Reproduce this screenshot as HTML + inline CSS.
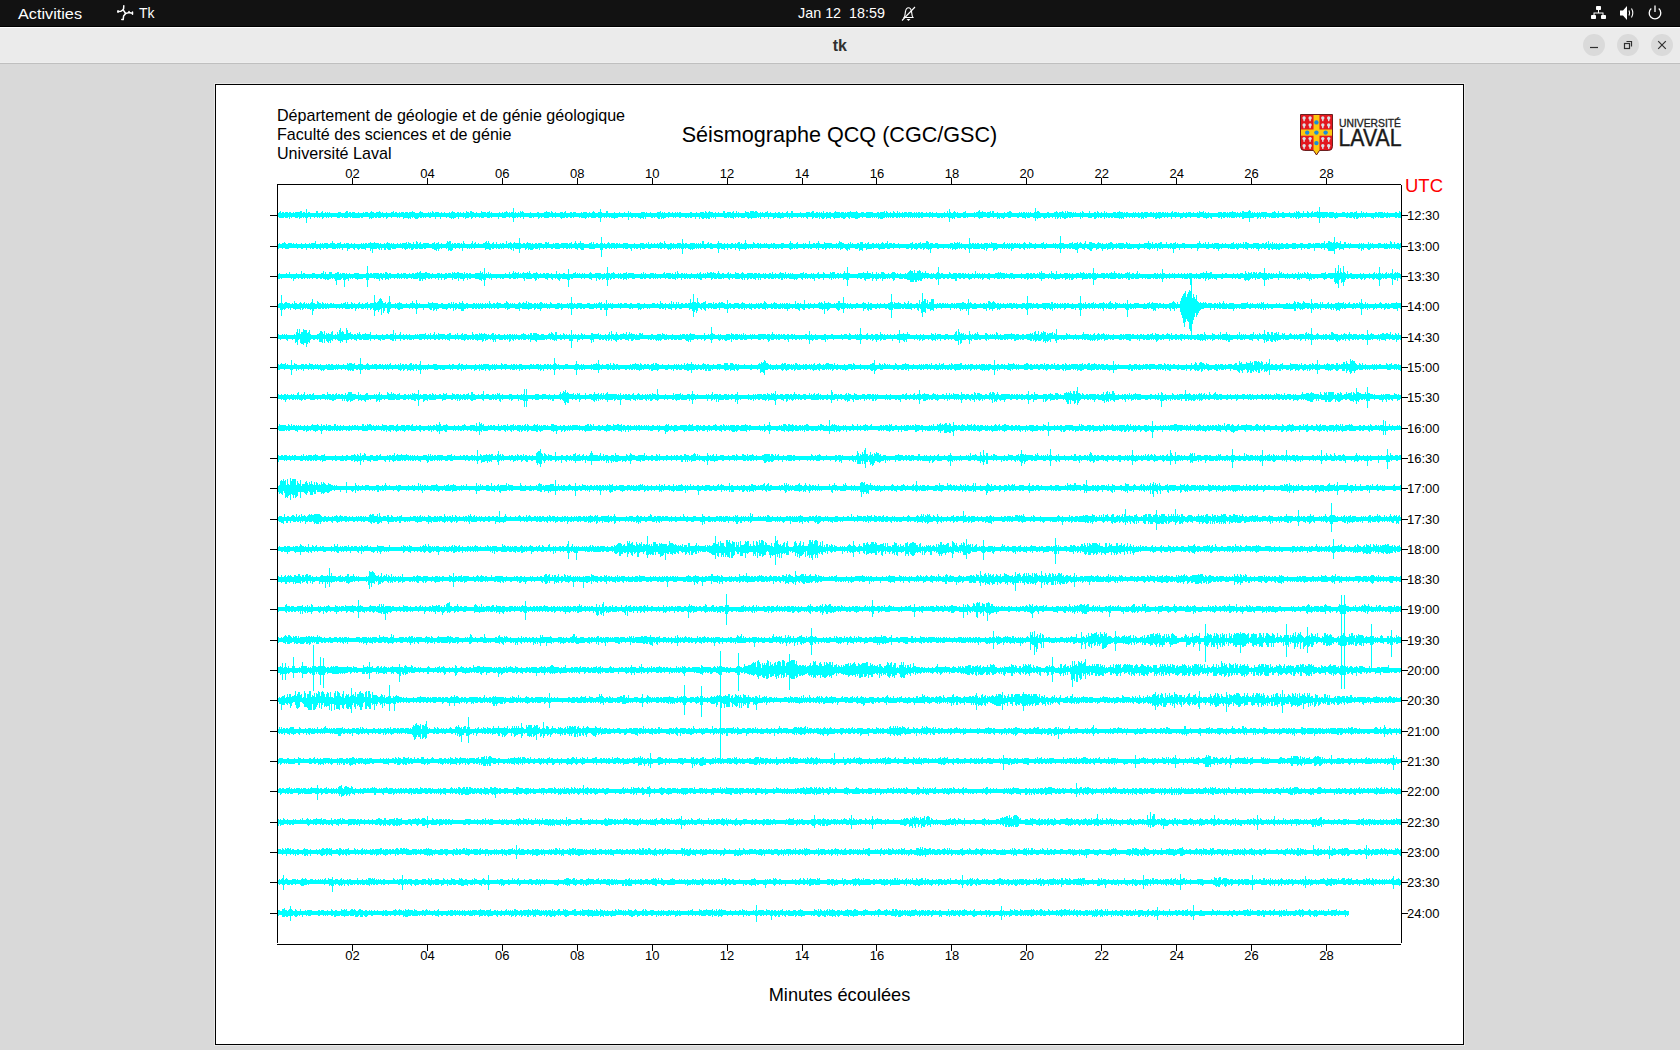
<!DOCTYPE html>
<html><head><meta charset="utf-8">
<style>
html,body{margin:0;padding:0;}
body{width:1680px;height:1050px;overflow:hidden;background:#d9d9d9;position:relative;font-family:"Liberation Sans",sans-serif;}
.abs{position:absolute;}
#top{left:0;top:0;width:1680px;height:26px;background:#121212;}
#topline{left:0;top:26px;width:1680px;height:1px;background:#000;}
#title{left:0;top:27px;width:1680px;height:37px;background:#ebebeb;}
#tl1{left:0;top:27px;width:1680px;height:1px;background:#fff;}
#tl2{left:0;top:62px;width:1680px;height:1px;background:#eeeeee;}
#tl3{left:0;top:63px;width:1680px;height:1px;background:#bfbfbf;}
#canvas{left:214px;top:83px;width:1249px;height:961px;background:#fff;border:1px solid #000;box-shadow:0 0 0 1px #e8e8e8;}
svg{position:absolute;left:0;top:0;}
.tb{color:#fff;font-size:14px;}
</style></head><body>
<div id="top" class="abs"></div>
<div id="topline" class="abs"></div>
<div id="title" class="abs"></div>
<div id="tl1" class="abs"></div>
<div id="tl2" class="abs"></div>
<div id="tl3" class="abs"></div>
<div id="canvas" class="abs" style="left:215px;top:84px;width:1247px;height:959px;"></div>
<svg width="1680" height="1050" viewBox="0 0 1680 1050" font-family="Liberation Sans, sans-serif">
<!-- top bar -->
<text x="18" y="18.5" fill="#fff" font-size="14.5" textLength="64" lengthAdjust="spacingAndGlyphs">Activities</text>
<g fill="none" stroke="#fff" stroke-width="1.5" stroke-linecap="round" stroke-linejoin="round">
<path d="M123.8 5.8L123.6 8.5L123.2 9.8L121 11.2L118 11.6"/>
<path d="M123.2 9.8L125.6 13.5L128.8 12.6L132.3 13.2"/>
<path d="M125.6 13.5L123.6 16L123.2 19.6L121.8 19.6"/>
<path d="M118 10.8V12.2M132.5 12V14.2M129 11.5V12.5"/>
</g>
<text x="139" y="18" fill="#fff" font-size="14.5" textLength="15.5" lengthAdjust="spacingAndGlyphs">Tk</text>
<text x="798" y="18" fill="#fff" font-size="14.5" textLength="87" lengthAdjust="spacingAndGlyphs" xml:space="preserve">Jan 12  18:59</text>
<g fill="none" stroke="#fff" stroke-width="1.1">
<path d="M904 17.5C905.5 15.5 905 13 905.5 11.5C906 9 907.5 7.8 908.5 7.8C909.5 7.8 911 9 911.5 11.5C912 13 911.5 15.5 913 17.5Z"/>
<path d="M902 20.5L915 7"/>
</g>
<path d="M906.5 19H910.5L908.5 21Z" fill="#fff"/>
<!-- network -->
<g fill="#fff">
<rect x="1596" y="6" width="5" height="4" rx="0.8"/>
<rect x="1591" y="15" width="5" height="4" rx="0.8"/>
<rect x="1601" y="15" width="5" height="4" rx="0.8"/>
<path d="M1598 10h1v2.5h4.5v2.5h-1v-1.5h-8v1.5h-1v-2.5h4.5z"/>
</g>
<!-- volume -->
<path d="M1620 10.5h3l4-4.5v14l-4-4.5h-3z" fill="#fff"/>
<g fill="none" stroke="#fff" stroke-width="1.1">
<path d="M1629 10.5q1.3 2.5 0 5"/>
<path d="M1631.5 8.5q2.6 4.5 0 9"/>
</g>
<!-- power -->
<g fill="none" stroke="#fff" stroke-width="1.3">
<path d="M1651.3 8.6A5.8 5.8 0 1 0 1658.7 8.6"/>
<path d="M1655 5.5v6.5"/>
</g>
<!-- title -->
<text x="839.8" y="51" fill="#303030" font-size="16" font-weight="bold" text-anchor="middle">tk</text>
<!-- window buttons -->
<circle cx="1594" cy="45" r="11" fill="#dadada"/>
<circle cx="1628" cy="45" r="11" fill="#dadada"/>
<circle cx="1662" cy="45" r="11" fill="#dadada"/>
<g stroke="#303030" stroke-width="1.2" fill="none">
<path d="M1590 47.5H1598"/>
<path d="M1658.2 41.2L1665.8 48.8M1665.8 41.2L1658.2 48.8"/>
<rect x="1624.5" y="43.5" width="5" height="5"/>
<path d="M1626.5 41.5H1631.5V46.5"/>
</g>
<!-- header -->
<g fill="#000" font-size="16.1">
<text x="277" y="121">Département de géologie et de génie géologique</text>
<text x="277" y="140">Faculté des sciences et de génie</text>
<text x="277" y="159">Université Laval</text>
</g>
<text x="839.5" y="142" font-size="21.6" text-anchor="middle" fill="#000">Séismographe QCQ (CGC/GSC)</text>
<!-- logo -->
<g>
<path d="M1300.5 114.5H1332.5V146.5Q1332.5 150.5 1328.5 150.5H1319.5L1316.5 155L1313.5 150.5H1304.5Q1300.5 150.5 1300.5 146.5Z" fill="#e3171e"/>
<path d="M1313.5 115H1319.5V150.8L1316.5 154.6L1313.5 150.8Z" fill="#fdc80f"/>
<rect x="1301" y="129.5" width="31" height="6.2" fill="#fdc80f"/>
<path d="M1300.5 114.5H1332.5V146.5Q1332.5 150.5 1328.5 150.5H1319.5L1316.5 155L1313.5 150.5H1304.5Q1300.5 150.5 1300.5 146.5Z" fill="none" stroke="#5c1414" stroke-width="0.9"/>
<g fill="#1c8bd6">
<circle cx="1316.4" cy="122.4" r="2.2"/><circle cx="1307.2" cy="132.6" r="2.2"/><circle cx="1316.4" cy="132.6" r="2.2"/><circle cx="1325.6" cy="132.6" r="2.2"/><circle cx="1316.4" cy="143.1" r="2.2"/>
</g>
<g fill="#dde2e6">
<circle cx="1304.1" cy="118.0" r="1.7"/><rect x="1303.4" y="119.0" width="1.4" height="2.2"/>
<circle cx="1304.1" cy="125.0" r="1.7"/><rect x="1303.4" y="126.0" width="1.4" height="2.2"/>
<circle cx="1304.1" cy="138.6" r="1.7"/><rect x="1303.4" y="139.6" width="1.4" height="2.2"/>
<circle cx="1304.1" cy="145.7" r="1.7"/><rect x="1303.4" y="146.7" width="1.4" height="2.2"/>
<circle cx="1310.1" cy="118.0" r="1.7"/><rect x="1309.4" y="119.0" width="1.4" height="2.2"/>
<circle cx="1310.1" cy="125.0" r="1.7"/><rect x="1309.4" y="126.0" width="1.4" height="2.2"/>
<circle cx="1310.1" cy="138.6" r="1.7"/><rect x="1309.4" y="139.6" width="1.4" height="2.2"/>
<circle cx="1310.1" cy="145.7" r="1.7"/><rect x="1309.4" y="146.7" width="1.4" height="2.2"/>
<circle cx="1322.8" cy="118.0" r="1.7"/><rect x="1322.1" y="119.0" width="1.4" height="2.2"/>
<circle cx="1322.8" cy="125.0" r="1.7"/><rect x="1322.1" y="126.0" width="1.4" height="2.2"/>
<circle cx="1322.8" cy="138.6" r="1.7"/><rect x="1322.1" y="139.6" width="1.4" height="2.2"/>
<circle cx="1322.8" cy="145.7" r="1.7"/><rect x="1322.1" y="146.7" width="1.4" height="2.2"/>
<circle cx="1328.7" cy="118.0" r="1.7"/><rect x="1328.0" y="119.0" width="1.4" height="2.2"/>
<circle cx="1328.7" cy="125.0" r="1.7"/><rect x="1328.0" y="126.0" width="1.4" height="2.2"/>
<circle cx="1328.7" cy="138.6" r="1.7"/><rect x="1328.0" y="139.6" width="1.4" height="2.2"/>
<circle cx="1328.7" cy="145.7" r="1.7"/><rect x="1328.0" y="146.7" width="1.4" height="2.2"/>
</g>
<text x="1339" y="127.3" font-size="11.6" fill="#222" stroke="#222" stroke-width="0.35" textLength="62" lengthAdjust="spacingAndGlyphs">UNIVERSITÉ</text>
<text x="1338.5" y="146" font-size="23" fill="#1a1a1a" stroke="#1a1a1a" stroke-width="0.4" textLength="63" lengthAdjust="spacingAndGlyphs">LAVAL</text>
</g>
<text x="1405" y="192" font-size="18.5" fill="#ff0000">UTC</text>
<text x="839.5" y="1001" font-size="18.2" text-anchor="middle" fill="#000">Minutes écoulées</text>
<g fill="#00ffff" shape-rendering="crispEdges">
<path d="M278 213h1v-1h1v-1h1v2h1v-1h2v1h1v-1h3v1h1v-1h2v1h2v-1h1v1h1v-1h5v-1h2v2h1v-1h2v1h1v-4h1v4h1v-1h2v1h6v-2h2v2h3v-1h1v-1h1v2h2v-1h1v1h1v-1h1v1h1v-1h1v1h8v-1h3v1h4v-1h1v-1h2v2h1v-1h2v1h1v-1h3v1h3v-1h1v1h4v-1h1v1h1v-1h3v1h2v-1h1v-1h1v1h2v1h2v-1h3v-1h1v1h1v1h1v-1h1v1h3v-1h1v1h4v-1h2v-1h1v2h1v-1h2v1h2v-1h1v1h1v-1h3v1h1v-1h3v1h1v-1h3v-1h1v1h2v1h4v-1h1v-1h1v1h2v1h5v-1h1v1h1v-1h1v1h1v-2h1v1h1v1h1v-1h4v1h2v-1h1v1h2v-1h1v1h4v-1h1v1h1v-1h1v-1h1v1h2v1h2v-1h2v1h1v-1h1v1h2v-1h1v1h2v-2h1v1h2v1h1v-2h2v1h2v1h2v-1h1v1h4v-2h1v1h4v1h1v-1h2v-1h1v2h1v-1h1v1h7v-1h1v1h2v-1h1v1h1v-1h2v-1h1v1h1v1h1v-1h1v1h1v-1h2v-4h1v5h1v-1h1v1h2v-1h1v1h1v-2h1v1h1v-1h1v1h1v1h6v-1h1v1h6v-1h2v1h5v-1h2v-1h1v1h3v1h1v-2h1v1h1v1h2v-1h1v1h4v-1h3v1h1v-1h1v-1h1v2h4v-1h2v1h1v-1h3v1h5v-1h1v1h1v-1h4v1h2v-1h1v1h2v-1h1v-1h1v1h1v1h3v-1h2v-3h1v3h1v1h4v-2h2v2h6v-1h1v1h4v-1h1v1h4v-1h1v1h3v-2h1v2h1v-1h1v1h10v-1h4v1h1v-1h1v1h3v-1h1v1h6v-1h3v-1h1v2h1v-1h1v1h1v-1h1v1h3v-1h2v1h2v-1h1v1h2v-1h1v1h1v-1h1v1h1v-1h2v1h9v-1h2v1h4v-1h1v1h3v-1h4v1h1v-2h1v1h1v1h1v-1h1v-1h1v1h3v1h2v-1h1v1h2v-1h1v1h4v-2h2v2h2v-1h4v1h1v-1h1v-1h1v2h2v-2h1v2h1v-1h1v1h6v-2h1v1h3v1h1v-2h4v1h1v-1h2v1h1v1h2v-1h1v1h1v-1h1v1h2v-1h2v-1h1v2h2v-1h1v1h4v-1h1v1h2v-1h2v1h2v-1h1v1h3v-1h1v-1h1v2h3v-2h2v2h7v-1h1v1h5v-1h4v1h1v-1h1v-1h2v2h2v-1h2v1h1v-1h1v1h1v-1h1v1h1v-2h1v2h2v-1h2v1h1v-1h2v1h3v-1h1v-1h1v1h4v1h1v-1h3v1h1v-1h1v1h1v-1h3v-1h1v1h5v-1h1v1h1v1h3v-1h3v1h2v-1h7v1h4v-1h2v1h1v-1h4v-1h1v2h1v-2h1v1h1v1h2v-1h1v1h2v-2h1v1h1v1h2v-2h1v2h1v-1h1v1h2v-1h1v1h1v-1h3v1h1v-1h4v1h2v-1h1v1h1v-1h1v1h1v-1h2v1h1v-1h2v1h3v-1h1v1h2v-1h2v1h1v-1h1v1h3v-1h1v1h7v-1h1v1h2v-2h1v2h1v-4h1v3h1v1h2v-1h1v-1h1v1h1v1h1v-1h1v1h5v-1h2v-1h1v2h8v-1h1v1h1v-1h2v-1h1v-1h1v2h2v-1h1v1h3v1h1v-1h3v-1h1v2h1v-2h2v2h3v-1h1v1h6v-1h1v1h2v-1h2v-1h2v1h1v1h7v-1h1v1h1v-1h1v1h1v-1h2v1h1v-1h1v1h1v-1h1v1h1v-1h1v1h3v-1h1v-4h1v4h1v-1h2v1h1v1h7v-1h2v1h5v-1h2v-1h1v1h1v1h1v-1h3v-1h1v1h1v1h1v-2h1v2h1v-2h1v1h4v1h1v-1h1v1h1v-1h1v1h4v-1h1v1h1v-2h1v1h1v1h5v-2h1v2h4v-1h2v1h1v-2h1v1h1v1h2v-1h1v1h2v-2h1v2h1v-1h1v1h6v-1h3v1h1v-1h2v-1h1v1h3v1h1v-1h1v1h1v-1h2v1h5v-1h1v1h1v-1h1v1h2v-1h1v1h2v-1h2v1h1v-1h4v1h2v-1h2v1h1v-1h1v1h2v-1h1v1h1v-1h3v1h1v-1h2v1h1v-1h1v1h1v-1h1v1h3v-1h1v-1h1v2h1v-1h3v1h1v-1h1v1h4v-1h1v1h2v-1h1v1h1v-1h3v1h2v-1h1v1h3v-1h1v1h1v-2h1v1h3v-1h1v2h1v-1h1v1h2v-1h1v1h9v-1h4v1h1v-1h3v1h1v-1h1v1h1v-1h3v-1h1v1h3v1h1v-1h1v1h2v-1h1v1h1v-2h2v1h4v-1h1v-1h1v1h1v2h1v-1h1v1h1v-1h1v1h2v-1h1v1h1v-1h1v1h1v-1h6v1h5v-1h2v-1h1v1h1v1h2v-2h1v2h3v-1h2v1h5v-1h1v1h4v-1h1v1h1v-2h1v1h1v-1h1v1h1v1h3v-2h1v2h3v-2h1v1h1v1h2v-1h1v-1h1v2h1v-1h3v-1h1v1h1v-5h1v5h8v1h1v-1h5v1h2v-1h1v1h5v-1h3v1h2v-1h1v1h2v-1h3v1h1v-1h2v-1h1v2h4v-2h1v2h1v-1h1v1h2v-1h1v1h8v-1h2v1h1v-1h5v1h1v-1h1v1h2v-1h1v1h7v-1h2v1h2v-2h1v1h1v6h-3v-1h-1v1h-2v-1h-5v1h-1v-1h-1v1h-2v-1h-2v1h-4v-1h-1v1h-1v-1h-2v1h-1v-1h-1v2h-1v-1h-2v-1h-5v1h-1v-1h-2v1h-1v-1h-1v1h-1v-1h-1v1h-1v1h-2v-2h-1v2h-1v-1h-1v-1h-1v1h-3v-1h-1v1h-2v-1h-8v1h-2v1h-1v-1h-1v-1h-1v1h-4v-1h-2v1h-1v-1h-1v1h-3v-1h-1v1h-1v5h-1v-5h-2v-1h-5v1h-1v-1h-2v1h-2v-1h-4v1h-1v-1h-1v1h-2v1h-1v-2h-1v2h-1v-1h-1v-1h-1v1h-1v-1h-1v1h-2v-1h-5v1h-3v-1h-3v1h-2v-1h-1v1h-5v-1h-1v1h-1v-1h-3v2h-1v-2h-1v1h-1v-1h-2v2h-1v-2h-1v1h-1v1h-1v-2h-3v1h-4v4h-1v-4h-5v1h-2v-2h-2v1h-1v-1h-2v1h-1v-1h-1v1h-4v-1h-1v1h-1v-1h-1v1h-1v-1h-2v1h-2v-1h-1v2h-1v-2h-1v1h-2v-1h-6v2h-1v-1h-1v-1h-1v1h-2v1h-1v-1h-3v-1h-3v1h-3v-1h-6v1h-1v-1h-3v1h-2v-1h-2v1h-2v1h-1v-2h-4v1h-1v-1h-3v2h-1v-2h-3v1h-1v-1h-2v1h-1v-1h-2v1h-2v1h-1v-1h-2v1h-2v-2h-1v1h-1v-1h-6v1h-2v-1h-1v2h-1v-1h-1v1h-1v-2h-1v1h-2v-1h-3v1h-1v-1h-1v1h-1v-1h-2v1h-1v-1h-2v1h-1v-1h-2v2h-1v-1h-1v1h-1v-1h-1v1h-1v-1h-5v-1h-1v1h-2v-1h-1v1h-2v-1h-1v1h-1v-1h-1v2h-1v-2h-2v1h-2v-1h-1v1h-1v-1h-1v1h-1v1h-2v-2h-2v1h-4v-1h-5v1h-1v-1h-1v2h-1v-2h-7v1h-1v-1h-1v1h-2v-1h-1v1h-2v1h-2v-1h-2v-1h-1v2h-1v-2h-1v1h-1v1h-1v-2h-1v2h-1v-2h-2v1h-1v-1h-2v1h-2v-1h-1v1h-2v1h-1v-1h-1v-1h-2v1h-3v1h-1v-1h-1v3h-1v-3h-2v-1h-3v1h-3v-1h-1v2h-1v-1h-3v-1h-3v1h-2v-1h-6v1h-3v-1h-3v1h-1v1h-1v-1h-2v-1h-1v2h-1v-1h-1v1h-1v-2h-3v1h-1v-1h-3v1h-3v-1h-4v1h-3v1h-1v-1h-1v-1h-3v1h-1v-1h-6v1h-1v-1h-1v1h-3v-1h-2v1h-4v-1h-2v2h-1v-1h-1v1h-1v-1h-2v4h-1v-4h-1v-1h-3v1h-1v-1h-1v1h-2v-1h-1v1h-3v-1h-4v1h-1v-1h-2v1h-1v-1h-6v1h-2v-1h-1v1h-2v-1h-1v1h-1v-1h-1v1h-1v-1h-1v1h-1v-1h-1v1h-1v-1h-1v1h-1v-1h-3v1h-1v-1h-1v1h-1v-1h-2v1h-1v-1h-1v1h-2v-1h-2v1h-2v-1h-1v1h-1v-1h-1v1h-1v-1h-1v1h-1v-1h-1v1h-2v1h-3v-1h-1v1h-1v-2h-1v1h-1v-1h-1v1h-1v-1h-1v1h-1v-1h-1v1h-5v-1h-3v1h-1v-1h-2v1h-2v1h-3v-1h-4v-1h-1v2h-1v-1h-1v-1h-2v1h-1v1h-2v-1h-2v-1h-1v1h-5v1h-1v-1h-1v-1h-2v2h-1v-1h-3v1h-1v-2h-1v1h-1v1h-2v-1h-1v-1h-1v2h-1v-2h-1v1h-3v-1h-1v1h-1v1h-1v-2h-4v2h-1v-1h-1v-1h-2v1h-1v-1h-1v1h-1v-1h-3v1h-1v-1h-4v1h-2v-1h-1v2h-1v-2h-1v1h-1v-1h-3v1h-3v1h-1v-1h-3v-1h-1v1h-2v1h-1v-2h-4v2h-1v-2h-3v1h-1v-1h-3v2h-1v-2h-1v1h-1v-1h-1v1h-5v1h-1v-1h-2v1h-1v-1h-1v-1h-2v1h-4v-1h-2v1h-1v-1h-2v1h-1v-1h-1v2h-1v-1h-3v-1h-1v1h-1v-1h-1v1h-3v-1h-8v2h-1v-2h-1v1h-1v-1h-1v1h-1v-1h-1v2h-2v-1h-1v1h-1v-1h-2v1h-2v-1h-1v-1h-1v2h-1v-2h-3v2h-1v-2h-3v1h-2v-1h-1v1h-1v-1h-1v1h-2v-1h-4v1h-2v-1h-3v1h-1v-1h-1v1h-1v-1h-4v1h-1v-1h-2v1h-2v1h-1v-1h-1v1h-1v-2h-1v2h-2v-1h-1v-1h-2v1h-1v-1h-1v1h-2v-1h-5v2h-1v-2h-1v2h-1v-1h-2v1h-1v-1h-2v-1h-2v1h-1v-1h-2v1h-2v-1h-2v3h-1v-3h-5v1h-1v-1h-4v1h-3v1h-1v-1h-3v-1h-1v1h-1v-1h-2v1h-1v-1h-1v1h-1v-1h-2v1h-1v4h-1v-4h-2v-1h-2v1h-5v-1h-2v1h-1v-1h-1v1h-1v1h-1v-1h-4v-1h-1v1h-1v-1h-5v1h-1v-1h-1v1h-2v-1h-2v1h-2v-1h-1v1h-3v1h-1v-1h-1v-1h-4v1h-1v-1h-2v1h-1v-1h-3v1h-5v-1h-2v1h-1v-1h-1v1h-1v1h-1v-2h-4v1h-1v-1h-1v1h-3v-1h-5v2h-1v-2h-2v1h-1v-1h-2v1h-1v-1h-1v1h-2v4h-1v-4h-1v-1h-2v1h-1v-1h-3v1h-4v-1h-3v2h-1v-2h-6v1h-1v-1h-1v1h-3v-1h-3v1h-3v-1h-1v1h-1v-1h-3v1h-1v-1h-2v1h-1v1h-1v-2h-2v1h-3v1h-1v-2h-1v1h-1v-1h-4v2h-1v-2h-2v1h-2v1h-1v-1h-1v1h-1v-1h-2v-1h-2v1h-1v-1h-5v2h-1v-2h-4v2h-1v-2h-4v1h-2v-1h-3v1h-1v-1h-1v1h-1v-1h-1v1h-2v-1h-1v1h-1v1h-3v-1h-1v-1h-1v1h-1v-1h-1v2h-1v-1h-1v1h-1v-1h-4v1h-1v-2h-3v1h-1v-1h-1v1h-1v-1h-5v1h-1v-1h-3v1h-1v1h-1v-2h-2v1h-1v-1h-2v1h-3v-1h-1v1h-2v-1h-1v1h-2v1h-1v-1h-1v1h-1v-2h-6v1h-2v-1h-1v1h-8v-1h-1v1h-1v-1h-2v1h-4v-1h-1v1h-1v-1h-2v1h-3v-1h-5v1h-1v-1h-2v1h-1v-1h-1v1h-1v-1h-2v1h-1v1h-1v-2h-2v1h-1v-1h-1v1h-1v-1h-2v1h-1v-1h-3v2h-1v-2h-2v1h-1v5h-1v-5h-1v-1h-1v1h-1v-1h-1v1h-2v1h-1v-2h-1v1h-3v-1h-3v1h-1v-1h-1v2h-1v-2h-1v1h-3v-1h-1v1h-5v-1h-1z"/>
<path d="M278 244h1v-1h1v1h2v-1h2v-1h1v1h1v1h2v-1h4v1h1v-1h1v1h2v-1h1v1h4v-1h1v1h3v-1h1v1h3v-1h1v1h1v-1h4v-2h1v3h4v-1h1v1h1v-1h1v1h1v-1h4v1h2v-1h2v-2h1v2h2v1h2v-1h3v-1h1v2h3v-1h1v1h1v-1h3v1h2v-1h1v1h2v-1h1v1h6v-1h1v1h1v-1h1v1h1v-1h2v1h1v-1h2v-1h1v1h3v-1h1v1h4v1h1v-1h1v1h3v-1h1v1h1v-1h1v-1h1v1h2v1h1v-1h1v1h1v-1h1v1h3v-1h1v1h2v-1h1v1h1v-1h4v-1h1v2h1v-2h1v1h2v1h2v-2h1v2h2v-3h1v1h1v2h1v-1h1v-1h1v2h2v-1h6v1h3v-1h2v-1h1v2h1v-1h2v-1h1v2h2v-1h1v1h4v-1h1v-2h1v1h1v-1h2v3h1v-1h1v1h1v-1h2v1h1v-1h3v1h1v-1h1v1h1v-3h1v2h1v1h6v-1h1v-2h1v3h1v-1h1v-1h1v2h2v-1h1v1h4v-1h2v-1h1v-1h1v2h1v-2h1v2h1v1h2v-1h1v-1h1v2h2v-2h1v2h3v-1h1v1h1v-1h2v1h2v-3h1v3h1v-1h2v-1h1v1h1v1h1v-1h1v-1h1v1h4v-5h1v5h1v1h2v-1h2v1h1v-1h1v-1h1v1h3v1h1v-1h1v1h2v-1h2v1h1v-1h4v1h3v-2h2v1h1v-1h1v2h4v-1h1v1h1v-1h4v1h2v-1h7v1h1v-1h2v-1h1v2h2v-1h1v-2h1v2h1v1h1v-1h2v-2h1v2h3v1h5v-1h2v-1h1v2h1v-2h1v2h2v-1h2v1h2v-1h1v-6h1v6h1v1h1v-1h1v1h2v-1h1v-1h1v1h1v1h1v-1h4v1h1v-1h2v1h1v-1h1v1h3v-1h5v1h6v-1h1v1h5v-1h4v1h2v-1h1v1h1v-2h1v2h2v-1h1v1h2v-1h1v1h2v-1h1v1h1v-1h1v-1h1v1h2v1h1v-3h1v2h1v1h4v-1h2v1h1v-1h1v1h3v-1h4v1h1v-5h1v4h1v1h1v-1h2v1h3v-1h5v1h1v-1h1v1h1v-1h1v1h1v-1h1v1h1v-3h2v3h3v-1h1v-1h1v2h1v-1h2v1h5v-1h1v-2h1v2h3v1h2v-1h1v1h2v-1h1v1h3v-1h2v1h2v-1h1v1h1v-1h1v-1h2v2h1v-1h1v1h2v-1h1v-3h1v3h1v1h6v-2h1v1h1v1h2v-1h2v1h1v-1h1v1h3v-1h1v1h1v-1h1v1h4v-1h1v1h1v-1h2v1h6v-1h3v1h5v-1h1v-2h1v2h2v1h3v-1h1v-1h1v2h5v-1h1v1h1v-1h1v1h3v-3h1v3h3v-1h2v1h1v-1h2v-2h1v2h1v1h4v-2h1v1h7v1h4v-1h1v1h1v-1h1v-2h1v1h2v1h2v1h4v-1h1v1h1v-2h1v2h1v-1h1v1h4v-1h2v1h1v-2h3v2h2v-1h1v1h1v-1h1v-1h1v2h3v-1h2v1h2v-1h1v1h1v-1h1v1h2v-1h1v-1h1v1h1v1h1v-1h2v-2h1v3h1v-1h3v1h1v-1h2v1h3v-1h1v1h11v-1h2v-1h1v2h2v-1h2v1h1v-1h2v-1h1v2h1v-1h4v-2h2v1h1v2h1v-1h3v1h2v-1h3v1h12v-1h3v1h1v-2h1v1h2v-1h1v1h1v-1h1v2h1v-1h1v1h7v-6h1v5h1v1h1v-1h2v1h1v-1h1v1h1v-1h2v1h2v-1h1v1h2v-1h4v1h1v-1h1v1h1v-2h1v1h5v1h6v-1h1v-1h1v2h2v-1h1v1h1v-1h1v1h1v-1h2v1h1v-1h2v1h1v-1h1v1h1v-1h1v1h3v-1h1v-1h1v1h1v1h3v-2h1v1h2v1h3v-1h1v1h5v-1h2v-1h1v2h2v-1h1v1h6v-1h1v1h1v-1h1v1h3v-1h1v-7h1v7h3v1h5v-1h3v-1h1v2h1v-1h3v-1h1v2h1v-1h1v-1h1v1h1v1h2v-1h1v-2h1v3h3v-2h3v1h3v1h2v-1h1v-1h1v1h2v1h1v-1h1v1h3v-1h1v1h1v-1h2v-1h2v1h1v1h3v-1h1v1h1v-1h6v1h2v-2h1v1h1v1h1v-1h1v1h9v-1h1v1h4v-1h4v-2h1v2h2v1h1v-2h1v2h2v-1h2v1h1v-1h2v-1h2v2h4v-2h1v2h3v-1h2v1h1v-1h2v-1h1v2h1v-1h1v1h4v-1h3v1h12v-1h2v-2h1v2h1v1h2v-1h1v1h1v-2h1v2h2v-2h1v2h3v-1h1v1h1v-1h5v1h3v-1h1v1h2v-1h1v1h5v-1h2v-1h1v2h2v-1h1v1h1v-1h1v1h1v-1h1v1h2v-2h1v2h1v-2h2v1h2v1h4v-1h6v1h3v-1h2v1h1v-1h1v-1h1v2h1v-3h1v3h1v-1h1v1h1v-2h1v2h1v-1h1v1h1v-1h1v1h2v-1h1v1h1v-1h2v1h3v-1h2v1h4v-1h4v1h4v-1h3v1h5v-1h3v1h2v-1h1v1h1v-1h5v1h1v-1h3v-2h1v3h1v-1h2v-2h2v1h2v1h1v-1h1v-5h1v6h1v-1h2v1h2v-2h1v3h3v-2h2v2h2v-1h1v1h1v-1h1v1h8v-1h1v1h1v-1h1v1h1v-1h1v1h4v-2h1v2h1v-1h1v1h1v-1h1v1h5v-1h3v1h3v-1h1v1h1v-1h1v1h3v-3h1v1h1v2h2v-2h1v2h2v-1h2v1h1v-1h1v5h-1v2h-1v-1h-3v-1h-1v1h-1v-1h-2v1h-1v-1h-1v1h-1v-1h-1v1h-4v-1h-5v1h-1v-1h-4v1h-1v-1h-2v1h-1v1h-2v-1h-1v-1h-3v2h-1v-1h-1v2h-1v-3h-1v1h-2v-1h-8v1h-1v-1h-5v2h-1v-1h-3v1h-1v-2h-2v1h-2v5h-1v-3h-6v-2h-1v-1h-2v2h-1v-2h-2v1h-1v-1h-6v3h-1v-3h-4v1h-3v-1h-2v1h-1v-1h-2v2h-1v-2h-3v1h-1v-1h-1v1h-4v-1h-3v1h-4v-1h-1v1h-4v1h-2v-1h-1v1h-1v-1h-3v1h-1v-1h-1v-1h-1v2h-2v-2h-2v1h-2v-1h-2v1h-1v-1h-1v1h-1v2h-1v-2h-2v-1h-2v1h-1v-1h-1v1h-1v-1h-3v2h-1v-1h-2v-1h-1v1h-1v-1h-4v1h-1v1h-1v-1h-1v-1h-1v1h-5v-1h-1v1h-1v-1h-6v1h-1v-1h-1v1h-1v2h-1v-2h-2v-1h-1v1h-2v-1h-4v1h-3v-1h-7v1h-1v2h-1v-3h-5v1h-1v-1h-6v1h-1v-1h-4v2h-1v-2h-3v1h-2v4h-1v-4h-1v-1h-1v1h-1v-1h-1v1h-1v-1h-5v1h-1v-1h-1v1h-2v-1h-1v3h-1v-3h-2v1h-1v-1h-1v1h-1v-1h-1v1h-1v1h-1v-1h-2v-1h-2v1h-1v-1h-4v1h-1v1h-1v-1h-1v-1h-3v1h-1v-1h-1v1h-5v-1h-2v1h-1v-1h-1v1h-4v-1h-2v1h-1v-1h-2v1h-1v1h-1v-2h-1v1h-3v1h-1v-2h-1v1h-3v2h-1v-2h-1v-1h-2v1h-2v1h-1v-2h-3v1h-1v2h-2v-1h-1v-1h-2v-1h-2v2h-1v-1h-2v-1h-3v1h-1v4h-1v-3h-2v-1h-3v-1h-1v1h-2v-1h-1v1h-1v-1h-2v1h-2v-1h-1v1h-1v4h-1v-4h-1v-1h-1v1h-1v-1h-1v1h-1v-1h-9v1h-2v-1h-1v1h-1v-1h-6v1h-2v-1h-4v1h-1v-1h-1v1h-1v-1h-2v2h-1v-1h-1v-1h-2v1h-2v-1h-5v1h-2v2h-1v-3h-1v1h-2v-1h-1v1h-1v-1h-1v1h-1v-1h-1v1h-1v-1h-4v1h-1v1h-1v-1h-1v1h-1v1h-1v-3h-5v1h-1v2h-1v-3h-1v2h-1v-1h-3v-1h-1v1h-7v-1h-1v1h-2v4h-1v-4h-1v-1h-2v2h-1v-1h-1v-1h-2v1h-1v-1h-1v1h-1v-1h-1v1h-2v1h-1v-1h-2v1h-1v-2h-1v1h-1v-1h-1v1h-1v-1h-4v1h-1v-1h-4v1h-2v-1h-5v1h-1v4h-1v-4h-1v1h-1v-1h-2v-1h-1v1h-1v1h-1v-2h-1v1h-2v-1h-2v1h-1v1h-1v-1h-2v-1h-1v1h-1v1h-1v-2h-2v1h-3v-1h-6v1h-1v-1h-5v1h-1v-1h-3v1h-3v-1h-2v1h-5v1h-1v-1h-1v-1h-4v1h-1v-1h-1v1h-5v1h-1v-2h-3v3h-1v-1h-2v1h-1v-3h-1v1h-3v-1h-5v2h-1v-1h-1v2h-1v-1h-1v-1h-1v-1h-2v1h-2v1h-1v-2h-1v1h-1v-1h-1v1h-1v-1h-3v1h-1v-1h-2v1h-1v-1h-2v1h-1v1h-1v-2h-1v1h-2v-1h-3v2h-1v-2h-1v1h-1v-1h-4v1h-2v-1h-1v1h-1v-1h-3v1h-2v-1h-5v1h-2v-1h-1v1h-1v-1h-1v1h-2v1h-1v-1h-1v-1h-6v1h-2v-1h-2v1h-1v-1h-1v1h-2v-1h-1v1h-1v-1h-3v1h-2v-1h-7v1h-1v-1h-1v1h-1v-1h-5v1h-1v-1h-1v1h-1v-1h-1v1h-1v-1h-1v1h-1v1h-1v-1h-5v2h-1v-2h-1v-1h-2v2h-1v-2h-3v1h-2v-1h-2v2h-1v-2h-2v2h-1v-1h-3v-1h-1v1h-1v4h-1v-4h-1v-1h-4v1h-3v-1h-4v1h-2v-1h-3v1h-1v-1h-1v1h-1v-1h-1v1h-1v-1h-1v1h-2v1h-1v-1h-1v1h-1v-1h-2v-1h-2v1h-1v-1h-1v1h-1v5h-1v-5h-1v-1h-1v1h-1v-1h-1v1h-1v-1h-1v1h-1v-1h-1v1h-1v-1h-1v1h-1v1h-1v-1h-1v1h-1v-1h-1v-1h-2v1h-1v-1h-2v1h-2v-1h-1v1h-1v-1h-7v1h-3v-1h-3v1h-3v-1h-1v2h-1v-2h-2v1h-2v-1h-1v1h-1v-1h-2v3h-1v-2h-1v-1h-2v1h-3v-1h-1v1h-1v-1h-6v1h-1v-1h-1v1h-1v-1h-2v1h-1v-1h-1v1h-1v-1h-2v1h-2v-1h-2v2h-1v7h-1v-7h-1v-2h-5v1h-6v-1h-5v2h-3v-1h-1v-1h-2v2h-1v-1h-2v-1h-3v1h-1v-1h-1v1h-1v-1h-1v1h-2v-1h-2v1h-1v-1h-3v1h-5v-1h-2v1h-2v-1h-4v1h-1v-1h-2v1h-1v-1h-3v2h-1v-2h-1v1h-3v-1h-1v1h-1v1h-3v-1h-1v1h-1v-2h-1v1h-1v1h-1v-2h-4v1h-1v4h-1v-4h-4v-1h-1v3h-1v-3h-1v2h-1v-1h-1v-1h-1v1h-1v-1h-4v1h-1v-1h-1v1h-1v-1h-1v1h-2v-1h-1v1h-1v-1h-2v1h-2v-1h-1v2h-2v-1h-3v1h-1v-2h-10v1h-1v-1h-2v1h-1v-1h-1v1h-1v-1h-1v1h-1v-1h-4v3h-1v-3h-2v1h-1v-1h-3v1h-1v-1h-2v2h-1v1h-2v-1h-1v1h-1v-3h-1v1h-1v-1h-4v1h-1v-1h-1v1h-1v2h-1v-2h-1v2h-1v-1h-2v-1h-2v-1h-6v1h-2v-1h-1v1h-4v-1h-1v1h-3v-1h-1v1h-1v1h-2v-2h-1v1h-1v-1h-1v1h-2v1h-1v-1h-1v-1h-1v1h-1v-1h-6v1h-4v-1h-1v2h-3v-1h-1v-1h-1v2h-2v-2h-2v2h-1v-2h-1v2h-1v-1h-1v-1h-1v1h-4v4h-1v-4h-1v2h-1v-3h-4v2h-1v-1h-4v-1h-1v1h-1v1h-1v-1h-1v-1h-2v2h-1v-1h-1v-1h-3v1h-2v2h-1v-3h-4v2h-1v-2h-2v1h-1v-1h-1v1h-1v-1h-1v1h-4v-1h-4v1h-2v-1h-2v1h-1v-1h-2v2h-1v-1h-1v-1h-1v1h-2v-1h-2v1h-2v-1h-1v1h-1v-1h-3v2h-1v-2h-3v1h-2v-1h-3v1h-1v-1h-8v1h-4v-1h-2v1h-1v-1h-3v1h-1z"/>
<path d="M278 274h1v-1h1v1h6v-1h1v1h2v-2h1v2h6v-1h1v1h4v-3h1v3h1v-1h2v1h7v-1h3v1h6v-1h2v-2h1v3h1v-2h1v2h3v-2h3v2h3v-1h2v-1h2v2h1v-1h1v1h1v-1h3v1h1v-1h1v1h2v-1h1v1h4v-1h5v1h7v-1h1v-7h1v7h1v1h1v-1h2v1h1v-1h6v1h1v-1h2v1h1v-1h1v1h1v-2h2v1h1v1h1v-1h2v1h6v-1h2v1h2v-1h1v1h1v-1h3v1h3v-1h1v1h2v-1h2v1h1v-1h2v-1h1v1h1v-1h1v-1h1v2h4v-1h2v1h3v1h2v-1h1v1h4v-1h3v1h1v-1h1v1h3v-1h2v1h1v-1h3v1h1v-2h1v1h1v-1h1v1h2v-1h2v1h4v1h1v-2h1v2h1v-1h2v1h1v-1h2v1h4v-1h5v-2h1v2h1v-1h1v2h1v-6h1v6h1v-1h1v1h1v-2h1v2h1v-1h1v1h14v-1h1v1h3v-2h1v2h2v-1h1v-2h1v2h1v-1h1v1h2v-1h1v2h1v-1h1v1h1v-1h1v-1h1v1h3v-1h1v1h1v-2h1v2h1v1h2v-1h3v-1h1v1h1v1h2v-1h1v1h2v-1h2v1h1v-1h3v1h2v-1h1v1h4v-3h1v3h2v-1h1v1h3v-1h2v1h3v-5h1v5h4v-1h2v-1h1v2h1v-1h1v1h1v-1h1v1h2v-1h1v1h1v-1h1v1h4v-1h1v-1h1v1h1v1h3v-1h6v1h3v-1h1v1h1v-1h1v-6h1v6h2v1h1v-1h2v-1h1v1h1v1h3v-1h1v1h1v-1h1v1h2v-1h3v-1h1v2h1v-1h6v1h7v-1h1v1h1v-2h1v2h1v-1h1v1h4v-1h4v1h1v-1h1v1h7v-1h1v-1h1v2h1v-1h5v1h1v-1h1v1h2v-2h1v2h1v-3h1v2h1v1h2v-1h2v1h1v-1h1v1h1v-1h1v1h4v-1h1v1h5v-1h1v1h1v-1h1v-1h1v2h2v-1h1v1h1v-1h1v1h1v-2h1v1h2v-1h2v1h1v-1h1v1h2v1h1v-1h1v-2h1v2h1v1h2v-1h2v1h3v-1h1v-1h1v2h1v-1h1v1h4v-2h1v1h3v1h2v-1h1v-1h1v1h1v1h3v-1h6v1h1v-1h3v1h1v-1h2v1h3v-1h1v1h1v-1h1v1h3v-1h2v1h1v-2h1v2h2v-1h1v1h3v-1h1v-1h1v1h3v1h1v-2h1v2h2v-1h1v1h1v-1h1v1h1v-1h1v1h7v-1h3v-1h1v2h1v-1h2v1h4v-1h1v1h1v-1h1v1h3v-1h1v-1h1v2h4v-2h1v1h1v1h5v-2h1v1h1v-1h3v2h2v-1h2v1h1v-1h1v1h2v-1h1v-2h1v2h2v-6h1v6h2v1h8v-1h5v-1h1v1h3v-2h1v2h3v1h1v-2h1v2h3v-2h1v2h1v-1h1v1h2v-2h3v1h1v1h3v-1h1v1h2v-1h1v-1h3v1h1v1h1v-1h1v1h2v-1h1v1h4v-1h1v1h1v-1h1v-1h1v-1h1v-1h1v1h2v2h1v-3h1v3h2v-2h2v-1h1v1h1v2h1v-1h1v1h2v-2h1v2h3v1h2v-1h1v1h1v-1h1v1h2v-1h1v-1h1v-5h1v6h1v1h1v-1h2v1h6v-2h1v1h1v1h2v-1h4v1h1v-1h3v1h1v-1h2v1h1v-1h1v1h2v-1h1v1h3v-1h1v1h2v-3h1v3h1v-1h1v1h1v-1h1v1h2v-1h1v1h1v-1h1v1h3v-1h2v1h5v-1h3v-1h1v1h1v-1h1v1h4v1h1v-1h1v1h3v-1h3v1h8v-1h1v1h4v-1h3v1h1v-1h2v1h1v-1h2v1h2v-1h1v1h1v-2h1v1h1v-2h1v2h3v1h4v-1h1v1h1v-3h1v2h2v1h2v-3h1v3h3v-1h1v1h3v-1h4v1h1v-1h1v1h2v-1h1v1h3v-1h3v1h1v-2h1v1h2v-1h1v1h1v1h1v-1h1v1h1v-1h3v1h1v-1h1v-5h1v5h2v1h1v-1h1v1h3v-1h4v1h1v-1h2v1h1v-1h2v-1h1v1h2v-2h1v2h2v1h1v-1h2v1h1v-1h1v1h3v-1h2v-1h1v1h1v-1h1v2h2v-1h2v1h2v-1h1v-2h1v3h1v-1h1v1h14v-1h2v1h1v-1h1v1h2v-1h1v1h1v-5h1v4h2v1h4v-1h1v1h2v-1h1v1h1v-1h1v1h3v-1h1v1h2v-1h1v1h2v-1h1v1h2v-1h1v1h1v-1h3v1h4v-1h1v1h3v-1h3v-1h1v1h2v-2h1v2h3v-1h2v2h10v-1h1v1h2v-1h2v1h6v-1h1v1h3v-1h1v1h2v-1h3v1h2v-3h1v2h1v1h1v-2h1v1h2v-1h1v2h1v-2h2v1h1v-1h1v2h1v-1h1v-1h2v1h3v-5h1v5h2v1h1v-1h2v1h1v-1h1v1h1v-1h1v1h2v-1h1v1h2v-3h1v2h1v-1h1v2h1v-1h1v1h3v-1h1v1h4v-1h1v1h2v-1h1v1h2v-2h1v2h1v-1h1v1h1v-1h1v1h1v-2h1v1h1v1h1v-2h1v1h1v1h1v-1h1v1h10v-1h4v-1h1v2h2v-1h7v-5h1v5h1v-2h1v-6h1v8h1v-5h1v4h1v1h1v-7h1v6h1v1h1v1h1v-3h1v3h2v-1h2v1h8v-1h1v1h2v-1h1v1h5v-1h1v1h3v-1h1v-1h1v2h1v-1h1v1h1v-1h1v-6h1v6h1v1h1v-1h1v1h2v-1h1v-1h1v2h1v-1h1v1h1v-1h2v-4h1v5h1v-1h1v-1h1v1h1v-1h1v1h2v1h1v5h-1v-1h-2v3h-1v-3h-1v2h-2v-1h-1v6h-1v-6h-1v-1h-4v1h-2v-1h-1v1h-1v-1h-1v1h-1v1h-1v6h-1v-6h-1v-1h-2v-1h-1v1h-1v1h-1v-1h-1v-1h-2v1h-1v-1h-3v1h-1v1h-1v-2h-1v1h-1v1h-1v-1h-1v-1h-2v1h-2v-1h-1v1h-4v-1h-2v1h-2v-1h-1v2h-1v2h-1v4h-1v-4h-1v1h-1v-4h-1v1h-1v8h-1v-4h-1v-1h-1v1h-1v-2h-1v-4h-1v1h-3v-1h-3v1h-2v1h-1v-1h-1v-1h-5v1h-1v-1h-2v1h-2v-1h-1v2h-1v-1h-1v2h-1v-2h-3v-1h-4v1h-1v-1h-1v2h-1v-1h-1v1h-1v-2h-2v1h-2v-1h-3v1h-1v-1h-1v1h-1v-1h-1v1h-1v-1h-6v2h-1v-2h-5v1h-3v-1h-1v2h-1v-1h-1v1h-2v6h-1v-6h-1v-1h-1v-1h-2v1h-3v-1h-1v2h-1v-2h-2v1h-1v-1h-1v1h-1v1h-1v1h-1v-1h-2v1h-1v-1h-1v-2h-3v1h-3v-1h-2v1h-1v-1h-2v1h-1v-1h-9v1h-2v-1h-4v2h-1v-1h-2v-1h-1v1h-1v-1h-1v1h-2v1h-1v-2h-1v1h-1v2h-1v-3h-1v1h-1v-1h-2v1h-3v-1h-1v1h-1v-1h-1v1h-1v-1h-2v1h-1v6h-1v-6h-1v-1h-1v1h-4v-1h-1v1h-1v-1h-7v1h-1v-1h-4v1h-1v-1h-2v1h-1v-1h-2v1h-1v3h-1v-3h-1v-1h-1v1h-1v-1h-1v1h-3v-1h-1v1h-1v-1h-2v1h-4v-1h-1v1h-1v-1h-2v1h-1v-1h-3v1h-4v-1h-1v1h-3v-1h-1v2h-2v-2h-1v1h-1v-1h-3v1h-1v-1h-1v1h-3v-1h-2v1h-6v-1h-1v1h-1v-1h-3v1h-2v-1h-6v1h-1v1h-2v5h-1v-6h-1v-1h-1v1h-2v-1h-1v1h-5v1h-1v-2h-5v1h-1v-1h-2v1h-1v1h-2v-2h-1v2h-1v-2h-1v1h-2v1h-1v-2h-2v1h-1v-1h-2v1h-4v1h-1v-1h-2v-1h-1v1h-1v-1h-2v1h-1v-1h-3v1h-3v2h-1v-2h-2v-1h-3v1h-1v-1h-2v1h-3v-1h-1v1h-1v1h-1v-2h-1v1h-2v-1h-2v1h-1v-1h-6v1h-2v-1h-1v1h-1v-1h-1v1h-1v-1h-4v1h-2v-1h-1v1h-1v-1h-1v1h-3v-1h-2v1h-1v-1h-4v2h-1v-1h-2v-1h-3v1h-1v1h-1v-2h-1v1h-1v-1h-1v1h-1v-1h-3v1h-1v-1h-2v1h-2v1h-1v-1h-1v-1h-3v1h-2v-1h-2v1h-2v-1h-2v3h-2v-2h-4v-1h-2v1h-2v-1h-2v1h-2v-1h-2v1h-2v6h-1v-6h-1v1h-1v-1h-1v-1h-2v1h-3v-1h-2v1h-1v-1h-2v1h-1v-1h-1v1h-1v2h-2v-1h-1v1h-1v-1h-1v2h-2v-2h-1v2h-4v-2h-3v-1h-3v-1h-1v1h-4v-1h-4v2h-1v1h-1v-2h-1v-1h-2v1h-1v-1h-1v1h-1v-1h-1v1h-3v2h-1v-3h-1v1h-1v-1h-1v1h-2v2h-1v-2h-1v-1h-1v1h-1v2h-1v-3h-2v1h-4v2h-1v-1h-1v-2h-2v1h-2v-1h-2v1h-1v-1h-8v2h-1v6h-1v-6h-1v-1h-2v1h-1v-2h-4v1h-1v-1h-2v1h-1v-1h-1v1h-1v-1h-1v2h-1v-2h-1v1h-1v-1h-5v2h-1v-2h-3v1h-2v-1h-3v3h-1v-2h-2v-1h-1v1h-1v-1h-2v1h-1v-1h-1v1h-1v-1h-2v2h-1v-1h-1v-1h-3v1h-1v1h-1v-1h-1v1h-1v-1h-5v-1h-2v1h-1v-1h-1v1h-1v-1h-1v2h-2v-2h-1v1h-2v-1h-2v1h-1v-1h-1v1h-3v-1h-1v1h-2v-1h-2v1h-2v-1h-3v2h-1v-2h-1v2h-1v-2h-2v2h-1v-1h-2v-1h-1v1h-2v-1h-1v1h-1v1h-1v-2h-2v2h-1v-2h-1v2h-1v-1h-1v-1h-1v1h-5v-1h-2v1h-1v-1h-2v2h-1v-1h-1v-1h-4v1h-1v-1h-1v1h-4v-1h-1v1h-3v-1h-1v1h-1v1h-1v-2h-5v1h-1v-1h-3v2h-2v-1h-2v-1h-1v1h-1v-1h-1v1h-1v-1h-3v1h-2v-1h-1v1h-1v-1h-1v1h-2v-1h-2v2h-1v-2h-3v1h-1v-1h-1v2h-1v-1h-3v-1h-1v1h-3v-1h-2v1h-1v-1h-4v1h-1v-1h-2v1h-1v-1h-1v1h-1v-1h-1v1h-1v-1h-2v1h-2v-1h-3v1h-2v-1h-1v1h-3v-1h-5v1h-3v-1h-3v1h-1v-1h-1v2h-1v-1h-2v1h-1v-2h-1v1h-2v-1h-1v1h-1v-1h-3v1h-2v-1h-1v1h-1v1h-1v-2h-1v2h-1v6h-1v-6h-1v-2h-1v1h-2v1h-1v-2h-1v1h-1v1h-1v-1h-1v-1h-1v3h-1v-3h-4v2h-1v-1h-2v-1h-4v1h-1v-1h-2v1h-1v-1h-8v1h-2v-1h-1v2h-1v7h-1v-7h-1v-1h-5v-1h-1v1h-1v2h-1v-1h-1v-1h-1v-1h-1v1h-1v-1h-2v2h-1v-1h-1v-1h-3v2h-1v-1h-2v-1h-6v1h-1v-1h-1v2h-1v1h-1v-2h-1v-1h-2v1h-6v-1h-1v3h-1v-2h-1v-1h-5v1h-1v-1h-1v1h-3v-1h-2v1h-2v-1h-5v1h-2v-1h-1v1h-1v-1h-3v1h-1v-1h-4v2h-1v-2h-1v1h-1v-1h-3v2h-1v6h-1v-6h-1v-1h-1v2h-1v-1h-2v-1h-4v-1h-4v1h-2v-1h-1v2h-1v-2h-2v1h-1v2h-1v-2h-3v-1h-1v3h-1v-3h-1v1h-3v-1h-1v2h-1v-2h-5v1h-2v1h-1v-2h-2v2h-1v-2h-2v2h-1v-2h-2v1h-1v-1h-3v1h-1v-1h-1v1h-2v-1h-2v2h-1v-1h-2v2h-1v-2h-1v2h-2v-3h-1v1h-5v-1h-1v1h-1v-1h-3v1h-2v-1h-1v1h-1v-1h-2v1h-1v-1h-1v1h-1v-1h-1v1h-1v-1h-2v1h-1v-1h-3v1h-1v-1h-1v2h-1v-1h-2v1h-1v-2h-2v2h-1v-1h-1v-1h-1v3h-1v-2h-3v-1h-1v1h-1v-1h-5v2h-1v7h-1v-7h-1v-2h-3v1h-5v1h-1v-1h-2v-1h-2v1h-1v-1h-1v1h-1v-1h-1v3h-1v-2h-2v1h-1v7h-1v-7h-1v-2h-1v1h-1v1h-4v5h-1v-4h-1v-2h-1v-1h-1v1h-1v-1h-1v1h-2v1h-2v-1h-1v1h-1v-1h-2v-1h-1v1h-2v-1h-2v1h-2v-1h-3v1h-1v-1h-2v1h-1v-1h-1v1h-1v-1h-2v1h-1v-1h-1v1h-2v-1h-2v1h-1v-1h-2v1h-2v2h-1v-3h-1v1h-1v-1h-9v1h-1v-1h-1v1h-2z"/>
<path d="M278 304h1v-1h2v-8h1v8h1v1h1v-1h1v-1h2v1h3v1h2v-1h1v1h1v-3h1v2h2v1h2v-1h1v-1h1v1h1v1h1v-1h1v-1h1v2h1v-1h1v1h1v-1h1v1h1v-1h1v-1h1v-3h1v4h2v1h2v-3h1v1h1v1h2v1h1v-2h1v1h1v1h1v-1h1v1h1v-1h1v1h2v-1h2v1h1v-1h1v1h7v-1h1v1h1v-1h2v-1h1v2h1v-2h1v2h3v-2h1v1h1v1h1v-1h1v1h3v-1h1v-1h1v2h2v-1h1v1h2v-1h2v-1h1v2h2v-1h4v-8h1v7h1v1h1v-1h1v-1h1v-2h1v-1h1v1h1v2h1v2h2v-1h1v2h1v-1h1v-1h1v-6h1v6h1v2h4v-1h1v1h1v-1h2v-1h1v1h2v1h4v-1h1v1h3v-1h2v-2h1v2h2v1h1v-4h1v3h1v1h1v-1h1v1h8v-2h1v1h3v-1h1v1h5v1h3v-1h2v1h5v-1h2v1h1v-2h1v2h1v-2h1v2h1v-1h2v1h2v-2h1v1h2v-2h1v2h1v1h2v-1h2v1h5v-1h2v1h1v-1h1v1h1v-1h1v1h1v-1h1v1h1v-1h1v1h2v-1h1v1h1v-1h1v1h1v-3h1v2h1v1h2v-1h2v1h1v-1h1v-1h1v1h3v1h3v-1h2v-2h1v1h1v1h1v1h1v-1h1v1h1v-1h1v1h1v-1h1v1h3v-1h1v-1h1v1h1v1h1v-1h1v-1h1v1h2v-2h1v3h1v-2h1v1h3v1h2v-1h2v1h1v-1h1v1h1v-1h1v-1h2v1h1v1h1v-1h1v1h1v-1h1v1h3v-2h1v1h1v1h5v-1h3v1h1v-1h1v1h5v-1h1v1h1v-1h2v-6h1v6h1v1h1v-1h1v1h2v-1h5v1h5v-1h3v1h4v-1h1v1h1v-1h1v1h1v-1h1v-1h1v1h1v-1h1v2h2v-1h1v1h1v-4h1v4h1v-1h1v1h1v-1h1v1h1v-1h1v1h5v-1h1v1h1v-1h2v1h2v-1h3v1h3v-1h2v1h5v-1h3v1h4v-1h1v1h7v-1h3v1h2v-1h1v1h2v-3h1v2h2v1h2v-1h1v1h3v-1h1v1h1v-3h1v3h1v-2h1v2h2v-2h1v2h1v-2h1v2h2v-1h2v1h2v-1h2v1h1v-1h2v-4h1v4h1v-1h1v-8h1v8h2v1h1v-5h1v4h1v1h1v1h1v-1h2v-1h2v-1h1v3h2v-1h4v1h1v-2h1v2h1v-1h2v1h1v-1h1v-1h1v1h1v-1h2v1h2v1h2v-4h1v4h1v-1h2v1h3v-1h5v1h2v-1h1v-1h1v1h2v1h4v-1h1v1h1v-1h1v1h4v-1h1v1h1v-1h1v1h1v-1h2v1h1v-1h1v-2h1v1h1v1h1v1h4v-1h1v1h1v-1h1v-1h1v1h2v1h3v-1h1v1h1v-1h1v1h1v-1h1v1h1v-1h2v1h1v-1h1v1h5v-3h1v3h1v-1h2v1h1v-1h1v1h3v-4h1v4h3v-1h1v1h1v-1h1v1h3v-1h1v1h3v-1h1v-1h1v1h1v-1h1v1h1v1h1v-3h1v2h3v-1h1v1h2v1h3v-1h1v1h1v-1h2v-2h2v2h3v-6h1v6h2v1h1v-1h1v1h2v-1h1v1h5v-1h2v1h4v-1h1v-1h1v1h2v1h2v-2h1v2h1v-1h2v1h5v-1h1v1h2v-1h1v1h3v-1h1v1h3v-1h2v-1h1v-8h1v8h1v2h1v-2h1v1h3v-1h1v1h2v1h3v-2h1v1h1v1h1v-1h1v-2h1v3h1v-1h2v1h4v-1h2v1h1v-4h1v4h1v-2h1v-9h1v8h1v-2h2v4h1v-3h1v4h1v-2h2v-3h3v5h3v-1h1v1h1v-1h2v1h1v-1h2v1h1v-1h1v1h1v-1h1v1h3v-1h2v1h1v-1h1v1h1v-1h6v-1h2v1h2v1h1v-1h1v-4h1v4h1v-1h1v1h1v1h2v-1h2v1h4v-1h1v1h2v-1h2v1h1v-1h1v1h1v-3h2v1h1v1h1v-1h1v-1h1v1h1v1h1v1h1v-1h2v1h1v-1h1v1h2v-1h1v1h3v-1h1v1h1v-1h3v1h1v-1h2v1h1v-1h1v1h5v-1h3v1h1v-1h1v-7h1v7h4v1h1v-1h1v1h2v-1h2v1h4v-1h8v1h1v-2h2v2h1v-1h2v1h1v-1h1v1h2v-1h1v1h1v-1h1v1h1v-1h2v1h1v-1h2v1h3v-1h1v1h5v-1h2v-7h1v7h1v1h1v-1h1v1h1v-2h1v2h2v-1h2v1h1v-1h2v-1h1v2h1v-1h1v1h3v-1h4v-1h1v1h1v1h1v-1h1v1h1v-1h1v-1h1v-1h1v2h2v1h2v-2h1v1h2v1h1v-1h1v1h3v-1h1v1h1v-1h1v1h1v-4h1v4h2v-1h1v1h3v-1h5v1h5v-1h1v1h2v-1h2v-1h1v2h1v-1h1v-1h1v1h5v1h1v-1h2v1h2v-1h1v1h5v-1h3v-1h1v-1h1v1h1v1h1v1h1v-2h1v2h2v-3h1v-3h1v-2h1v-2h1v-1h1v-2h1v6h1v-3h1v-2h1v-2h1v1h1v-13h1v20h1v-4h1v3h1v2h1v-4h1v6h1v1h1v1h1v-1h1v1h2v-1h1v1h1v-1h1v1h1v1h1v-1h4v1h2v-1h2v1h1v-1h1v1h1v-2h1v1h1v1h1v-1h1v-2h1v2h1v1h1v-1h1v1h2v-1h5v1h7v-1h6v-1h1v2h2v-1h1v1h1v-1h1v1h4v-1h1v1h1v-1h1v1h1v-2h1v1h1v-1h1v2h3v-1h1v1h8v-1h1v1h2v-1h1v1h6v-1h2v1h1v-1h1v1h3v-1h1v-2h1v1h1v2h1v-2h2v1h2v1h1v-1h1v-2h1v1h1v1h5v1h1v-5h1v4h1v1h1v-1h4v1h2v-2h1v2h1v-2h1v2h4v-1h1v-1h1v2h2v-1h1v1h3v-1h3v-1h1v1h4v-1h1v2h1v-1h1v1h2v-1h1v-1h1v2h3v-1h2v1h1v-1h2v1h1v-2h1v1h1v-4h1v4h1v1h2v-2h1v2h1v-1h1v1h7v-1h1v1h3v-1h1v-1h1v1h1v1h3v-1h2v1h1v-1h1v1h2v-1h5v-1h1v1h4v6h-1v-1h-2v3h-1v-2h-4v-1h-3v1h-3v-1h-1v1h-1v1h-1v-2h-2v1h-1v-1h-4v1h-1v-1h-1v1h-1v1h-1v-2h-3v1h-1v-1h-1v2h-1v-2h-1v1h-1v-1h-1v1h-2v6h-1v-6h-1v-1h-4v1h-1v-1h-1v1h-2v-1h-6v1h-2v-1h-1v1h-1v-1h-1v1h-1v2h-1v-1h-2v1h-1v-2h-1v-1h-1v2h-1v-2h-1v2h-1v-1h-1v-1h-1v1h-1v-1h-1v1h-2v-1h-4v2h-1v-2h-1v1h-2v-1h-1v1h-1v-1h-1v2h-1v-1h-1v4h-1v-4h-1v-1h-1v1h-2v-1h-2v1h-2v1h-1v-1h-1v1h-1v-1h-1v-1h-1v1h-1v-1h-1v3h-2v-2h-11v-1h-10v1h-2v-1h-2v1h-1v-1h-2v2h-1v-2h-1v2h-1v-2h-1v1h-2v-1h-1v1h-1v-1h-2v1h-1v-1h-4v1h-2v-1h-3v1h-5v-1h-1v1h-1v-1h-2v1h-1v-1h-1v1h-1v2h-1v-2h-5v-1h-1v1h-5v-1h-1v1h-2v-1h-1v1h-1v-1h-2v2h-1v-2h-3v2h-1v-2h-6v1h-3v1h-1v1h-1v2h-1v2h-1v2h-1v-4h-1v4h-1v3h-1v4h-1v11h-1v-4h-1v-2h-1v-7h-1v-1h-1v-2h-1v3h-1v5h-1v-4h-1v-5h-1v-3h-1v-3h-1v-4h-3v1h-1v-1h-1v3h-1v-2h-2v-1h-1v3h-1v-2h-1v-1h-2v1h-2v-1h-1v1h-1v-1h-4v1h-1v-1h-2v3h-1v-1h-1v1h-1v-2h-2v-1h-2v1h-1v-1h-1v1h-4v-1h-7v1h-1v-1h-1v1h-1v-1h-1v1h-2v-1h-1v2h-1v7h-1v-7h-1v-1h-1v-1h-8v1h-1v1h-1v-2h-1v1h-1v-1h-1v1h-4v-1h-1v1h-1v-1h-2v3h-1v-2h-1v-1h-1v1h-1v-1h-1v1h-1v-1h-3v1h-1v-1h-1v1h-1v-1h-2v1h-1v-1h-2v1h-2v-1h-1v1h-1v-1h-1v2h-1v6h-1v-6h-1v-2h-3v2h-1v-2h-1v1h-3v-1h-5v1h-1v1h-1v-2h-3v1h-1v-1h-2v1h-1v-1h-2v1h-1v-1h-1v3h-1v-2h-1v1h-1v-1h-1v-1h-1v1h-1v-1h-1v2h-1v-1h-2v-1h-4v1h-2v-1h-4v1h-1v-1h-1v1h-1v-1h-1v1h-1v6h-1v-5h-1v-1h-1v-1h-2v1h-2v-1h-3v1h-2v-1h-3v1h-2v-1h-5v1h-1v-1h-4v1h-1v1h-1v-1h-1v1h-1v-2h-2v1h-2v2h-1v-2h-2v1h-1v-2h-2v3h-1v-2h-3v-1h-6v1h-5v-1h-2v1h-1v6h-1v-6h-1v2h-1v-2h-3v1h-1v-1h-1v2h-1v-2h-1v-1h-2v1h-1v-1h-1v1h-1v-1h-3v2h-1v-2h-8v1h-1v-1h-4v1h-1v-1h-2v3h-1v-1h-2v1h-1v-2h-3v-1h-1v5h-1v-1h-2v5h-1v-4h-1v-4h-1v-1h-1v3h-1v-1h-1v-2h-2v1h-1v-1h-2v2h-1v-1h-6v-1h-1v1h-2v-1h-1v1h-7v-1h-1v2h-1v8h-1v-8h-2v-1h-1v-1h-1v1h-2v-1h-5v1h-1v-1h-2v1h-2v-1h-3v2h-2v-1h-1v2h-1v-1h-1v-2h-1v1h-2v2h-1v-3h-7v1h-1v-1h-2v1h-2v-1h-1v1h-1v-1h-1v1h-1v-1h-2v1h-1v4h-1v-4h-2v-1h-1v2h-1v1h-1v-1h-1v-1h-1v-1h-6v1h-1v1h-1v1h-1v-2h-2v5h-1v-5h-1v1h-1v-1h-3v-1h-5v1h-1v-1h-3v1h-2v-1h-3v2h-2v-1h-1v-1h-2v3h-1v-1h-1v-1h-3v-1h-2v1h-1v-1h-2v1h-2v2h-1v-2h-3v-1h-1v1h-1v-1h-1v1h-3v-1h-1v1h-3v-1h-1v1h-2v-1h-3v1h-1v-1h-1v2h-1v-1h-3v-1h-2v1h-2v-1h-2v1h-2v-1h-2v2h-1v-1h-2v-1h-2v1h-1v-1h-1v2h-1v-2h-1v1h-2v-1h-1v1h-2v-1h-3v1h-2v-1h-2v1h-1v-1h-1v1h-1v4h-1v-4h-3v-1h-4v2h-1v-2h-2v1h-4v-1h-1v1h-1v-1h-2v1h-1v-1h-2v3h-1v-1h-1v-1h-1v-1h-1v2h-1v-1h-1v-1h-2v3h-1v2h-1v-3h-1v2h-1v5h-1v-6h-1v-2h-2v1h-1v-2h-7v1h-3v-1h-2v1h-1v1h-1v-2h-3v2h-1v-1h-3v-1h-2v2h-1v-2h-1v1h-2v-1h-1v1h-2v-1h-9v1h-1v-1h-1v1h-1v-1h-3v1h-1v-1h-1v1h-1v1h-1v-1h-1v1h-1v-2h-5v1h-1v-1h-1v1h-2v-1h-8v1h-1v-1h-7v1h-2v-1h-3v2h-1v6h-1v-6h-2v-2h-2v2h-2v-2h-3v1h-1v-1h-2v1h-5v-1h-4v1h-2v-1h-1v1h-2v-1h-2v1h-2v-1h-2v1h-2v6h-1v-6h-1v-1h-1v1h-1v-1h-5v1h-1v1h-1v-2h-2v1h-4v-1h-5v1h-1v-1h-1v1h-1v-1h-5v1h-1v2h-1v-2h-3v-1h-1v1h-1v1h-1v-2h-2v1h-3v1h-1v-1h-6v-1h-2v3h-1v-2h-4v-1h-5v1h-2v1h-1v-2h-1v1h-1v-1h-6v1h-2v-1h-2v1h-1v-1h-2v1h-1v-1h-1v1h-1v-1h-3v1h-1v-1h-2v1h-2v-1h-1v1h-2v-1h-1v1h-2v-1h-1v1h-2v-1h-4v1h-1v-1h-1v1h-2v2h-3v-2h-3v-1h-1v1h-1v1h-1v-2h-1v3h-1v-3h-2v1h-1v-1h-2v1h-1v1h-1v-1h-4v-1h-3v1h-2v2h-1v-2h-1v1h-1v1h-1v-3h-1v2h-2v-1h-1v-1h-5v2h-1v-2h-5v1h-1v5h-1v-5h-1v-1h-2v1h-1v-1h-2v1h-1v-1h-6v1h-3v1h-2v-1h-1v-1h-1v1h-1v-1h-4v1h-1v3h-1v2h-1v-1h-1v-5h-2v3h-1v2h-1v-5h-1v7h-1v-6h-1v1h-1v2h-1v-2h-2v1h-1v5h-1v-6h-1v-2h-1v1h-1v1h-1v-2h-2v2h-1v-2h-1v1h-1v-1h-1v1h-3v-1h-2v1h-1v-1h-1v1h-1v2h-1v-3h-2v1h-2v-1h-1v1h-5v-1h-2v1h-1v-1h-2v1h-1v-1h-2v1h-1v-1h-7v1h-1v-1h-1v1h-2v-1h-1v1h-2v-1h-1v1h-3v-1h-1v1h-3v2h-1v4h-1v-6h-1v1h-1v-1h-3v-1h-1v1h-1v-1h-1v1h-1v1h-1v-2h-1v2h-1v-1h-4v1h-1v-1h-2v-1h-2v2h-1v-2h-1v1h-1v-1h-2v1h-1v1h-1v-1h-1v1h-1v6h-1v-6h-1v-2h-2z"/>
<path d="M278 334h1v1h3v-1h1v1h1v-1h1v1h1v-1h1v1h7v-1h1v1h1v-3h1v-3h1v4h1v-4h1v5h1v-2h2v-3h1v1h3v3h1v-1h1v-2h1v4h1v1h6v-1h2v-1h1v-2h2v1h1v2h1v-3h1v4h1v-2h1v1h1v-1h1v1h2v-2h1v-1h1v4h2v-1h1v1h1v-3h1v2h1v-4h1v-2h1v4h1v-1h1v1h1v2h2v-6h1v2h1v3h2v-1h1v2h2v1h1v-1h2v1h1v-2h1v1h1v-2h1v2h1v1h1v-1h3v-1h1v1h4v-2h1v3h5v-1h1v1h5v-1h1v1h3v-1h2v1h2v-1h3v-4h1v5h1v-2h1v2h3v-1h1v-2h1v3h2v-1h1v1h2v-1h1v1h2v-1h1v1h5v-1h1v1h1v-1h1v1h1v-1h6v-1h1v2h2v-1h1v1h1v-2h1v2h2v-1h1v-2h1v3h1v-1h1v1h1v-2h1v1h6v1h2v-1h2v-1h2v2h4v-1h1v1h1v-2h1v2h3v-1h1v-1h1v2h1v-1h3v1h5v-3h1v2h1v1h1v-1h3v1h1v-2h1v1h1v-1h1v1h2v-1h1v1h2v1h1v-1h1v1h2v-1h1v-1h2v2h1v-1h1v1h2v-1h2v1h4v-1h1v1h2v-1h1v1h1v-1h2v1h1v-1h1v1h1v-1h1v1h1v-1h1v1h4v-1h2v-1h1v1h2v1h2v-1h1v1h1v-2h2v2h1v-2h4v1h2v1h2v-1h3v1h4v-1h1v-1h1v1h1v-2h1v1h1v1h1v1h1v-3h2v3h3v-1h1v1h2v-2h1v1h1v1h1v-1h1v1h2v-1h1v1h1v-5h1v5h1v-1h1v1h1v-1h1v1h2v-1h1v1h2v-2h1v1h1v1h1v-1h1v1h6v-2h2v1h5v-1h1v2h1v-1h1v1h4v-1h1v1h2v-1h1v-2h1v3h1v-4h1v3h2v1h1v-1h1v-2h1v2h1v1h2v-1h3v-1h1v1h2v-2h1v3h1v-1h1v-2h1v2h1v-1h1v1h3v1h1v-1h1v1h2v-2h2v1h1v-1h1v2h8v-1h2v1h4v-1h4v1h1v-2h1v1h2v1h1v-1h1v1h5v-1h1v1h7v-1h1v1h1v-1h3v1h1v-1h2v1h1v-1h1v-1h1v1h4v1h9v-2h1v2h3v-1h1v1h1v-1h1v-7h1v6h1v1h2v1h3v-1h1v1h1v-1h1v1h5v-1h4v1h1v-2h1v1h2v1h1v-1h3v1h1v-1h1v1h1v-1h1v1h1v-2h1v2h1v-1h1v1h4v-1h1v1h1v-1h1v1h1v-1h1v1h3v-1h8v1h1v-1h3v1h1v-1h1v-2h1v2h2v1h1v-1h1v1h1v-1h2v1h1v-1h1v1h1v-1h2v1h2v-1h2v1h2v-1h2v1h1v-1h1v1h10v-1h2v1h2v-4h1v4h1v-1h1v1h3v-1h1v1h8v-1h2v1h5v-1h2v1h8v-1h1v1h2v-1h3v1h2v-2h1v1h1v1h4v-1h1v1h1v-1h1v1h1v-1h1v-6h1v6h1v1h4v-1h1v-1h1v2h3v-1h2v1h2v-1h3v1h2v-3h1v2h2v1h1v-1h1v1h2v-1h1v1h2v-1h1v1h3v-1h1v1h2v-1h2v-4h1v4h3v-1h1v1h3v-2h1v2h2v1h6v-1h1v1h3v-1h1v1h2v-1h1v1h7v-2h1v1h2v1h1v-2h1v2h1v-1h4v1h4v-1h3v1h6v-1h1v-2h1v-1h1v4h1v-6h1v3h1v2h1v-1h1v1h1v-1h1v2h1v-1h1v1h3v-4h1v3h1v1h1v-1h1v1h1v-1h1v-1h1v1h1v-2h1v2h1v1h6v-2h2v1h1v1h2v-1h1v1h1v-1h1v1h1v-1h1v1h1v-3h1v1h1v2h2v-1h1v1h3v-1h7v-1h1v1h3v1h1v-1h3v1h3v-1h2v1h2v-1h4v-1h1v1h1v-1h1v2h1v-3h1v-1h1v3h2v-3h1v4h1v-1h1v-2h1v1h1v-2h1v1h2v3h1v-2h1v1h1v-1h3v-1h1v3h1v-2h1v1h1v-5h1v6h9v-2h1v1h1v1h1v-1h1v1h5v-1h1v1h6v-1h1v-2h1v2h5v1h1v-1h1v1h2v-1h1v-1h1v2h2v-1h1v-1h1v1h1v1h1v-1h2v-1h1v1h1v1h1v-1h1v1h1v-1h1v1h4v-1h1v1h6v-1h2v1h1v-1h1v1h1v-1h6v1h1v-1h2v1h3v-1h1v1h2v-1h2v1h1v-1h1v1h3v-1h2v1h1v-1h2v-1h1v2h2v-2h1v1h3v1h3v-1h2v1h2v-1h1v-1h1v1h2v1h1v-2h1v2h3v-1h2v1h3v-1h3v1h1v-1h1v1h2v-1h1v1h3v-2h1v2h5v-1h2v1h1v-1h3v1h1v-3h1v2h1v1h6v-2h1v1h2v1h3v-1h1v1h1v-3h1v3h1v-1h4v-2h1v2h1v1h1v-1h1v1h7v-1h1v1h1v-3h1v3h1v-1h1v1h1v-1h1v1h1v-1h1v1h4v-1h3v-2h1v3h1v-1h1v1h1v-1h1v1h1v-2h1v1h1v1h1v-1h2v-4h1v4h1v1h1v-3h2v2h1v1h1v-3h2v3h1v-2h2v-1h1v2h1v-2h1v3h3v-2h1v1h1v-1h1v2h4v-1h1v-1h1v1h1v1h2v-1h1v1h1v-1h1v1h2v-1h5v1h1v-2h1v-1h1v2h1v-1h1v1h2v-6h1v6h1v1h3v-1h1v-1h1v1h1v1h4v-1h1v1h1v-1h2v1h2v-1h1v1h1v-3h2v1h1v1h4v1h3v-1h1v1h1v-1h1v-1h1v1h2v1h1v-1h1v-2h1v2h2v1h1v-1h4v1h2v-1h1v1h1v-1h3v1h3v-5h1v4h1v1h1v-1h1v-1h1v1h2v1h4v-1h1v1h1v-1h2v-1h2v1h2v-1h2v1h2v-2h1v3h1v-1h1v1h2v-2h1v1h1v1h1v-2h1v2h2v5h-1v-1h-1v1h-2v2h-1v-3h-1v1h-3v-1h-2v1h-1v-1h-3v2h-1v-1h-4v-1h-1v2h-1v-2h-1v1h-1v-1h-4v1h-1v-1h-1v1h-3v5h-1v-5h-2v-1h-1v1h-2v-1h-3v1h-2v-1h-1v1h-1v-1h-1v1h-2v-1h-2v2h-1v-1h-1v-1h-2v2h-1v-2h-1v1h-2v-1h-1v1h-1v1h-1v-1h-1v2h-1v-1h-1v-1h-1v-1h-1v1h-5v-1h-2v1h-2v-1h-1v1h-1v-1h-1v1h-1v-1h-3v1h-1v-1h-1v1h-1v-1h-1v1h-2v5h-1v-5h-1v-1h-1v1h-1v-1h-2v2h-1v-2h-3v1h-1v1h-1v-2h-2v1h-1v-1h-2v1h-1v-1h-5v1h-4v-1h-1v1h-1v-1h-2v1h-3v1h-1v-1h-1v2h-1v-1h-1v-1h-1v2h-2v-1h-1v-2h-1v2h-2v1h-1v-2h-1v3h-1v-3h-1v-1h-4v2h-1v-1h-1v-1h-4v2h-1v-1h-3v-1h-4v1h-1v-1h-1v1h-3v-1h-2v1h-1v-1h-4v1h-3v2h-2v-2h-1v1h-1v-1h-4v-1h-1v1h-1v-1h-1v1h-1v-1h-3v1h-2v1h-1v-2h-1v1h-1v-1h-2v1h-1v-1h-1v2h-1v-1h-2v1h-1v-1h-1v1h-1v-1h-3v-1h-1v1h-2v-1h-2v1h-2v-1h-1v1h-1v-1h-3v1h-1v-1h-2v2h-1v-1h-1v-1h-1v1h-1v-1h-1v1h-2v-1h-2v1h-2v-1h-1v2h-1v-2h-5v1h-1v-1h-1v1h-2v-1h-1v1h-1v1h-1v1h-1v-2h-1v-1h-1v1h-1v-1h-1v1h-1v-1h-1v1h-4v-1h-1v1h-2v-1h-3v2h-1v-2h-1v1h-1v-1h-6v2h-2v-1h-3v-1h-2v1h-1v-1h-1v1h-3v-1h-5v1h-2v-1h-1v1h-1v-1h-2v1h-3v1h-1v-2h-2v1h-1v-1h-1v1h-2v1h-1v-2h-1v1h-1v1h-1v-1h-1v1h-1v-1h-1v1h-1v-1h-3v-1h-1v1h-2v-1h-1v1h-1v-1h-3v1h-1v-1h-1v1h-1v-1h-2v1h-1v-1h-6v1h-1v-1h-1v1h-2v-1h-1v1h-1v-1h-2v1h-2v3h-1v-2h-1v-2h-4v3h-1v-2h-1v1h-1v1h-1v-1h-1v2h-1v-2h-1v1h-1v-3h-1v1h-1v1h-3v-1h-1v1h-1v1h-1v-2h-1v1h-1v-2h-1v2h-2v-1h-3v-1h-3v1h-2v-1h-1v1h-1v-1h-1v1h-3v1h-2v-2h-2v1h-1v-1h-3v1h-1v-1h-1v1h-2v-1h-1v1h-3v-1h-1v1h-1v-1h-2v1h-1v-1h-6v1h-1v-1h-1v2h-1v-1h-1v-1h-4v1h-2v-1h-1v1h-4v-1h-2v2h-1v-1h-1v4h-1v-4h-1v-1h-2v1h-4v3h-1v1h-1v-4h-1v5h-1v-4h-3v-1h-1v-1h-2v1h-1v-1h-2v1h-1v-1h-2v1h-2v-1h-3v2h-1v-2h-2v1h-1v-1h-1v2h-1v-1h-2v1h-1v-1h-1v-1h-2v1h-1v-1h-3v1h-2v1h-1v-2h-1v1h-1v1h-1v-2h-1v1h-1v-1h-2v1h-1v-1h-7v3h-1v-2h-1v2h-1v-1h-1v-1h-3v3h-1v-3h-2v-1h-4v2h-1v-2h-6v1h-3v-1h-1v1h-1v1h-1v-2h-1v1h-2v2h-1v-2h-1v-1h-1v1h-1v1h-1v-2h-1v1h-1v-1h-2v1h-2v-1h-4v1h-1v4h-1v-4h-4v-1h-5v1h-3v-1h-5v1h-1v-1h-8v1h-1v-1h-5v1h-1v-1h-1v3h-1v-2h-4v-1h-3v1h-3v-1h-1v1h-1v1h-1v-1h-2v4h-1v-4h-1v-1h-1v1h-1v-1h-4v1h-1v-1h-1v1h-1v-1h-2v1h-2v-1h-2v1h-1v-1h-3v3h-1v-2h-1v-1h-1v1h-2v-1h-4v1h-2v-1h-1v1h-1v-1h-2v1h-3v-1h-1v2h-1v1h-1v-2h-1v-1h-3v1h-1v-1h-2v1h-3v-1h-6v1h-1v-1h-4v1h-3v-1h-1v1h-3v-1h-2v1h-3v-1h-1v1h-1v-1h-1v3h-1v-3h-1v1h-3v1h-2v-1h-1v-1h-1v1h-1v-1h-1v1h-1v1h-1v-1h-1v-1h-5v1h-1v3h-1v-3h-1v-1h-4v1h-1v1h-1v-2h-2v1h-1v-1h-3v1h-1v-1h-3v1h-3v2h-1v-2h-1v2h-1v-1h-2v-1h-1v-1h-3v1h-4v-1h-1v1h-3v-1h-1v1h-2v-1h-2v1h-1v-1h-1v1h-3v-1h-2v1h-1v1h-1v-1h-1v1h-1v-1h-1v1h-1v-1h-1v-1h-1v1h-1v-1h-1v1h-2v-1h-1v1h-1v-1h-8v1h-5v-1h-1v1h-1v1h-2v-2h-2v2h-1v-1h-3v-1h-3v1h-2v-1h-1v1h-2v2h-1v-1h-1v-1h-2v-1h-1v2h-1v-2h-1v1h-1v1h-1v-2h-1v2h-1v-1h-1v-1h-1v1h-2v-1h-1v1h-2v-1h-5v3h-1v-2h-1v3h-1v-3h-1v-1h-7v1h-1v-1h-2v1h-2v2h-1v-3h-4v2h-1v7h-1v-7h-2v-2h-4v1h-1v-1h-2v1h-2v-1h-3v2h-1v-1h-1v1h-1v-1h-2v-1h-1v1h-1v-1h-3v1h-1v-1h-1v1h-8v2h-1v-1h-1v-1h-4v2h-1v-3h-1v1h-1v-1h-2v1h-3v-1h-1v1h-1v-1h-1v1h-2v-1h-2v1h-1v-1h-1v2h-1v-1h-1v-1h-1v2h-1v1h-1v-3h-1v1h-1v-1h-1v1h-2v-1h-1v1h-4v-1h-3v3h-1v-2h-1v2h-1v-2h-1v-1h-1v1h-1v-1h-2v1h-2v1h-1v-2h-1v2h-1v1h-1v-2h-4v1h-1v-1h-2v-1h-1v1h-2v-1h-1v1h-1v-1h-1v1h-2v-1h-1v1h-1v1h-1v-1h-3v-1h-2v1h-1v-1h-2v1h-1v-1h-5v2h-1v-1h-2v-1h-1v1h-1v-1h-2v1h-1v-1h-2v1h-2v-1h-2v1h-2v-1h-3v1h-1v-1h-2v1h-1v-1h-2v1h-1v-1h-2v1h-3v-1h-5v1h-1v-1h-1v1h-3v-1h-1v1h-1v-1h-2v1h-2v-1h-2v2h-1v-2h-4v2h-1v-2h-1v2h-2v-1h-2v-1h-5v1h-3v-1h-1v2h-1v-1h-2v-1h-3v1h-1v-1h-3v2h-1v-2h-1v1h-6v-1h-1v1h-3v-1h-2v2h-1v-1h-2v-1h-2v1h-1v-1h-2v1h-2v3h-1v-3h-3v2h-1v-1h-1v2h-1v-2h-2v-1h-1v-1h-1v1h-1v-1h-2v2h-1v-1h-1v3h-1v-2h-1v2h-1v-1h-1v-1h-1v-2h-1v4h-1v-4h-1v4h-1v-1h-3v-3h-1v1h-1v-1h-2v1h-2v-1h-2v1h-1v3h-1v-1h-1v2h-1v3h-1v-4h-2v2h-1v-1h-2v-1h-1v-4h-1v1h-1v5h-1v-3h-1v1h-1v-4h-2v1h-1v-1h-4v2h-1v-1h-1v-1h-5v1h-1v-1h-2z"/>
<path d="M278 364h1v1h1v-1h1v-1h1v1h3v-1h1v2h1v-1h1v1h3v-5h1v5h2v-2h1v1h2v1h4v-1h3v1h1v-1h2v1h2v-2h1v1h3v1h2v-1h1v1h1v-1h1v1h2v-1h1v1h5v-1h1v1h1v-1h2v1h1v-1h2v1h3v-1h1v1h1v-1h1v1h4v-1h1v1h3v-2h1v1h1v-1h3v1h2v-1h1v2h3v-1h2v-6h1v6h2v1h3v-1h1v-1h1v1h1v1h3v-1h1v1h1v-1h3v1h2v-1h2v1h1v-1h1v1h2v-1h1v1h1v-1h1v1h1v-1h1v-1h1v2h4v-1h1v1h2v-1h1v1h1v-2h1v2h1v-1h2v1h1v-1h2v1h2v-1h1v-1h2v2h1v-1h1v1h1v-1h2v1h2v-1h1v-3h1v4h7v-1h1v1h4v-1h4v1h12v-1h1v1h2v-1h2v1h4v-1h1v-1h1v2h1v-1h2v1h3v-1h1v1h8v-1h1v1h3v-1h1v1h1v-1h1v1h1v-1h6v1h3v-1h1v1h1v-1h1v1h1v-1h1v1h4v-2h1v1h1v1h1v-1h3v1h4v-1h1v1h1v-1h2v1h1v-1h1v1h2v-1h3v1h8v-1h2v1h1v-1h1v1h2v-1h3v1h1v-1h1v1h3v-1h2v1h1v-1h2v1h1v-1h1v1h2v-1h1v-6h1v5h1v1h1v1h1v-1h1v1h6v-1h3v1h7v-1h1v-3h1v3h2v1h2v-1h1v1h1v-1h1v1h7v-1h1v1h1v-1h3v-1h1v1h1v-4h1v4h1v1h2v-1h1v1h3v-1h3v1h1v-2h1v2h2v-2h1v1h1v1h1v-1h2v1h12v-1h1v1h1v-1h3v-1h1v1h3v1h1v-2h1v1h1v1h2v-1h2v1h1v-1h2v1h2v-1h2v-1h1v2h1v-2h2v1h2v1h3v-1h1v1h5v-1h1v1h5v-1h1v1h1v-1h1v1h1v-1h1v1h2v-1h1v1h2v-2h1v2h1v-1h1v-1h1v1h3v-2h1v2h2v1h1v-1h1v1h2v-1h1v1h3v-1h1v-1h1v1h2v1h1v-1h2v1h4v-1h1v1h3v-1h4v1h3v-2h4v2h2v-2h3v1h1v1h1v-1h2v1h1v-1h1v1h5v-1h1v1h6v-1h1v1h6v-1h1v-1h1v1h1v-2h1v1h1v-1h1v-2h1v1h1v2h2v1h1v1h1v-1h1v1h5v-1h1v1h4v-1h1v-1h1v1h1v-1h2v2h1v-1h3v1h1v-1h1v1h1v-1h1v1h1v-2h2v1h1v1h1v-1h1v1h3v-1h1v1h1v-1h2v1h2v-1h1v1h1v-1h1v1h1v-1h1v-1h1v2h2v-1h2v-1h1v1h1v1h2v-1h1v1h1v-1h1v-1h3v1h4v1h1v-2h1v2h2v-1h1v1h6v-1h1v1h3v-1h4v1h1v-2h1v1h1v1h5v-1h1v1h9v-1h2v-1h2v-3h1v5h4v-2h1v1h1v1h1v-1h1v1h1v-2h1v1h1v1h1v-1h1v1h1v-1h1v1h5v-2h1v1h1v1h5v-1h3v-1h1v1h3v1h4v-1h1v1h5v-1h1v1h1v-1h1v1h1v-1h1v1h1v-1h3v1h1v-1h1v1h1v-2h1v2h3v-1h2v1h2v-2h1v2h1v-1h2v-1h1v2h5v-1h1v1h1v-2h1v1h1v1h1v-1h6v-1h2v2h3v-1h1v1h2v-1h1v1h1v-1h3v1h3v-1h1v1h2v-1h1v1h1v-1h4v1h1v-1h1v1h1v-1h3v1h3v-5h1v5h2v-1h2v1h2v-1h2v1h1v-1h1v1h3v-2h1v1h4v-1h1v1h1v1h1v-1h1v1h1v-1h1v1h5v-1h2v-1h2v1h1v1h1v-1h2v1h2v-1h1v1h1v-1h2v1h2v-1h3v1h1v-2h1v2h1v-1h3v1h2v-1h2v1h1v-2h1v2h2v-1h2v1h3v-1h2v1h1v-2h1v1h1v1h2v-1h1v1h1v-1h7v1h1v-1h3v-1h1v2h1v-1h2v1h1v-1h1v-1h2v2h1v-1h3v-1h1v1h2v1h1v-1h2v1h1v-1h3v1h2v-1h2v1h5v-4h1v4h1v-1h1v1h2v-1h1v1h10v-1h2v1h3v-1h3v1h2v-1h1v1h3v-1h1v1h1v-1h3v1h1v-1h6v1h3v-1h4v1h2v-2h1v1h1v1h1v-1h2v1h1v-1h1v1h2v-1h2v1h3v-1h1v1h7v-1h1v1h4v-2h1v2h2v-1h1v-2h1v1h1v2h2v-2h1v-1h2v1h2v1h1v1h1v-2h1v1h2v1h6v-1h2v1h1v-1h1v1h1v-1h3v1h2v-1h1v1h2v-1h4v1h2v-1h1v-1h2v2h2v-4h1v2h1v-1h1v2h4v-2h1v1h3v-2h1v2h1v-1h1v3h1v-4h3v1h1v-1h1v1h1v1h1v-2h1v1h1v3h1v-1h2v-2h1v2h1v-1h1v-4h1v6h1v-1h2v1h2v-1h2v1h3v-1h2v-1h1v2h7v-2h1v1h7v1h1v-1h1v1h1v-2h1v2h2v-1h2v1h3v-1h2v1h1v-2h1v1h1v1h1v-1h2v-4h1v5h1v-1h1v1h4v-1h1v1h1v-1h1v-1h1v1h2v1h1v-1h3v1h2v-2h2v2h1v-1h1v1h1v-1h2v-2h2v2h1v-3h1v2h1v1h2v-5h1v2h1v-1h1v1h2v2h1v1h1v1h2v-2h1v1h1v1h1v-2h1v2h2v-1h1v1h6v-1h1v1h1v-1h1v1h1v-1h1v1h2v-1h2v1h5v-2h1v1h1v1h1v-1h2v-1h1v2h2v-1h3v1h1v-1h1v1h2v6h-1v-1h-2v-1h-1v1h-1v-1h-1v1h-1v-1h-3v1h-4v-1h-10v1h-1v-1h-1v1h-2v-1h-3v1h-1v-1h-1v1h-1v-1h-1v1h-1v-1h-2v1h-4v-1h-1v1h-2v1h-1v2h-1v-2h-2v2h-1v1h-1v-2h-1v-2h-1v1h-1v2h-1v-4h-1v2h-3v-2h-3v1h-1v1h-2v-1h-1v-1h-2v1h-2v1h-1v-1h-1v1h-1v-1h-3v-1h-5v1h-2v4h-1v-4h-2v-1h-2v1h-1v-1h-1v1h-1v1h-1v-2h-1v2h-1v-2h-1v1h-2v1h-1v-1h-1v-1h-2v1h-1v1h-1v-1h-2v1h-1v-2h-2v1h-2v1h-1v-2h-1v1h-3v-1h-3v1h-1v-1h-1v2h-2v-2h-1v1h-1v1h-1v-1h-6v5h-1v-5h-1v1h-1v1h-1v-1h-1v1h-1v-3h-1v1h-1v1h-1v-2h-1v4h-2v-3h-1v2h-1v-1h-1v-1h-1v2h-1v-1h-1v2h-2v-3h-1v2h-1v1h-1v-3h-1v-1h-1v1h-2v3h-1v-2h-1v-1h-1v3h-1v-1h-1v-1h-1v-1h-4v-1h-2v2h-1v-2h-4v1h-1v-1h-1v1h-3v-1h-1v1h-1v-1h-1v2h-2v-1h-2v-1h-2v1h-3v1h-1v-1h-1v-1h-2v1h-1v-1h-1v2h-1v1h-1v-3h-1v1h-1v1h-2v-1h-1v1h-1v-1h-1v-1h-2v1h-1v1h-1v-2h-3v2h-1v-2h-1v1h-4v-1h-2v1h-2v-1h-6v2h-2v-1h-2v-1h-1v2h-1v-2h-1v1h-2v-1h-1v1h-1v-1h-1v1h-1v-1h-1v1h-1v-1h-5v1h-2v-1h-2v1h-1v-1h-3v1h-1v-1h-1v1h-3v-1h-1v1h-1v-1h-1v1h-1v-1h-1v2h-2v-2h-1v1h-2v-1h-11v1h-3v3h-1v-3h-3v1h-1v-1h-2v-1h-1v1h-4v-1h-1v1h-1v-1h-1v1h-3v-1h-1v1h-3v1h-1v-1h-4v-1h-3v1h-2v1h-2v-1h-2v1h-1v-2h-1v1h-1v-1h-1v1h-1v-1h-2v1h-5v1h-1v-2h-1v2h-1v-1h-1v-1h-2v1h-5v-1h-4v1h-1v-1h-2v1h-1v1h-1v-1h-1v-1h-1v1h-1v-1h-3v1h-2v-1h-5v1h-3v-1h-2v1h-4v-1h-5v1h-1v-1h-1v1h-1v-1h-3v1h-1v-1h-1v2h-1v-1h-3v-1h-2v1h-1v-1h-4v1h-1v-1h-1v2h-1v-2h-1v1h-1v5h-1v-5h-2v-1h-2v1h-1v1h-1v-1h-3v1h-1v-1h-1v1h-1v-1h-2v-1h-3v1h-1v-1h-1v1h-1v-1h-2v1h-1v1h-1v-2h-2v1h-1v-1h-1v1h-1v-1h-1v1h-1v-1h-2v1h-5v1h-1v-1h-1v-1h-2v1h-2v-1h-1v1h-2v-1h-1v1h-1v-1h-2v1h-1v-1h-1v1h-1v-1h-1v1h-3v-1h-1v1h-1v-1h-3v1h-1v-1h-2v1h-1v-1h-3v1h-1v-1h-1v1h-2v-1h-2v1h-1v-1h-4v1h-1v-1h-3v2h-1v-2h-1v1h-2v-1h-1v1h-3v-1h-2v1h-2v-1h-2v1h-2v-1h-10v1h-3v-1h-3v1h-1v1h-1v3h-1v-4h-1v1h-2v-1h-1v-1h-2v1h-1v-1h-2v1h-1v-1h-3v1h-1v-1h-5v1h-1v-1h-1v1h-2v-1h-3v1h-2v1h-1v-1h-3v-1h-1v1h-1v-1h-2v1h-2v-1h-2v1h-1v1h-1v-2h-1v1h-1v-1h-1v1h-1v-1h-1v1h-1v-1h-1v1h-3v-1h-2v2h-1v-1h-1v-1h-1v1h-3v1h-1v-1h-1v-1h-1v1h-1v-1h-3v1h-2v-1h-1v1h-1v-1h-2v1h-4v-1h-1v1h-1v1h-1v-2h-1v1h-2v-1h-2v1h-2v1h-1v-1h-1v-1h-1v1h-1v1h-1v-1h-1v-1h-3v1h-1v-1h-1v1h-1v-1h-1v1h-2v-1h-1v1h-1v-1h-2v1h-3v5h-1v-2h-1v-1h-2v1h-1v-4h-2v1h-1v-1h-5v1h-2v-1h-11v1h-1v1h-1v-1h-1v-1h-1v2h-1v-1h-3v1h-1v-2h-1v1h-3v1h-1v-1h-1v-1h-4v1h-1v-1h-1v1h-1v-1h-4v1h-1v-1h-1v2h-3v-2h-1v2h-2v-2h-1v1h-1v-1h-1v1h-2v-1h-2v1h-2v-1h-1v1h-3v3h-1v-3h-2v1h-2v-1h-3v-1h-2v1h-3v-1h-1v1h-2v-1h-2v2h-1v-2h-1v1h-1v-1h-3v1h-3v-1h-6v1h-1v1h-1v-1h-4v1h-2v-2h-1v1h-1v-1h-5v1h-1v-1h-1v1h-2v1h-1v-1h-3v-1h-1v1h-1v-1h-1v1h-2v-1h-1v1h-1v-1h-2v1h-2v-1h-5v1h-2v-1h-1v1h-1v-1h-1v1h-3v-1h-1v1h-1v-1h-1v1h-2v-1h-5v1h-1v-1h-1v1h-1v3h-1v-3h-5v-1h-1v1h-1v-1h-6v1h-1v-1h-1v1h-2v-1h-1v1h-1v-1h-1v1h-1v5h-1v-5h-2v-1h-10v1h-1v-1h-3v1h-1v-1h-3v1h-1v5h-1v-5h-1v-1h-2v1h-1v-1h-2v1h-1v-1h-3v2h-1v-2h-1v1h-1v1h-1v-2h-1v1h-1v-1h-8v1h-1v-1h-3v1h-1v-1h-2v1h-2v-1h-1v2h-1v-2h-2v1h-1v-1h-1v1h-3v-1h-1v1h-1v-1h-4v1h-1v-1h-3v1h-1v-1h-5v1h-2v-1h-1v1h-1v-1h-1v1h-1v1h-1v-1h-1v-1h-2v2h-1v-2h-1v1h-3v-1h-1v2h-1v-2h-2v1h-2v1h-1v-2h-2v1h-1v-1h-5v1h-1v-1h-1v1h-1v-1h-1v2h-1v-2h-2v1h-2v-1h-4v1h-1v-1h-1v1h-1v-1h-5v1h-3v-1h-1v1h-1v-1h-2v1h-4v-1h-6v1h-1v-1h-1v1h-1v-1h-1v1h-1v-1h-1v1h-1v4h-1v-4h-2v-1h-1v2h-1v-2h-2v2h-1v-1h-2v1h-1v-1h-2v1h-1v-2h-2v1h-1v1h-1v-2h-1v1h-1v1h-1v-1h-2v-1h-5v1h-1v-1h-3v1h-1v-1h-1v1h-1v-1h-2v1h-1v-1h-6v1h-1v-1h-6v1h-3v-1h-1v1h-1v-1h-2v1h-2v4h-1v-4h-1v-1h-1v1h-2v-1h-2v2h-2v-1h-1v1h-1v-1h-1v1h-1v-1h-1v-1h-1v1h-1v-1h-3v1h-1v-1h-3v1h-1v-1h-1v1h-1v-1h-1v1h-7v-1h-2v1h-1v1h-1v-1h-1v1h-1v-1h-1v-1h-1v1h-1v-1h-4v1h-1v-1h-1v1h-1v-1h-2v1h-1v-1h-4v2h-1v-2h-1v1h-1v-1h-2v1h-1v-1h-1v2h-1v-2h-3v1h-1v5h-1v-5h-1v-1h-5v1h-1v-1h-4v1h-2z"/>
<path d="M278 394h1v1h2v-1h1v1h2v-1h2v1h1v-1h1v1h3v-1h1v1h1v-1h1v1h3v-2h1v-1h1v3h2v-1h1v1h1v-1h1v-2h1v3h2v-1h1v1h1v-1h2v1h1v-1h1v-1h1v2h8v-1h3v1h2v-3h1v2h3v1h1v-1h2v1h1v-1h1v-1h1v2h1v-1h2v1h1v-1h2v1h2v-2h1v2h1v-1h1v-2h4v2h4v1h2v-3h1v3h1v-1h1v1h4v-1h1v-1h2v2h6v-1h1v1h1v-1h1v1h1v-1h1v-2h1v3h1v-1h1v1h5v-3h1v1h1v1h2v-2h1v2h1v-1h1v1h2v1h1v-1h2v-1h1v2h4v-1h2v1h2v-1h1v1h1v-1h1v1h1v-2h1v1h1v-1h1v1h3v-4h1v5h1v-1h1v1h2v-1h4v1h2v-1h2v1h1v-2h1v1h1v1h1v-1h1v1h3v-1h2v1h2v-2h1v1h2v-1h1v2h5v-2h1v1h2v1h1v-1h3v1h1v-1h1v1h2v-1h2v1h1v-1h2v-1h1v2h2v-3h2v2h2v1h3v-1h1v1h2v-1h2v-3h1v4h2v-1h3v1h3v-1h2v1h1v-1h1v1h1v-2h1v1h1v-1h1v2h2v-1h1v1h6v-1h3v1h5v-1h1v1h3v-1h1v1h1v-1h1v-5h1v6h1v-6h1v6h8v-1h4v1h3v-1h4v1h3v-1h1v1h4v-1h1v1h4v-1h1v-2h1v2h1v-1h1v-2h1v1h1v-2h1v3h1v-1h1v1h1v1h4v-1h1v2h1v-1h1v1h1v-2h1v1h1v-1h1v2h5v-2h1v2h3v-1h3v1h1v-1h1v-2h1v2h3v-1h1v2h1v-1h1v-1h1v2h1v-2h1v2h1v-1h1v-1h1v-1h1v2h9v1h1v-1h1v1h1v-2h1v2h2v-1h1v1h1v-1h2v1h1v-1h2v1h2v-1h1v-1h1v2h3v-1h1v-1h1v1h1v1h2v-1h1v1h2v-1h1v1h1v-1h1v1h1v-1h2v1h1v-2h1v1h3v1h1v-6h1v5h1v1h6v-1h1v1h7v-2h1v2h1v-1h5v-1h1v2h1v-1h1v1h4v-1h3v1h1v-1h1v-3h1v3h2v1h2v-1h1v1h8v-1h1v1h1v-1h1v1h2v-1h1v-2h1v3h1v-1h4v1h1v-1h2v1h3v-1h3v1h1v-1h1v1h2v-1h2v1h2v-1h2v-2h1v3h10v-1h1v1h4v-1h1v1h1v-1h1v1h1v-1h5v1h1v-1h3v1h1v-2h1v1h2v1h1v-2h1v1h1v-1h1v1h1v-3h1v4h1v-1h1v1h2v-1h3v1h2v-1h4v1h1v-1h2v1h1v-1h1v-2h1v2h2v1h1v-1h2v1h3v-1h3v1h3v-2h1v2h1v-1h1v1h1v-1h1v-1h1v2h1v-1h2v-1h1v2h1v-1h1v1h6v-1h1v1h3v-5h1v2h1v3h1v-1h3v1h1v-1h1v1h1v-1h2v1h3v-1h1v-1h1v2h1v-2h1v1h2v1h3v-2h1v1h2v1h5v-1h3v1h2v-1h4v1h1v-1h2v1h1v-1h1v1h1v-1h1v1h8v-1h1v1h3v-1h1v1h11v-1h2v1h1v-1h1v-1h1v2h3v-1h1v1h2v-1h1v-1h1v2h2v-1h2v-4h1v4h1v1h1v-1h2v-1h1v1h4v1h3v-1h1v-1h1v1h2v1h1v-1h1v1h4v-1h2v1h2v-2h1v2h2v-2h1v2h1v-1h1v1h1v-2h1v1h5v1h2v-3h1v2h3v1h1v-1h3v1h2v-1h2v1h1v-3h1v1h1v2h1v-2h3v1h2v1h3v-1h2v1h2v-2h1v-1h1v2h1v-2h2v1h1v2h1v-1h1v-2h1v2h1v1h2v-1h9v1h1v-1h2v1h1v-1h1v1h1v-1h2v1h1v-1h1v1h1v-1h2v1h3v-1h2v-3h1v4h2v-1h2v1h1v-3h1v2h3v1h5v-1h4v1h1v-1h2v-1h1v1h2v1h2v-2h3v1h1v1h1v-1h1v1h3v-2h2v-1h1v1h1v-1h1v1h1v-2h1v2h1v1h1v-3h2v3h1v-3h1v-4h1v6h2v1h1v1h1v-2h1v1h1v1h2v-1h2v1h1v-1h7v1h1v-1h2v1h2v-1h2v-2h1v3h1v-1h1v-2h1v-1h1v3h1v-2h1v2h2v-3h2v2h1v2h3v-1h1v1h3v-1h1v1h1v-1h2v1h1v-1h1v1h1v-2h1v2h1v-1h1v1h1v-1h2v-1h1v1h5v1h9v-1h2v1h3v-1h1v1h2v-2h1v2h2v-3h1v1h1v2h2v-1h1v1h6v-2h1v1h1v1h3v-1h1v1h1v-1h4v1h1v-1h1v-4h1v4h3v-1h1v1h1v1h2v-1h2v1h1v-1h1v1h1v-1h1v-1h1v1h1v-1h1v2h1v-1h1v-1h1v2h1v-1h1v1h2v-3h1v2h1v1h2v-1h1v-1h1v-1h1v2h2v1h1v-1h3v1h5v-1h1v1h2v-1h1v1h4v-1h1v1h1v-1h1v1h4v-1h3v1h2v-1h1v1h1v-1h2v1h1v-1h1v1h4v-1h1v1h3v-1h2v1h2v-1h2v1h1v-1h1v1h1v-1h1v1h3v-1h1v1h1v-2h1v1h3v1h1v-1h1v1h2v-2h1v2h2v-1h4v1h2v-1h1v1h1v-1h1v1h5v-1h1v-2h1v2h3v-1h3v1h1v-1h1v-1h1v1h2v1h5v1h1v-3h1v2h1v1h2v-3h1v1h1v-1h1v3h1v-3h6v3h1v-1h1v1h1v-2h2v1h1v-2h1v1h1v2h2v-1h2v-2h1v2h1v-1h3v-1h1v3h1v-3h1v1h1v1h1v-6h1v4h2v1h2v1h4v-2h1v2h1v-7h1v6h2v1h3v1h1v-1h1v1h6v-1h1v1h1v-1h1v1h1v-1h5v1h4v-2h1v1h2v1h1v-1h1v1h2v4h-1v1h-2v1h-1v-2h-4v2h-1v-1h-1v-1h-1v1h-2v-1h-1v3h-1v-2h-1v-1h-1v1h-1v2h-1v-2h-3v-1h-4v1h-1v-1h-4v2h-2v7h-1v-7h-1v-2h-1v1h-1v-1h-1v1h-2v-1h-1v1h-1v2h-1v-1h-1v3h-1v-3h-1v-1h-1v2h-1v-1h-3v-1h-1v-1h-2v1h-2v-1h-2v1h-2v1h-1v1h-2v-1h-1v-1h-1v2h-1v-3h-2v1h-1v1h-1v1h-3v-2h-1v2h-2v-2h-4v-1h-2v2h-1v-2h-1v2h-1v-2h-2v1h-1v2h-3v-1h-3v-1h-2v-1h-1v1h-1v-1h-1v1h-1v-1h-2v1h-1v1h-1v-1h-3v1h-1v-2h-2v1h-2v-1h-2v1h-2v-1h-1v1h-2v-1h-2v1h-2v-1h-2v1h-1v-1h-1v1h-2v-1h-3v1h-1v-1h-2v1h-1v-1h-2v1h-1v-1h-5v1h-1v-1h-2v1h-1v-1h-1v1h-2v-1h-1v1h-1v-1h-4v1h-1v-1h-5v1h-1v1h-1v-2h-4v1h-1v-1h-3v1h-2v-1h-4v1h-2v-1h-1v1h-3v-1h-1v1h-1v-1h-4v1h-2v-1h-2v1h-1v-1h-2v1h-1v1h-1v-1h-1v1h-1v-2h-1v1h-1v-1h-1v1h-1v1h-2v-1h-1v1h-1v-1h-2v1h-1v-2h-1v2h-2v-2h-3v2h-1v-2h-1v1h-3v-1h-1v1h-2v-1h-1v1h-1v-1h-1v2h-1v-2h-1v1h-1v-1h-1v2h-1v-1h-2v1h-2v6h-1v-6h-1v-2h-1v1h-2v-1h-1v1h-1v-1h-4v1h-1v-1h-2v1h-3v-1h-4v1h-4v-1h-1v1h-1v-1h-1v1h-2v1h-1v-2h-2v1h-1v-1h-2v3h-1v-2h-1v-1h-1v1h-1v-1h-3v1h-4v2h-1v-1h-1v-1h-2v1h-1v-2h-1v3h-1v-1h-1v1h-1v-2h-1v3h-1v-2h-2v-1h-4v-1h-2v1h-1v2h-1v-2h-2v-1h-1v1h-1v-1h-1v1h-2v-1h-2v1h-1v-1h-3v1h-1v1h-1v2h-1v2h-1v-5h-1v3h-1v1h-1v-3h-2v-1h-1v4h-1v-4h-1v4h-2v-2h-1v-2h-1v-1h-1v1h-1v-1h-5v1h-2v-1h-1v1h-4v1h-1v-2h-2v1h-1v1h-1v1h-1v-3h-1v3h-1v-3h-6v1h-3v2h-1v-3h-2v1h-2v4h-1v-4h-1v-1h-2v1h-1v-1h-1v1h-2v-1h-3v1h-2v-1h-4v1h-2v-1h-4v1h-1v2h-1v-2h-3v1h-1v-1h-1v-1h-1v1h-1v2h-1v-1h-1v1h-1v-3h-1v4h-1v-3h-1v-1h-1v1h-1v-1h-4v1h-1v-1h-1v2h-1v-2h-1v1h-1v1h-1v-1h-1v-1h-1v1h-1v-1h-1v3h-1v-2h-2v-1h-1v2h-1v-1h-1v-1h-2v1h-2v-1h-2v1h-1v3h-1v-3h-1v-1h-1v1h-1v-1h-1v1h-1v-1h-1v1h-1v-1h-4v1h-1v-1h-1v2h-1v-2h-2v1h-1v-1h-5v1h-1v1h-1v-1h-2v-1h-2v1h-2v-1h-1v1h-1v-1h-1v1h-2v1h-3v-2h-2v1h-1v4h-1v-4h-1v-1h-1v1h-1v-1h-1v1h-2v-1h-3v1h-1v-1h-2v1h-2v-1h-4v3h-1v-2h-2v-1h-1v1h-2v-1h-4v1h-2v-1h-1v1h-1v-1h-1v1h-1v-1h-8v1h-1v1h-1v-2h-1v2h-2v-2h-2v1h-1v-1h-2v1h-1v-1h-1v2h-1v-2h-3v1h-1v-1h-1v1h-4v-1h-1v3h-1v-2h-1v-1h-2v2h-2v1h-1v-2h-1v1h-1v-1h-1v-1h-2v1h-1v-1h-3v2h-1v-2h-2v1h-3v3h-1v-3h-1v-1h-2v1h-2v-1h-2v1h-2v-1h-1v1h-1v-1h-1v1h-8v-1h-5v1h-2v-1h-2v1h-2v-1h-1v1h-1v-1h-2v1h-1v-1h-1v1h-1v1h-1v-1h-1v-1h-1v1h-1v-1h-1v2h-1v1h-1v-3h-2v2h-1v-1h-2v-1h-4v1h-1v5h-1v-4h-1v-1h-5v1h-1v-2h-1v1h-1v1h-1v-1h-3v-1h-2v1h-2v-1h-2v1h-1v-1h-1v2h-1v-2h-1v1h-2v-1h-1v1h-1v-1h-7v1h-1v-1h-1v1h-1v4h-1v-4h-1v2h-1v-3h-3v1h-1v-1h-2v1h-4v-1h-1v1h-5v2h-1v-3h-1v3h-1v-3h-1v1h-1v-1h-1v1h-1v1h-1v-2h-3v2h-1v-2h-11v1h-1v-1h-1v1h-1v4h-1v-4h-1v-1h-1v2h-1v-2h-2v1h-6v-1h-1v1h-3v1h-1v-1h-1v-1h-1v1h-2v-1h-4v1h-1v-1h-2v1h-1v-1h-5v1h-1v1h-1v-1h-2v-1h-2v1h-1v1h-2v-2h-1v1h-1v-1h-1v2h-1v-1h-1v-1h-2v1h-4v-1h-1v1h-1v-1h-1v2h-1v-1h-2v-1h-2v2h-1v-1h-5v-1h-3v1h-1v5h-1v-5h-3v-1h-1v1h-1v1h-1v-2h-1v1h-5v2h-1v-2h-2v-1h-2v1h-1v-1h-1v1h-1v-1h-1v2h-1v-2h-1v2h-1v-1h-1v2h-1v-1h-1v-1h-2v-1h-5v1h-1v-1h-4v1h-1v2h-1v-3h-2v1h-2v-1h-2v1h-1v-1h-3v4h-2v-1h-1v3h-1v-2h-1v-2h-1v-1h-1v-1h-1v1h-1v-1h-6v2h-2v-2h-1v1h-1v-1h-1v1h-1v-1h-5v1h-1v-1h-3v1h-4v-1h-2v1h-1v-1h-4v2h-1v6h-1v-6h-1v6h-1v-6h-1v-1h-3v-1h-1v2h-1v-2h-5v1h-1v1h-1v-2h-1v1h-1v-1h-6v1h-1v-1h-1v3h-1v-1h-1v-2h-2v1h-2v-1h-1v1h-1v-1h-1v1h-3v-1h-5v2h-1v-1h-1v-1h-6v1h-3v1h-2v-1h-1v-1h-2v1h-1v-1h-1v1h-2v-1h-1v1h-1v-1h-1v1h-1v1h-1v-2h-1v2h-1v-2h-1v1h-1v-1h-2v1h-2v-1h-5v1h-3v1h-1v-2h-6v1h-7v-1h-1v2h-1v-1h-2v1h-1v1h-1v-3h-3v1h-1v6h-1v-6h-1v-1h-1v2h-2v-1h-3v-1h-2v1h-1v-1h-2v1h-3v-1h-3v1h-4v-1h-1v1h-7v-1h-3v1h-1v-1h-2v1h-2v2h-1v-2h-1v1h-1v1h-1v-3h-5v1h-1v-1h-1v1h-3v2h-1v-1h-1v-1h-2v1h-1v-1h-2v1h-1v-2h-3v1h-2v1h-2v1h-1v-2h-1v1h-1v1h-1v-1h-1v-2h-1v2h-1v-2h-1v2h-1v-2h-6v1h-2v1h-2v-1h-3v-1h-1v1h-1v-1h-1v1h-1v-1h-4v1h-1v-1h-2v1h-1v-1h-2v1h-5v-1h-4v1h-2v-1h-1v1h-1v1h-1v-1h-2v-1h-1v1h-1v-1h-1v1h-1v-1h-1v1h-2v-1h-2v1h-1v-1h-2v1h-1v2h-1v-2h-2v-1h-1v1h-1v-1h-3z"/>
<path d="M278 426h1v-2h1v1h6v1h2v-2h1v1h1v1h1v-2h1v2h1v-1h2v1h1v-1h1v1h1v-1h1v1h1v-1h1v1h3v-1h1v1h2v-1h1v1h3v-1h1v-1h1v1h4v-1h1v1h1v1h2v-2h1v2h1v-1h2v1h1v-2h1v2h1v-1h3v1h3v-2h2v2h1v-1h1v1h2v-1h1v1h2v-1h1v1h5v-1h1v1h2v-1h1v1h1v-1h2v1h1v-1h1v1h4v-2h2v2h1v-1h1v1h1v-2h1v1h1v-1h2v1h1v1h1v-1h1v1h2v-1h1v1h1v-1h1v1h3v-2h1v1h4v1h2v-1h5v1h2v-1h1v-1h1v2h3v-1h4v1h1v-1h4v1h1v-1h1v-1h1v2h3v-1h1v1h2v-1h2v1h7v-1h1v1h1v-1h1v1h2v-1h2v1h1v-2h1v1h2v-3h1v2h1v2h2v-1h3v-1h1v1h1v1h6v-1h1v1h3v-1h1v1h3v-1h2v-1h1v1h1v1h4v-1h5v1h1v-3h1v3h2v-4h1v2h1v-1h1v2h1v-1h1v2h4v-1h1v1h1v-1h2v1h1v-1h2v1h3v-2h1v2h2v-1h1v1h1v-1h3v1h1v-2h1v2h2v-1h3v-1h1v2h1v-1h1v1h1v-1h4v1h1v-1h1v1h1v-1h1v-1h1v2h1v-2h1v1h1v1h4v-1h1v-1h1v1h2v-1h1v2h1v-1h1v1h1v-1h1v1h1v-1h3v1h1v-1h1v1h3v-2h3v1h3v1h3v-1h1v1h2v-1h2v1h3v-1h1v1h1v-1h1v1h1v-1h6v1h1v-1h1v1h5v-1h2v-1h2v2h1v-2h1v1h1v1h1v-2h1v2h4v-1h2v1h2v-1h1v1h3v-1h1v-1h1v1h3v1h2v-2h1v1h3v-1h2v1h2v-1h1v2h1v-1h2v1h2v-1h2v1h1v-1h1v1h3v-1h1v1h1v-1h1v1h1v-1h2v1h1v-1h1v1h2v-1h1v1h1v-1h1v1h1v-1h1v1h3v-1h2v1h3v-1h1v1h1v-1h1v1h5v-1h1v-1h1v1h1v-1h1v2h2v-1h1v1h2v-1h3v1h3v-1h7v1h1v-1h1v-1h1v1h2v-1h1v2h3v-1h3v1h1v-1h1v1h2v-1h2v1h3v-1h2v1h3v-1h2v-1h1v1h1v1h3v-1h2v1h1v-2h1v1h1v1h1v-1h1v1h1v-1h1v1h1v-1h5v1h1v-1h3v1h2v-1h4v-1h1v1h2v1h1v-1h2v1h8v-1h1v1h4v-2h1v2h2v-1h2v-3h1v3h1v1h8v-1h1v1h1v-1h1v1h1v-2h3v1h1v1h1v-2h2v1h2v-1h1v1h1v1h1v-1h2v1h2v-1h2v1h1v-1h1v1h1v-1h2v-1h2v1h1v1h9v-1h1v1h1v-2h2v1h2v1h2v-1h1v1h2v-6h1v6h1v-1h1v-1h1v1h1v-1h1v1h2v1h1v-1h1v1h4v-1h1v1h1v-1h1v1h6v-2h1v1h1v1h3v-2h1v2h2v-1h1v1h2v-1h2v-1h1v1h2v1h2v-1h1v-1h1v2h8v-1h2v1h1v-1h1v1h1v-1h3v1h1v-2h1v1h1v-1h1v2h3v-1h2v1h4v-1h1v1h2v-1h1v1h1v-1h3v1h1v-1h1v1h1v-1h2v1h1v-2h1v1h4v1h1v-1h2v1h6v-1h1v1h1v-1h1v1h1v-2h1v2h3v-2h1v1h1v-1h1v-1h1v2h1v-1h1v1h1v-1h1v-1h2v2h2v-2h1v1h1v2h2v-4h1v3h3v1h1v-1h2v1h1v-1h1v-1h1v1h2v1h2v-2h1v1h3v-1h1v2h1v-1h1v-1h1v1h1v1h1v-1h2v1h1v-1h3v1h2v-1h1v1h1v-1h1v1h3v-1h1v1h2v-1h1v-1h1v1h1v1h1v-1h1v-1h1v2h2v-1h2v-1h2v1h3v1h2v-1h2v1h2v-1h2v1h1v-1h2v1h6v-1h1v1h2v-1h5v1h2v-1h2v1h5v-2h1v1h2v1h2v-4h1v4h5v-1h1v1h2v-1h1v1h2v-1h2v1h3v-1h8v1h6v-2h1v2h1v-2h1v1h2v1h3v-1h4v1h1v-1h2v1h5v-1h1v1h3v-2h1v1h1v1h1v-1h2v1h1v-1h1v1h1v-1h1v-1h1v1h1v1h1v-1h1v1h1v-1h1v1h1v-1h6v1h1v-1h1v-1h1v1h1v1h1v-2h1v2h2v-1h1v1h1v-1h1v1h2v-1h2v1h4v-1h3v1h1v-1h1v1h3v-5h1v5h2v-1h1v1h4v-1h1v1h2v-1h1v1h1v-1h1v1h2v-1h1v1h1v-1h4v-1h3v1h6v1h1v-1h1v1h1v-1h2v1h2v-2h1v2h1v-1h1v1h1v-1h1v1h2v-1h2v-1h1v1h1v1h2v-1h1v1h3v-1h2v1h1v-1h1v1h1v-1h2v1h1v-1h2v1h1v-2h1v1h2v1h1v-1h1v1h1v-3h1v3h1v-1h1v-1h3v2h1v-1h1v-1h1v1h1v1h3v-1h1v-1h1v2h2v-1h5v-1h1v1h5v1h3v-1h1v-1h2v1h1v1h1v-1h1v1h2v-1h1v-1h1v2h2v-1h3v1h5v-1h2v1h5v-2h1v1h1v1h3v-1h2v-1h1v1h2v-1h1v1h1v1h5v-1h2v1h2v-2h1v2h1v-1h2v-1h1v2h3v-1h2v1h3v-2h1v1h1v1h1v-1h1v-1h1v2h1v-1h4v1h3v-1h5v1h1v-1h1v-1h1v1h2v1h1v-2h1v2h1v-2h1v2h2v-1h4v-1h1v1h1v-1h1v1h1v1h6v-1h2v1h2v-1h2v1h3v-1h1v1h1v-2h1v1h1v1h3v-1h2v1h1v-1h1v1h1v-1h3v-5h1v6h1v-5h1v5h3v-2h1v2h2v-1h1v1h4v-1h1v1h1v-1h1v1h1v4h-6v1h-1v-1h-2v1h-1v-1h-3v1h-2v4h-1v-4h-1v4h-1v-4h-2v-1h-1v1h-1v-1h-6v1h-2v-1h-1v2h-1v-1h-1v-1h-4v1h-2v-1h-1v1h-2v-1h-3v1h-7v-1h-2v1h-4v1h-1v-1h-1v-1h-1v1h-2v-1h-1v2h-1v-2h-1v1h-1v1h-1v-2h-1v1h-3v-1h-1v2h-1v-1h-1v-1h-1v1h-2v-1h-1v1h-2v1h-1v-1h-2v-1h-2v1h-2v-1h-4v1h-1v1h-2v-2h-6v2h-1v-2h-3v1h-1v-1h-1v1h-2v1h-1v-1h-1v-1h-1v1h-2v1h-1v-2h-2v1h-1v1h-2v-2h-2v1h-1v-1h-7v1h-1v-1h-5v2h-1v-1h-1v-1h-3v1h-1v-1h-1v1h-2v-1h-2v1h-1v-1h-1v1h-2v-1h-4v2h-1v-1h-1v-1h-6v1h-3v1h-1v1h-1v-1h-2v-1h-1v-1h-3v2h-1v-1h-1v-1h-4v2h-1v-1h-4v-1h-3v1h-1v-1h-2v1h-2v-1h-1v1h-1v1h-1v-1h-3v-1h-1v1h-1v-1h-1v1h-3v-1h-1v1h-1v-1h-3v1h-1v-1h-1v1h-1v-1h-1v1h-1v-1h-4v1h-2v-1h-1v1h-1v1h-1v-2h-1v1h-2v-1h-2v1h-1v-1h-1v1h-1v-1h-6v2h-1v-2h-4v1h-1v-1h-3v2h-1v6h-1v-6h-1v-1h-1v-1h-1v1h-2v1h-2v-1h-1v-1h-2v1h-1v1h-1v-2h-3v1h-1v1h-1v-1h-1v1h-1v-2h-3v1h-1v1h-1v-2h-1v1h-1v1h-2v-2h-1v1h-1v1h-1v-1h-2v-1h-1v1h-1v-1h-1v1h-4v-1h-5v1h-1v-1h-1v1h-1v-1h-1v1h-2v1h-1v-1h-1v-1h-1v1h-4v1h-1v-2h-2v1h-1v1h-1v-2h-1v1h-3v-1h-2v1h-3v-1h-1v1h-3v1h-1v-2h-1v1h-2v-1h-2v1h-1v-1h-3v1h-1v1h-2v-2h-1v2h-1v-1h-1v-1h-5v1h-1v-1h-3v1h-2v5h-1v-5h-1v-1h-3v1h-2v-1h-1v1h-1v-1h-2v1h-5v1h-1v-1h-2v-1h-2v1h-1v-1h-1v2h-1v-2h-2v1h-1v-1h-1v2h-1v-1h-1v-1h-1v1h-1v-1h-2v1h-1v-1h-1v1h-2v-1h-4v1h-2v1h-1v-1h-2v-1h-2v1h-1v-1h-1v1h-5v1h-1v-1h-1v-1h-1v1h-1v-1h-1v1h-3v-1h-3v1h-2v1h-1v-1h-2v-1h-1v1h-3v-1h-1v1h-1v-1h-1v1h-2v-1h-2v1h-1v-1h-1v1h-4v-1h-3v1h-1v-1h-1v1h-1v5h-1v-4h-1v-1h-1v2h-2v-1h-2v1h-3v-3h-1v1h-2v2h-1v-2h-1v1h-1v-2h-3v1h-1v-1h-1v1h-1v-1h-1v1h-4v-1h-1v1h-1v-1h-2v2h-1v-2h-3v1h-2v1h-2v-2h-7v1h-4v-1h-2v2h-1v-2h-2v2h-1v-2h-4v1h-2v-1h-1v1h-1v1h-1v-1h-3v-1h-2v1h-1v-1h-1v1h-1v-1h-1v1h-2v-1h-10v1h-1v-1h-1v1h-2v-1h-3v1h-1v-1h-2v1h-1v-1h-3v1h-1v-1h-2v1h-2v-1h-2v2h-1v-2h-2v1h-1v-1h-2v1h-1v1h-1v-1h-2v1h-1v-2h-1v2h-1v-1h-4v3h-1v-3h-6v-1h-2v1h-1v-1h-2v1h-3v-1h-1v1h-3v-1h-2v1h-3v-1h-1v2h-1v-2h-1v1h-1v-1h-1v1h-1v-1h-1v1h-4v-1h-1v1h-1v1h-1v-1h-3v1h-1v-1h-2v-1h-1v2h-1v-1h-3v-1h-3v1h-2v-1h-5v1h-1v3h-1v-3h-1v-1h-2v1h-1v1h-1v-2h-1v1h-1v-1h-1v1h-1v-1h-10v1h-1v-1h-2v2h-1v-1h-6v-1h-2v1h-1v1h-1v-1h-1v1h-3v-1h-1v-1h-1v1h-1v-1h-3v1h-2v-1h-2v2h-1v-1h-2v-1h-2v1h-2v-1h-3v1h-1v-1h-1v1h-1v-1h-1v2h-1v-2h-2v1h-3v-1h-2v1h-1v-1h-1v2h-1v-1h-1v-1h-2v1h-6v-1h-1v1h-2v1h-1v-1h-1v-1h-5v1h-3v1h-1v-1h-1v-1h-2v1h-1v-1h-1v1h-1v1h-2v2h-1v-3h-1v-1h-4v1h-1v1h-1v-2h-5v1h-3v-1h-1v1h-1v-1h-8v1h-1v-1h-2v1h-1v-1h-5v1h-1v-1h-1v2h-1v-2h-2v2h-1v-2h-1v1h-1v-1h-1v2h-1v-1h-3v-1h-3v1h-2v-1h-3v1h-3v1h-1v-1h-2v-1h-3v1h-3v-1h-1v1h-1v-1h-4v1h-6v1h-1v-1h-1v-1h-1v1h-1v-1h-2v1h-1v-1h-6v1h-1v-1h-2v1h-1v-1h-1v1h-1v-1h-1v1h-1v1h-1v-2h-1v1h-1v1h-1v-2h-3v1h-1v3h-1v-3h-2v1h-1v-1h-2v-1h-8v1h-2v1h-1v-1h-1v-1h-1v2h-2v-1h-5v-1h-2v1h-1v1h-1v-2h-1v1h-2v-1h-1v1h-1v1h-1v-2h-1v2h-1v-1h-2v-1h-3v1h-1v-1h-1v2h-1v-1h-1v-1h-2v1h-1v-1h-1v2h-1v-1h-1v-1h-3v1h-3v-1h-3v1h-1v-1h-6v1h-5v-1h-1v2h-1v-1h-1v4h-1v-4h-2v1h-1v-1h-3v-1h-1v1h-2v-1h-2v1h-1v-1h-3v1h-1v-1h-1v1h-2v-1h-1v1h-1v-1h-2v1h-1v-1h-1v1h-1v-1h-6v2h-2v-1h-1v-1h-1v1h-3v3h-1v-3h-1v1h-1v-1h-1v-1h-2v1h-1v-1h-1v2h-1v-2h-1v1h-2v-1h-3v1h-2v-1h-2v2h-1v-1h-1v-1h-3v1h-5v-1h-2v1h-1v-1h-2v1h-1v1h-1v-1h-2v-1h-1v1h-1v-1h-1v1h-2v1h-1v-1h-1v-1h-1v1h-1v-1h-2v2h-1v-1h-2v-1h-1v2h-1v-2h-1v1h-2v-1h-1v1h-1v-1h-5v1h-2v-1h-2v1h-1v-1h-3v1h-6v-1h-3v1h-1v-1h-6v1h-1v-1h-1v1h-2v-1h-1v1h-1v-1h-3v1h-1v-1h-1v1h-2v-1h-1v1h-2v-1h-1v1h-1v-1h-1v1h-1v-1h-1v1h-3v-1h-1v1h-1v-1h-3v1h-1v3h-1v-3h-1v-1h-2v1h-2v1h-1v-1h-2v-1h-2v1h-1v-1h-1v1h-2v1h-1v-2h-1v1h-2v-1h-5v2h-1v-1h-2v-1h-5v1h-2v-1h-1v1h-1v-1h-1v1h-6v-1h-1z"/>
<path d="M278 455h1v1h2v-1h2v1h1v-1h3v1h2v-1h1v1h2v-1h1v1h1v-1h2v1h5v-1h1v1h1v-2h1v2h2v-1h1v1h1v-1h4v1h1v-1h2v-1h1v1h2v1h3v-1h3v-1h1v2h10v-1h1v1h6v-1h1v1h3v-1h2v1h3v-1h3v-1h1v1h1v1h1v-2h1v1h1v1h1v-3h1v3h1v-1h2v-2h1v1h1v2h4v-1h3v1h3v-1h2v1h1v-1h1v-1h1v2h6v-1h1v1h1v-1h2v1h1v-1h2v-2h1v3h1v-1h1v-1h1v1h3v-1h1v1h4v-1h1v1h2v1h1v-1h1v1h1v-1h1v1h1v-1h1v1h2v-1h1v1h5v-1h4v1h1v-2h1v2h1v-2h1v2h1v-1h1v1h1v-1h2v1h1v-1h6v1h4v-1h4v-1h1v2h2v-1h1v1h5v-1h1v1h2v-1h2v1h1v-1h2v1h3v-1h2v1h1v-1h1v1h2v-6h1v6h2v-2h1v1h1v1h1v-1h3v-1h1v1h2v-1h1v1h1v-1h2v2h2v-1h1v1h1v-2h1v-3h1v4h1v-1h1v2h1v-2h1v1h1v1h5v-1h1v1h1v-1h2v1h2v-1h1v1h1v-2h1v1h1v1h1v-1h2v1h1v-2h1v2h1v-1h2v1h2v-1h1v1h2v-1h1v1h3v-3h1v-1h1v-1h2v-2h1v4h1v1h1v2h1v-3h1v1h1v1h1v1h1v-2h1v1h3v1h3v-4h1v4h5v-1h2v1h3v-1h2v1h2v-1h1v1h2v-2h2v-1h1v3h1v-1h2v-1h1v2h2v-1h1v-1h1v2h2v-1h1v1h2v-1h1v-2h1v-2h1v2h1v2h5v1h1v-1h1v-2h1v3h2v-2h1v2h1v-1h3v1h3v-1h3v1h1v-3h1v2h3v1h7v-2h1v1h1v1h1v-1h1v-2h1v1h1v1h3v1h3v-1h6v-2h1v3h1v-1h1v1h4v-1h2v1h3v-2h1v1h1v1h1v-2h1v2h6v-1h2v1h3v-1h1v1h2v-1h1v1h1v-1h2v1h2v-1h2v1h2v-2h2v1h3v1h2v-1h2v-1h1v-1h1v1h1v2h1v-2h1v2h1v-1h1v1h7v-3h1v2h1v1h1v-1h1v1h1v-1h1v-1h1v2h2v-2h1v2h3v-1h4v1h4v-1h1v1h3v-1h3v1h1v-2h1v1h1v1h4v-2h2v1h2v1h1v-2h1v2h1v-1h3v-1h1v1h1v1h2v-1h1v1h5v-1h2v-1h6v2h1v-2h2v1h1v1h1v-2h1v2h1v-1h1v-1h1v2h4v-1h1v1h3v-1h5v1h1v-1h2v1h16v-2h1v1h1v1h2v-1h1v1h1v-1h2v-1h1v1h1v1h5v-1h1v1h8v-1h2v1h1v-1h3v1h1v-1h1v1h9v-1h1v1h3v-1h1v-4h1v2h1v3h1v-2h1v1h1v-3h1v2h1v-4h1v-2h1v6h2v2h1v-1h1v-3h1v3h1v-1h1v2h1v-3h1v1h1v-2h1v1h2v2h1v-1h1v2h2v-1h3v1h9v-1h3v-1h1v1h4v1h2v-1h2v1h1v-1h2v1h1v-1h3v1h4v-2h2v2h4v-1h1v1h1v-1h1v1h3v-1h1v1h3v-1h1v1h2v-1h1v-1h1v2h5v-1h1v1h3v-1h2v-2h1v2h1v1h8v-1h1v1h5v-1h1v1h1v-1h1v1h1v-3h1v3h1v-1h3v-1h1v1h1v1h3v-4h1v3h1v1h1v-6h1v5h1v1h1v-3h2v3h3v-1h1v1h1v-2h2v1h2v1h7v-1h1v1h3v-2h1v1h4v1h3v-1h2v-1h1v2h1v-2h1v-4h1v4h2v1h1v-1h1v1h7v1h2v-2h1v1h1v-2h1v2h1v1h2v-1h1v1h1v-1h1v1h1v-1h1v1h1v-2h1v2h1v-1h1v-6h1v6h1v1h4v-1h1v1h1v-2h1v2h5v-1h1v1h6v-1h1v1h2v-2h2v2h3v-1h2v1h3v-1h2v1h1v-1h1v1h1v-2h1v-2h1v1h1v2h1v1h1v-1h2v1h1v-1h2v1h2v-1h3v1h3v-1h2v1h2v-1h1v1h1v-1h1v1h4v-1h3v1h4v-1h1v1h1v-1h1v1h1v-1h1v1h1v-1h1v-5h1v5h1v1h2v-1h1v1h1v-1h1v1h2v-1h1v1h1v-1h1v1h1v-2h1v2h1v-1h1v-1h1v2h1v-1h1v-1h1v1h1v1h1v-2h1v1h1v1h4v-1h1v1h1v-1h2v1h2v-1h1v-1h1v2h2v-6h1v3h1v2h1v1h2v-4h1v4h1v-1h3v1h1v-1h1v1h2v-1h1v1h4v-1h1v-2h1v1h1v-1h1v3h1v-3h1v3h2v-1h4v1h3v-1h4v1h1v-1h2v1h5v-1h1v1h1v-2h1v1h1v-1h1v2h5v-1h2v1h3v-1h1v-6h1v6h2v1h4v-1h1v1h4v-3h1v3h1v-2h1v1h2v1h1v-1h3v1h2v-1h1v1h1v-1h1v1h2v-1h2v-5h1v6h2v-1h1v1h1v-1h2v-1h1v2h1v-1h1v1h1v-2h1v1h1v1h1v-1h1v1h1v-1h1v1h2v-1h3v1h1v-1h1v-5h1v5h1v1h1v-1h1v1h2v-1h3v1h1v-1h2v1h4v-1h1v1h9v-1h2v1h3v-1h1v1h1v-1h1v1h1v-6h1v6h2v-1h1v1h1v-3h1v2h1v1h2v-2h1v1h1v1h2v-3h1v2h1v1h2v-1h3v1h1v-1h1v-1h1v1h1v1h10v-1h1v-2h1v2h1v1h1v-1h1v1h3v-1h1v1h3v-1h1v1h2v-1h1v1h7v-1h1v1h2v-1h1v1h4v-1h1v-6h1v6h1v1h1v-3h1v2h2v1h2v-1h3v1h1v-1h2v5h-3v1h-2v-1h-4v1h-1v-1h-1v2h-2v7h-1v-7h-1v-2h-7v3h-1v-3h-6v1h-2v-1h-1v1h-1v5h-1v-5h-3v-1h-2v1h-1v-1h-2v1h-1v1h-1v-1h-2v1h-1v-2h-2v1h-1v-1h-5v3h-1v-2h-2v-1h-1v1h-3v-1h-2v1h-1v-1h-1v1h-4v-1h-4v1h-2v-1h-2v1h-1v3h-1v-3h-1v-1h-4v1h-1v-1h-1v1h-1v-1h-3v1h-1v-1h-6v1h-1v-1h-1v2h-1v-2h-1v1h-2v-1h-1v2h-1v-1h-2v-1h-2v1h-1v-1h-3v2h-1v-2h-1v1h-1v-1h-1v1h-1v-1h-6v1h-1v1h-2v-1h-1v-1h-1v1h-4v-1h-1v1h-1v-1h-1v1h-1v5h-1v-5h-1v1h-1v-1h-1v-1h-1v1h-1v-1h-1v1h-1v-1h-2v1h-1v-1h-1v1h-3v-1h-2v1h-3v-1h-2v1h-3v-1h-2v1h-1v-1h-1v2h-1v6h-1v-6h-1v-2h-1v1h-1v-1h-1v1h-1v-1h-1v1h-2v-1h-1v1h-1v-1h-2v1h-1v-1h-1v1h-3v-1h-1v1h-5v-1h-2v1h-1v2h-1v-3h-3v1h-2v-1h-1v2h-1v-2h-1v1h-4v2h-1v-1h-1v1h-1v-3h-2v1h-1v-1h-4v1h-1v-1h-1v1h-1v-1h-1v1h-3v3h-1v-3h-1v-1h-1v1h-2v4h-1v-4h-4v-1h-1v1h-1v1h-1v-1h-1v-1h-4v1h-3v1h-1v-1h-1v-1h-3v1h-3v-1h-4v1h-2v-1h-3v1h-2v1h-1v-1h-2v4h-1v-4h-1v-1h-2v1h-2v-1h-2v1h-1v-1h-3v2h-2v-2h-1v1h-1v-1h-3v1h-2v-1h-4v2h-1v-1h-2v-1h-1v1h-1v-1h-4v1h-3v-1h-1v2h-1v1h-1v-2h-2v1h-1v-1h-1v-1h-1v1h-1v-1h-5v1h-1v-1h-1v3h-1v-2h-1v-1h-1v1h-4v-1h-4v1h-1v-1h-2v1h-1v-1h-5v2h-1v-1h-1v-1h-1v2h-1v-1h-1v-1h-3v1h-1v5h-1v-5h-1v-1h-3v1h-3v-1h-6v1h-3v-1h-1v1h-2v-1h-3v1h-2v1h-1v2h-1v-3h-1v2h-1v3h-1v-4h-1v-1h-1v-1h-1v1h-1v-1h-1v2h-1v-1h-1v-1h-2v1h-1v-1h-3v1h-2v-1h-1v1h-2v-1h-1v2h-1v-2h-4v1h-1v-1h-2v1h-1v-1h-5v4h-2v-4h-1v2h-1v3h-1v-3h-1v-1h-1v2h-1v-2h-3v-1h-2v1h-1v-1h-3v1h-3v-1h-6v1h-1v-1h-1v1h-1v-1h-2v1h-1v-1h-1v1h-1v-1h-1v2h-1v-1h-1v5h-1v-5h-1v1h-1v-1h-1v-1h-5v1h-5v-1h-2v1h-1v1h-1v1h-1v-3h-1v1h-1v2h-1v-2h-7v-1h-1v1h-1v-1h-1v1h-2v-1h-3v1h-1v-1h-1v1h-3v-1h-2v1h-1v-1h-2v1h-1v-1h-2v1h-3v-1h-2v2h-1v-2h-5v1h-1v-1h-1v1h-1v-1h-1v3h-1v-3h-1v1h-3v1h-1v1h-1v-1h-2v-1h-2v2h-1v2h-1v1h-1v-2h-1v1h-1v-3h-1v-2h-1v2h-2v6h-1v-4h-1v-3h-1v3h-1v-3h-1v3h-4v-4h-1v2h-1v-2h-1v2h-1v-1h-1v-1h-2v1h-1v-1h-7v3h-1v-2h-1v1h-1v-2h-2v1h-1v1h-1v-2h-4v1h-1v-1h-6v1h-1v-1h-3v1h-4v-1h-2v1h-1v-1h-2v1h-1v-1h-2v1h-1v-1h-7v1h-1v-1h-4v1h-2v-1h-1v1h-4v-1h-1v1h-1v-1h-3v2h-1v-2h-3v1h-1v-1h-4v1h-1v1h-2v-1h-1v1h-2v-1h-1v1h-1v1h-2v-2h-1v-1h-6v1h-1v-1h-2v1h-1v-1h-1v1h-2v-1h-1v1h-2v-1h-1v1h-3v-1h-6v1h-1v-1h-1v1h-1v-1h-4v1h-1v-1h-5v1h-2v-1h-4v1h-3v1h-1v-1h-4v-1h-1v1h-1v4h-1v-4h-1v-1h-1v2h-1v-1h-2v-1h-2v1h-1v-1h-3v1h-4v1h-1v-2h-1v1h-1v-1h-1v2h-1v-2h-1v2h-1v-2h-2v2h-2v-2h-4v1h-1v-1h-4v1h-1v-1h-4v1h-1v-1h-2v1h-1v-1h-3v1h-1v-1h-1v1h-3v-1h-2v1h-2v-1h-2v1h-1v-1h-3v1h-3v-1h-1v2h-1v-1h-4v-1h-4v1h-1v3h-1v-3h-2v-1h-1v1h-1v1h-1v-1h-2v1h-1v-2h-1v1h-3v1h-3v-1h-1v1h-1v-1h-1v2h-1v-2h-1v-1h-1v3h-1v-2h-1v2h-1v-3h-1v1h-2v-1h-1v1h-1v-1h-1v1h-8v4h-1v-4h-4v-1h-1v3h-1v-3h-2v1h-1v-1h-1v1h-5v2h-1v-2h-2v-1h-1v1h-1v-1h-1v1h-1v-1h-2v2h-1v-1h-1v-1h-3v3h-1v-3h-2v1h-1v-1h-1v1h-1v1h-1v-2h-3v1h-2v-1h-1v1h-1v-1h-2v1h-1v2h-1v-2h-1v-1h-1v4h-1v3h-1v-3h-1v-1h-1v2h-1v-2h-1v-3h-3v1h-2v-1h-3v2h-2v-1h-1v-1h-2v1h-1v1h-1v-2h-3v1h-1v-1h-1v1h-2v1h-1v-2h-2v1h-1v-1h-6v1h-1v-1h-1v1h-1v-1h-1v1h-1v4h-1v-3h-1v-2h-5v2h-1v-1h-1v1h-1v-1h-1v2h-1v-2h-2v1h-3v1h-1v-3h-2v1h-1v3h-1v-3h-1v-1h-1v1h-1v-1h-1v1h-1v-1h-2v1h-2v-1h-2v1h-1v-1h-12v1h-3v-1h-2v1h-3v-1h-3v1h-1v-1h-1v1h-1v-1h-1v1h-1v-1h-2v1h-1v-1h-1v1h-3v-1h-1v2h-1v1h-1v-2h-1v-1h-5v2h-1v-1h-2v-1h-2v1h-1v-1h-1v1h-2v-1h-1v1h-1v-1h-1v1h-1v-1h-2v1h-2v-1h-1v1h-1v-1h-1v1h-4v-1h-1v1h-2v1h-1v-1h-1v-1h-2v2h-1v-2h-3v2h-1v-1h-1v-1h-6v1h-5v-1h-2v2h-1v-1h-3v-1h-3v2h-1v-2h-1v1h-1v4h-1v-4h-2v1h-1v-1h-2v1h-1v-2h-1v1h-2v-1h-4v1h-2v-1h-1v1h-4v-1h-3v1h-2v-1h-2v1h-1v-1h-6v1h-3v1h-1v-2h-1v1h-1v-1h-3v1h-2v-1h-1v1h-1v-1h-1v1h-2v-1h-1v1h-2v-1h-1v1h-1v-1h-2v1h-3v-1h-5v1h-1v-1h-3v1h-1v-1h-3v1h-1v-1h-1v1h-1v-1h-5v2h-1z"/>
<path d="M278 486h1v-1h1v-4h1v-1h1v1h1v-2h1v2h1v-1h1v5h1v-6h1v5h1v1h1v-7h1v3h1v-2h4v6h1v-4h1v2h1v1h1v-4h1v6h1v-2h3v-2h1v-1h1v2h1v2h1v-3h1v2h1v-3h1v3h1v1h1v-3h1v3h1v-3h1v1h1v2h1v-1h1v1h1v-3h1v2h1v-2h1v1h1v1h1v1h2v-2h1v1h2v1h2v1h1v-1h1v1h1v-1h1v1h9v-4h1v4h8v-3h1v2h1v1h1v-1h1v1h3v-1h1v1h2v-1h4v1h7v-1h3v1h3v-1h1v1h1v-1h1v-2h1v2h1v1h2v-1h1v1h6v-1h1v1h1v-1h3v1h7v-1h1v1h3v-1h1v1h1v-1h1v1h3v-3h1v3h1v-2h1v2h1v-1h1v1h1v-1h2v1h1v-1h1v1h3v-1h5v-1h1v1h1v1h6v-1h1v1h1v-1h2v-1h1v2h1v-1h3v-1h1v1h2v1h5v-1h1v1h1v-1h1v1h2v-2h1v2h9v-3h1v3h1v-1h1v1h1v-2h1v2h1v-1h1v1h3v-1h3v1h2v-3h1v3h2v-1h1v1h2v-1h1v-1h1v2h1v-1h6v-2h1v3h1v-2h1v1h4v1h7v-3h1v2h1v1h3v-1h1v1h4v-1h1v1h5v-1h1v1h1v-2h1v-1h1v1h2v2h1v-1h1v1h1v-1h5v-1h4v2h1v-6h1v6h2v-2h1v2h2v-1h1v1h1v-1h2v1h3v-1h1v-1h1v1h1v1h4v-3h1v3h3v-1h1v1h2v-2h1v1h3v1h1v-1h1v1h2v-1h2v1h2v-1h1v1h1v-1h2v1h1v-1h2v1h1v-1h2v1h1v-1h1v1h1v-1h1v1h1v-2h1v1h2v-1h1v2h3v-1h1v1h2v-1h5v1h3v-1h3v1h1v-1h1v1h1v-1h1v1h2v-1h1v1h1v-1h2v-1h1v1h1v-1h1v2h1v-1h1v1h2v-1h1v1h3v-1h1v1h4v-1h1v1h2v-2h1v2h1v-1h2v1h1v-2h1v2h3v-1h2v1h3v-2h1v2h2v-1h1v1h1v-1h3v-1h1v1h1v1h2v-1h1v1h1v-1h1v1h2v-2h1v2h2v-1h1v1h3v-1h2v1h3v-1h1v1h2v-1h5v1h3v-1h1v1h3v-1h1v-1h1v2h1v-1h1v-1h1v1h2v1h5v-3h1v3h1v-1h2v1h4v-1h1v1h3v-1h1v1h1v-1h2v1h4v-1h1v1h1v-2h2v1h3v1h2v-1h1v1h1v-1h3v-1h1v-1h1v3h1v-1h1v-1h1v-1h1v3h1v-1h2v1h7v-1h1v1h1v-1h2v1h1v-3h1v2h1v-2h1v2h1v-1h1v2h1v-1h1v1h1v-1h1v1h2v-1h3v-1h1v-1h1v2h2v1h2v-1h1v-2h1v2h1v1h2v-2h1v1h1v1h1v-1h2v1h1v-1h1v1h2v-2h1v2h10v-2h1v2h2v-1h2v-2h1v2h2v1h6v-2h1v1h1v-2h1v2h1v1h4v-1h1v1h2v-1h1v1h5v-3h1v-1h2v1h1v-1h1v3h1v-1h2v1h2v-2h1v2h2v1h1v-1h1v1h2v-1h1v1h1v-1h1v1h4v-1h1v1h6v-1h1v-1h1v1h1v1h3v-1h1v1h3v-1h2v-1h1v1h1v1h2v-1h1v1h4v-1h1v-1h1v2h1v-1h1v-4h1v4h1v1h2v-1h1v1h1v-1h3v1h2v-1h2v1h6v-1h3v1h1v-3h1v2h4v1h3v-3h1v2h2v-1h1v1h1v1h1v-1h2v1h1v-1h1v1h3v-2h1v1h1v1h1v-1h1v1h1v-2h1v2h1v-1h2v1h3v-1h1v-2h1v3h1v-3h1v3h4v-1h1v1h5v-1h1v-2h1v1h1v1h1v1h1v-2h1v2h2v-1h2v1h3v-1h2v1h3v-1h3v1h1v-2h1v1h1v1h1v-1h1v-1h1v1h1v-1h1v2h4v-1h5v1h4v-1h1v-2h1v3h2v-1h2v1h2v-1h3v1h2v-1h1v1h8v-1h2v1h3v-1h4v1h6v-1h1v1h1v-3h1v2h2v-1h1v1h3v-2h2v2h5v1h2v-2h2v1h1v-5h1v5h1v1h4v-1h2v1h1v-1h1v1h1v-1h2v1h2v-1h4v1h1v-1h1v1h1v-2h1v2h3v-2h1v1h2v1h5v-1h2v1h3v-3h1v1h3v2h4v-1h1v-1h1v1h1v1h4v-1h1v-1h1v2h1v-2h1v1h1v1h2v-1h1v1h1v-1h1v-2h1v3h1v-2h1v-2h1v3h1v-2h1v2h1v-1h1v2h1v-3h1v2h1v1h4v-1h2v-1h1v2h1v-1h7v1h4v-2h1v1h3v-1h1v2h1v-1h1v-1h1v1h1v1h2v-1h5v1h1v-1h1v1h1v-1h2v1h1v-1h2v1h4v-2h1v1h2v1h1v-1h2v1h1v-1h1v1h2v-1h2v1h3v-1h1v1h1v-1h1v1h2v-1h2v1h1v-1h9v1h3v-1h1v1h2v-2h1v2h2v-1h2v1h2v-1h2v1h1v-1h1v-1h1v2h3v-1h1v1h2v-1h2v1h2v-1h2v1h4v-1h1v1h5v-1h3v1h1v-2h1v1h1v-1h2v2h1v-3h1v2h2v1h1v-1h1v1h2v-1h1v1h1v-2h1v2h2v-1h2v1h5v-1h1v1h2v-1h2v1h1v-1h5v1h1v-1h4v1h3v-1h1v-1h1v-1h1v2h4v-1h1v2h1v-1h1v-3h1v4h1v-1h8v-2h1v3h2v-1h3v1h2v-2h1v2h4v-2h1v2h5v-1h3v1h1v-1h1v1h1v-2h1v2h3v-1h1v-1h1v2h2v-1h1v1h1v-1h1v1h1v-1h1v1h8v-1h1v-1h1v2h5v-1h1v6h-1v-1h-4v1h-3v-1h-8v1h-3v-1h-3v1h-2v-1h-7v3h-1v-3h-1v1h-1v-1h-4v1h-3v-1h-1v1h-1v-1h-1v1h-2v-1h-1v1h-2v2h-1v-2h-2v-1h-2v1h-2v1h-1v-2h-5v1h-1v4h-1v-4h-3v-1h-1v1h-4v1h-1v-1h-3v-1h-1v2h-1v-1h-3v1h-1v-1h-1v-1h-1v2h-1v1h-1v-3h-1v1h-2v-1h-3v1h-2v-1h-3v1h-2v-1h-3v1h-5v2h-1v-3h-1v1h-2v2h-1v-2h-1v1h-1v-1h-6v-1h-3v1h-1v-1h-2v1h-1v-1h-9v1h-1v1h-1v-2h-5v1h-2v-1h-1v1h-2v-1h-2v1h-2v-1h-1v1h-1v-1h-1v1h-1v-1h-2v1h-2v-1h-1v1h-1v-1h-1v1h-2v1h-1v-1h-1v1h-1v-1h-1v-1h-1v1h-1v-1h-1v1h-1v-1h-2v1h-3v1h-1v-2h-1v1h-1v-1h-1v1h-1v-1h-1v2h-1v-2h-4v1h-2v1h-1v-1h-1v-1h-4v1h-1v-1h-1v1h-1v-1h-1v2h-1v-2h-3v1h-2v-1h-2v1h-3v-1h-1v2h-1v-1h-1v1h-1v-1h-1v-1h-2v2h-1v1h-1v-3h-2v1h-1v-1h-2v1h-3v-1h-1v1h-1v-1h-1v3h-1v-1h-1v-2h-4v1h-1v-1h-1v4h-1v-3h-1v-1h-1v4h-1v-2h-1v-1h-2v6h-1v-3h-1v-4h-1v4h-1v-4h-1v1h-1v-1h-1v1h-1v-1h-1v2h-1v-1h-1v-1h-1v1h-1v-1h-1v1h-1v-1h-5v2h-1v-2h-1v1h-3v-1h-1v3h-1v-2h-1v1h-1v-1h-2v-1h-1v1h-1v-1h-6v2h-1v-2h-1v3h-1v-1h-1v-1h-1v-1h-1v1h-2v-1h-4v2h-1v-2h-3v1h-1v1h-1v-1h-2v-1h-1v1h-2v-1h-1v1h-4v2h-1v-2h-1v2h-1v-3h-3v1h-1v-1h-3v1h-1v-1h-1v1h-3v-1h-1v1h-1v-1h-2v1h-1v-1h-6v1h-3v-1h-1v1h-2v-1h-1v1h-1v-1h-1v1h-1v-1h-3v1h-1v-1h-1v1h-1v-1h-5v1h-2v-1h-2v1h-1v-1h-1v1h-4v2h-1v-2h-1v-1h-4v1h-2v-1h-1v1h-2v-1h-3v1h-1v-1h-1v1h-2v-1h-1v1h-2v-1h-2v1h-2v1h-1v-2h-3v1h-1v1h-1v-2h-5v1h-3v1h-1v-1h-2v2h-1v2h-1v-4h-1v-1h-2v1h-3v-1h-4v2h-1v-1h-1v1h-1v-2h-1v1h-4v-1h-1v1h-1v1h-1v-1h-1v-1h-1v2h-1v-2h-2v1h-2v-1h-2v1h-2v-1h-2v1h-1v-1h-2v1h-1v-1h-5v1h-1v1h-1v-1h-3v-1h-1v1h-4v-1h-5v1h-1v-1h-1v1h-5v-1h-1v1h-1v-1h-1v1h-1v1h-1v-1h-1v-1h-1v1h-2v-1h-6v1h-1v-1h-2v1h-3v-1h-3v2h-1v-1h-2v-1h-1v1h-2v-1h-2v1h-1v-1h-3v1h-1v-1h-1v1h-2v1h-1v-2h-1v1h-4v-1h-3v1h-1v-1h-2v4h-1v-1h-1v1h-1v-2h-2v2h-1v-2h-1v5h-1v-5h-1v-2h-2v1h-1v-1h-1v1h-1v-1h-1v1h-1v-1h-1v1h-1v-1h-5v1h-6v-1h-2v1h-1v-1h-1v1h-1v-1h-2v3h-1v-1h-1v-2h-9v1h-1v-1h-1v1h-1v-1h-1v1h-1v-1h-1v1h-1v-1h-2v1h-1v-1h-1v1h-1v2h-1v-2h-1v-1h-2v2h-1v-1h-1v1h-1v-2h-1v1h-2v1h-1v-1h-5v-1h-2v1h-1v-1h-1v1h-2v-1h-1v2h-1v1h-1v-2h-1v-1h-3v1h-1v-1h-9v1h-3v-1h-1v2h-1v-1h-1v-1h-2v1h-1v-1h-6v1h-1v-1h-1v2h-1v-1h-3v1h-1v-2h-1v2h-1v-1h-1v-1h-1v1h-1v1h-2v-2h-2v1h-1v-1h-5v2h-3v-2h-1v2h-1v-2h-2v1h-1v-1h-1v1h-1v-1h-2v2h-1v-2h-4v1h-3v-1h-2v1h-3v-1h-2v1h-3v-1h-3v1h-2v4h-1v-4h-1v-1h-9v1h-1v-1h-1v3h-1v-3h-2v1h-7v-1h-1v1h-1v1h-1v-1h-2v-1h-1v1h-1v-1h-5v1h-1v-1h-1v2h-1v-1h-1v1h-1v-2h-4v1h-1v-1h-2v1h-1v-1h-2v1h-2v-1h-1v1h-1v1h-1v-2h-4v1h-2v-1h-1v1h-4v-1h-2v1h-1v-1h-2v1h-1v-1h-2v1h-2v1h-1v-1h-2v-1h-4v1h-2v-1h-1v2h-2v1h-1v-1h-1v-2h-2v1h-1v-1h-2v1h-1v-1h-1v1h-1v4h-1v-4h-1v-1h-1v1h-1v-1h-3v1h-1v-1h-3v2h-1v-2h-1v1h-1v-1h-1v1h-1v-1h-3v1h-2v-1h-2v1h-2v5h-1v-5h-1v-1h-1v1h-1v-1h-3v1h-1v-1h-1v1h-1v-1h-1v1h-3v-1h-2v1h-1v-1h-1v1h-2v4h-1v-4h-4v1h-1v-1h-1v2h-1v-2h-3v1h-1v-2h-2v2h-2v-1h-3v-1h-3v1h-1v-1h-1v1h-3v-1h-3v1h-6v-1h-7v1h-2v-1h-1v1h-1v-1h-2v1h-6v2h-1v-1h-1v-2h-1v1h-1v-1h-2v2h-1v-1h-3v-1h-1v1h-4v-1h-6v1h-3v3h-1v-3h-1v-1h-5v1h-1v-1h-7v1h-1v-1h-1v1h-1v-1h-2v1h-4v1h-1v-2h-1v1h-6v-1h-2v1h-1v-1h-2v1h-1v1h-1v-1h-2v-1h-1v1h-2v-1h-1v1h-2v-1h-5v1h-1v-1h-1v3h-1v-2h-1v-1h-2v1h-1v-1h-3v1h-2v-1h-4v1h-1v-1h-1v1h-1v-1h-6v1h-1v1h-1v-1h-1v-1h-3v1h-1v-1h-7v1h-1v-1h-1v1h-2v-1h-1v1h-1v-1h-1v2h-2v-2h-2v1h-1v-1h-1v1h-1v-1h-2v1h-1v-1h-3v1h-1v-1h-4v1h-1v-1h-1v1h-2v-1h-1v3h-1v-3h-1v1h-1v1h-1v-1h-1v-1h-4v3h-1v-3h-5v2h-1v-2h-5v1h-1v-1h-2v1h-2v1h-1v1h-2v-1h-2v1h-1v1h-1v-1h-1v1h-1v-2h-4v-2h-1v4h-2v-2h-1v3h-3v-3h-1v-1h-1v2h-1v2h-1v-1h-1v-1h-1v-1h-3v6h-1v-6h-2v4h-1v1h-1v1h-1v-3h-1v3h-1v-3h-1v-1h-1v6h-1v-5h-1v1h-1v2h-1v-1h-1v1h-1v-5h-1v-2h-1v4h-1v-1h-1v-1h-1v1h-1v-2h-1z"/>
<path d="M278 517h1v-1h3v1h2v-3h1v3h2v-1h2v1h2v-1h1v-1h2v1h1v1h1v-3h1v3h1v-1h1v-1h1v2h1v-3h1v2h2v-1h1v1h1v1h1v-1h1v-1h1v-1h1v1h1v-1h1v1h2v-1h6v1h1v1h1v1h2v-1h2v1h2v-1h1v1h3v-1h1v1h1v-1h2v-1h1v1h1v1h1v-1h1v-1h1v1h2v1h1v-1h3v1h2v-1h1v1h2v-1h1v1h3v-1h1v1h1v-1h1v1h1v-1h2v1h1v-1h1v1h1v-1h1v1h3v-2h1v-1h1v1h1v-1h2v2h3v-2h1v3h1v-4h1v3h1v1h2v-1h3v1h1v-2h2v2h2v-2h1v1h1v1h4v-1h1v1h1v-1h2v-1h1v2h8v-1h1v1h2v-1h3v1h1v-1h1v1h1v-1h1v-1h1v2h1v-1h1v1h1v-1h1v1h3v-2h1v1h2v1h3v-1h2v1h1v-1h1v1h1v-1h3v1h2v-3h1v2h1v1h1v-1h1v1h1v-1h2v1h1v-2h1v2h2v-2h1v1h1v1h2v-1h1v1h3v-1h1v1h1v-1h2v1h1v-2h1v1h1v-2h1v2h1v1h1v-1h1v-1h1v2h1v-1h1v1h2v-1h1v1h1v-1h1v1h3v-1h1v1h2v-1h2v1h2v-1h2v1h2v-1h2v1h1v-6h1v6h4v-1h1v-2h1v2h1v1h3v-1h1v1h4v-1h1v1h2v-1h1v-1h1v1h1v1h2v-1h1v1h2v-2h1v2h1v-1h1v-1h1v1h1v1h3v-1h2v1h1v-1h1v1h1v-1h2v1h1v-1h2v1h3v-1h1v1h1v-2h1v1h1v1h1v-1h3v1h2v-1h1v1h4v-1h1v1h1v-1h2v1h1v-1h1v1h3v-1h1v1h2v-1h1v1h1v-1h1v1h1v-1h3v1h2v-1h2v1h1v-1h1v1h1v-1h2v-1h1v1h2v1h1v-1h1v-1h1v1h1v-1h1v2h3v-1h7v-1h1v2h1v-1h2v1h1v-1h1v-2h1v2h1v1h10v-1h1v1h2v-1h4v1h3v-1h1v-1h1v1h1v1h1v-1h2v1h2v-1h1v1h3v-1h2v-2h1v1h1v2h2v-1h2v1h1v-1h4v1h1v-1h2v1h1v-1h3v1h3v-1h1v1h3v-1h1v1h4v-1h1v1h2v-3h1v2h1v1h2v-1h1v1h5v-1h3v1h6v-3h1v2h2v1h3v-1h2v1h6v-1h2v1h1v-1h3v1h1v-1h1v1h1v-1h3v1h1v-1h1v1h3v-1h1v1h1v-2h1v1h1v-1h1v2h3v-1h1v1h1v-1h1v1h1v-1h1v1h2v-1h1v1h1v-4h1v3h1v-2h1v3h5v-1h1v1h1v-1h1v1h2v-1h1v1h1v-1h1v1h1v-2h2v1h1v1h2v-1h1v1h4v-1h1v1h2v-1h1v1h5v-1h2v1h1v-1h2v1h1v-1h1v1h1v-1h1v1h1v-1h1v1h1v-1h2v-1h1v1h2v1h6v-1h2v1h1v-1h2v1h1v-1h1v-1h1v2h1v-1h3v1h4v-1h1v1h1v-1h1v1h7v-1h3v1h5v-1h1v1h3v-1h2v1h2v-3h1v3h1v-1h1v1h3v-2h1v1h4v1h1v-1h3v1h1v-2h1v1h3v-1h1v2h2v-2h1v1h2v1h1v-1h3v1h1v-1h1v-1h1v2h2v-1h2v1h4v-1h1v1h1v-1h1v1h8v-1h1v1h3v-1h1v-1h1v1h1v1h6v-1h1v-1h1v1h1v1h1v-1h1v-2h1v2h1v-2h1v3h1v-2h1v1h1v-2h1v1h1v-1h1v2h1v1h2v-2h1v1h1v1h2v-3h1v2h1v1h2v-1h1v1h5v-1h1v1h3v-1h2v-1h1v2h2v-1h3v1h1v-1h3v-5h1v5h1v-1h1v2h2v-1h2v1h1v-1h4v1h2v-1h1v1h3v-1h1v1h4v-1h2v1h1v-1h1v-1h1v1h1v1h1v-1h1v1h7v-1h1v1h2v-1h2v1h1v-1h4v1h1v-1h1v1h2v-2h3v1h1v-1h1v1h1v-1h1v1h1v-2h1v2h1v1h6v-1h1v1h1v-2h1v1h1v1h5v-1h1v1h16v-1h1v-1h1v1h1v1h2v-1h1v1h6v-2h1v2h1v-1h2v1h2v-1h3v1h1v-1h4v-1h1v1h1v-1h3v1h4v-2h1v1h2v2h1v-1h1v1h2v-2h1v2h1v-2h1v2h1v-3h1v3h1v-2h2v-1h1v2h1v1h2v-2h1v-1h2v3h2v-1h1v-1h1v1h1v-1h1v2h1v-1h1v-2h1v3h1v-3h1v-5h1v7h3v-1h1v1h3v1h1v-2h2v-1h1v2h1v1h3v-1h1v1h1v-2h2v-1h2v3h1v-3h3v2h1v1h1v-2h2v-1h1v-4h1v5h1v2h1v-2h1v1h1v-2h4v2h2v1h1v-3h1v2h2v-2h1v2h1v-2h1v2h1v-7h1v7h1v-2h1v2h1v-1h1v2h1v-3h2v2h2v1h2v-1h1v-1h4v1h1v1h1v-1h1v1h1v-1h2v-2h1v2h2v-1h1v1h1v-1h1v2h1v-2h1v-1h2v2h3v1h1v-3h1v2h1v-1h2v2h1v-2h1v1h3v-2h1v1h1v-1h3v2h1v1h2v-2h2v1h2v-2h2v1h3v2h1v-2h1v1h2v-2h1v2h1v1h1v-1h2v1h2v-1h3v-1h1v1h2v-1h1v1h1v-1h1v2h4v-1h4v1h2v-1h1v-1h1v1h3v1h5v-1h1v1h1v-1h2v1h2v-1h2v-2h1v2h6v1h2v-1h1v1h1v-1h1v-6h1v6h1v1h1v-1h1v1h1v-1h2v1h2v-1h3v-2h1v2h2v-1h1v2h5v-1h1v1h1v-1h1v1h1v-1h2v-2h1v2h1v1h2v-1h1v-1h1v-12h1v12h3v1h1v1h1v-1h1v1h3v-1h1v1h1v-1h1v-1h1v2h1v-1h1v1h1v-1h2v-1h1v2h1v-1h4v1h5v-1h1v1h1v-1h1v1h1v-1h1v1h2v-1h1v-1h2v2h1v-1h1v1h1v-1h3v-2h1v2h1v-1h1v1h1v1h3v-2h1v2h1v-1h1v1h2v-1h1v-2h1v2h1v1h1v-1h1v-1h1v1h1v-1h1v2h1v-1h1v-1h1v2h1v4h-2v3h-1v-1h-1v1h-1v-3h-2v2h-2v-1h-1v-1h-1v1h-1v-1h-1v1h-1v-1h-2v1h-1v-1h-1v1h-1v-1h-2v1h-1v1h-1v-1h-1v-1h-1v1h-4v-1h-1v2h-1v-1h-1v1h-1v-2h-5v2h-1v-2h-1v1h-1v-1h-1v1h-3v-1h-1v1h-2v1h-1v-1h-2v1h-1v-1h-1v2h-1v-3h-1v2h-2v-1h-2v-1h-4v1h-5v2h-1v8h-1v-8h-1v-2h-1v-1h-1v1h-1v1h-1v-1h-1v-1h-1v1h-1v-1h-1v1h-1v-1h-6v2h-1v-1h-1v-1h-1v1h-1v1h-1v1h-1v-2h-2v-1h-1v2h-1v-1h-2v-1h-3v1h-1v4h-1v-4h-1v-1h-5v1h-1v1h-1v-2h-1v2h-2v-1h-3v-1h-2v1h-1v-1h-1v2h-1v-2h-2v1h-1v-1h-3v2h-1v-2h-1v3h-1v-2h-1v-1h-1v1h-1v-1h-4v1h-1v-1h-1v1h-2v-1h-1v1h-1v-1h-1v1h-3v-1h-1v1h-1v-1h-1v1h-4v1h-2v-2h-2v1h-1v1h-4v-1h-1v1h-1v-1h-2v1h-2v-1h-1v2h-1v-3h-1v1h-1v-1h-1v3h-1v-1h-1v1h-1v-2h-1v2h-1v-2h-1v2h-1v-2h-1v1h-2v-2h-1v3h-1v-2h-1v2h-1v-3h-1v3h-1v-3h-1v2h-1v1h-2v-1h-1v-1h-1v1h-1v1h-1v-2h-2v2h-1v-2h-3v-1h-3v2h-1v-1h-2v-1h-1v1h-1v1h-1v-1h-2v-1h-1v1h-1v2h-1v-1h-1v1h-2v-3h-1v1h-1v1h-1v2h-1v-3h-2v-1h-1v1h-2v1h-1v1h-1v-3h-1v3h-1v-1h-1v-1h-1v2h-3v-1h-1v1h-3v6h-1v-7h-1v-1h-2v2h-3v-2h-1v2h-1v-3h-2v3h-2v-1h-1v-2h-4v2h-1v-2h-1v3h-1v-3h-1v3h-1v-1h-1v-1h-1v-1h-1v3h-1v-2h-1v-1h-1v2h-1v-1h-1v3h-1v-3h-1v1h-1v-1h-1v-1h-1v1h-1v1h-1v-2h-1v1h-2v1h-2v-1h-1v2h-1v-1h-1v-2h-3v1h-1v-1h-2v1h-1v1h-1v-1h-1v-1h-5v1h-2v-1h-1v1h-1v2h-1v-2h-1v1h-1v-2h-1v2h-2v-1h-1v1h-1v-1h-7v-1h-1v1h-3v-1h-1v1h-1v1h-1v-2h-1v1h-2v-1h-2v1h-1v-1h-1v1h-1v3h-1v-3h-1v-1h-2v1h-1v-1h-1v1h-5v-1h-1v1h-1v-1h-5v1h-1v1h-1v-1h-1v-1h-1v1h-1v-1h-5v1h-2v-1h-2v1h-1v-1h-4v1h-3v1h-1v-1h-1v-1h-1v1h-2v-1h-5v1h-2v-1h-1v1h-1v-1h-1v1h-1v-1h-2v1h-3v-1h-8v1h-1v-1h-1v3h-1v-1h-3v-1h-2v1h-1v-2h-1v1h-2v-1h-3v1h-1v-1h-3v1h-3v1h-1v-2h-1v1h-1v1h-1v-2h-1v1h-3v1h-1v-2h-5v1h-2v-1h-1v1h-1v1h-1v-2h-2v1h-1v-1h-3v1h-1v-1h-2v1h-1v-1h-1v2h-1v-1h-1v-1h-1v1h-1v2h-1v-2h-1v-1h-3v1h-4v1h-1v1h-1v-2h-1v1h-1v-1h-1v-1h-1v2h-1v-1h-4v1h-1v-2h-1v1h-2v-1h-3v1h-1v-1h-1v1h-2v-1h-5v1h-3v-1h-1v1h-2v-1h-1v1h-1v-1h-2v2h-1v-1h-1v-1h-2v1h-3v-1h-1v1h-3v-1h-1v1h-1v-1h-2v1h-3v-1h-3v1h-1v-1h-1v2h-1v-2h-1v1h-2v-1h-1v1h-1v-1h-5v1h-1v-1h-2v1h-1v-1h-11v1h-1v-1h-1v1h-1v-1h-2v1h-4v-1h-1v2h-1v-1h-2v-1h-1v1h-1v-1h-4v1h-1v-1h-2v1h-1v1h-1v1h-2v-2h-1v1h-1v-1h-1v-1h-5v2h-1v-1h-1v-1h-1v1h-2v-1h-1v3h-1v-2h-2v1h-1v-2h-1v1h-6v-1h-1v3h-1v-3h-5v1h-1v1h-1v-1h-1v-1h-2v1h-1v-1h-1v1h-1v-1h-1v1h-1v-1h-3v1h-6v-1h-14v1h-1v1h-1v-2h-1v1h-1v-1h-3v1h-1v-1h-2v2h-2v-2h-1v1h-1v2h-2v-2h-1v-1h-1v1h-1v-1h-4v2h-1v-2h-2v1h-3v-1h-1v1h-1v-1h-1v1h-1v-1h-3v1h-2v-1h-1v1h-1v-1h-1v1h-3v-1h-3v3h-1v-2h-1v3h-1v-3h-2v-1h-6v1h-3v-1h-3v1h-2v-1h-9v1h-2v-1h-3v1h-1v-1h-1v1h-1v-1h-7v1h-1v-1h-1v2h-1v-1h-1v-1h-1v2h-1v-2h-1v1h-3v-1h-5v1h-2v-1h-4v2h-1v-1h-1v2h-1v-2h-1v1h-1v-2h-1v1h-2v-1h-1v1h-1v-1h-2v1h-1v-1h-2v1h-1v-1h-5v1h-1v-1h-3v2h-1v1h-1v-3h-2v1h-1v-1h-1v1h-1v1h-1v-1h-4v-1h-1v2h-1v-2h-2v1h-1v-1h-1v2h-1v1h-1v-3h-1v1h-1v-1h-1v1h-2v1h-1v-1h-1v1h-1v-2h-1v1h-3v-1h-3v1h-1v-1h-1v1h-2v-1h-3v1h-1v-1h-1v1h-2v-1h-1v1h-1v2h-1v-3h-2v1h-1v-1h-1v1h-3v-1h-2v1h-2v1h-1v-2h-1v1h-1v-1h-2v1h-1v-1h-2v2h-1v-1h-1v-1h-1v1h-1v-1h-2v1h-3v-1h-1v1h-2v-1h-4v1h-1v-1h-3v1h-2v-1h-1v1h-1v-1h-3v1h-1v-1h-14v1h-2v1h-1v-1h-3v1h-1v-1h-3v2h-1v-3h-5v1h-2v-1h-3v1h-2v-1h-2v1h-1v-1h-3v1h-6v-1h-1v3h-1v-2h-1v-1h-1v1h-1v-1h-1v1h-1v-1h-6v1h-1v1h-1v-2h-1v1h-1v-1h-1v1h-1v1h-1v-1h-1v-1h-2v1h-1v-1h-1v1h-1v1h-1v-1h-2v-1h-2v1h-1v-1h-1v1h-5v-1h-1v2h-1v-1h-2v2h-1v-2h-2v-1h-4v1h-4v1h-1v-1h-2v-1h-5v1h-1v-1h-1v1h-1v-1h-1v1h-2v-1h-3v2h-2v-2h-2v1h-2v-1h-1v1h-5v2h-1v-2h-1v-1h-5v2h-1v-1h-1v1h-1v1h-2v-2h-2v1h-2v-1h-1v2h-1v-1h-1v-1h-2v-1h-3v1h-2v-1h-1v1h-1v-1h-3v1h-1v-1h-2v1h-2v-1h-4v1h-1v-1h-1v1h-2v-1h-3v1h-1v-1h-1v1h-2v1h-1v-1h-1v-1h-3v2h-1v-1h-1v-1h-3v1h-2v-1h-1v1h-2v-1h-1v1h-1v2h-1v-2h-1v2h-3v-1h-1v1h-1v-2h-1v-1h-1v1h-3v-1h-1v1h-2v2h-1v-3h-2v1h-1v-1h-1v2h-1v-2h-1v1h-2v-1h-1v1h-3v-1h-2v2h-1v-2h-2v2h-2v-2h-2v3h-1v-1h-2v-1h-2v-1h-1z"/>
<path d="M278 547h1v-1h1v1h4v-1h2v1h1v-1h3v1h3v-1h1v1h1v-1h3v1h1v-1h1v-2h1v1h1v1h2v1h1v-1h1v1h2v-3h1v3h3v-2h1v1h1v1h1v-1h1v-1h1v2h3v-1h1v1h1v-1h2v1h7v-1h1v1h2v-3h1v2h2v-2h1v3h2v-1h1v1h1v-1h1v1h1v-1h3v1h1v-2h1v2h2v-1h2v1h1v-1h3v1h2v-1h1v1h1v-2h1v1h1v1h1v-1h3v-1h1v2h2v-1h1v1h6v-2h1v1h6v1h5v-2h1v2h11v-1h1v1h1v-2h1v1h2v1h1v-1h1v1h1v-2h1v1h2v1h8v-1h1v1h1v-1h1v-1h1v1h1v-2h1v2h1v1h1v-3h1v2h2v1h1v-1h1v1h1v-1h1v1h1v-1h3v1h4v-1h1v1h1v-1h1v1h3v-1h1v1h1v-1h1v-1h1v2h1v-2h1v1h2v1h1v-1h1v-1h1v2h2v-1h1v1h4v-1h2v1h1v-1h1v1h1v-1h1v1h1v-1h1v-1h1v1h2v1h2v-1h1v1h4v-1h1v1h1v-2h1v1h1v1h1v-1h1v1h1v-1h5v1h5v-3h1v2h1v-1h1v1h1v1h1v-1h2v1h1v-1h1v1h1v-1h1v1h1v-1h3v1h3v-1h1v-1h1v1h1v1h1v-1h1v1h1v-1h1v1h2v-1h1v-1h1v1h2v1h3v-1h1v1h1v-1h1v-1h1v2h2v-2h1v1h1v1h4v-2h1v-1h1v3h3v-1h1v1h1v-1h1v1h3v-1h2v1h1v-1h2v1h2v-1h1v-2h1v-3h1v6h2v-1h1v-2h1v3h1v-1h1v1h1v-1h1v1h1v-1h1v1h3v-1h1v1h1v-1h1v1h1v-1h1v1h2v-1h1v-1h1v2h1v-2h1v1h1v1h1v-1h1v1h1v-1h2v1h1v-1h5v1h2v-1h1v1h3v-1h2v1h1v-2h1v1h1v-1h1v-1h1v-1h3v1h1v2h1v-1h1v-1h1v2h2v-5h1v2h1v-2h1v3h1v-1h1v-1h1v3h2v1h1v-4h1v2h1v1h1v-2h1v1h1v-2h1v4h1v-2h2v1h1v-1h1v-8h1v9h1v-1h1v2h1v-2h1v2h1v-4h3v2h2v2h1v-3h1v1h1v-1h1v1h5v2h1v-1h1v-4h1v2h3v1h1v1h1v-1h1v1h1v1h1v-1h1v1h1v-1h1v1h1v-2h1v3h1v-2h3v2h1v-4h2v3h5v-1h1v-2h1v3h1v-1h1v1h6v-1h1v2h1v-2h1v1h1v-1h1v1h2v-1h1v-2h2v-7h1v8h2v-2h1v4h1v-5h1v2h3v3h1v1h1v-7h2v2h1v-2h1v3h1v1h1v-3h1v1h2v5h1v-5h1v3h1v-3h1v5h1v-6h1v4h3v-1h1v-3h1v1h1v-1h2v5h1v-2h1v2h2v-5h1v4h1v1h1v-5h1v1h1v3h1v-5h1v3h1v-3h2v1h1v4h1v-3h1v1h1v2h3v1h1v-3h1v3h1v1h1v-4h1v-7h1v5h1v-1h1v4h1v1h1v-1h1v2h1v-1h1v-2h1v-1h1v5h1v-4h1v-2h1v5h1v1h4v-1h1v-4h1v-1h1v2h1v3h1v-1h1v-2h1v-2h1v5h1v-1h1v-3h1v4h4v-2h1v-4h2v2h1v-2h1v4h1v-3h1v-1h2v1h1v5h1v-1h1v-3h1v4h1v-5h1v6h1v-2h1v2h1v-3h2v3h1v-2h1v1h1v-2h1v1h1v2h1v-2h1v1h2v1h3v-1h1v1h1v-1h1v1h1v-1h1v1h2v-1h1v-1h1v-1h1v1h1v1h2v-5h1v4h1v1h1v1h2v-1h1v-2h1v2h2v1h1v-4h2v2h1v-2h1v-1h1v2h1v1h1v-1h1v-2h3v2h1v-2h1v1h1v2h3v-1h3v-1h1v3h1v-3h1v4h1v-4h1v3h3v1h1v-2h2v-3h1v1h2v3h1v-1h1v2h1v-3h1v2h2v-1h1v2h1v-4h2v-1h1v4h1v-2h1v-1h2v-1h2v1h2v2h2v2h1v-3h1v-1h1v4h1v-1h1v1h1v-1h1v1h1v-2h1v1h1v-1h1v1h1v-1h1v2h1v-1h1v-1h1v1h1v1h1v-3h1v3h1v-3h1v1h1v-3h2v3h1v-1h1v1h2v-1h1v-1h2v4h1v-1h1v1h1v-6h1v1h1v1h1v2h1v-2h1v3h1v1h1v-2h2v-2h1v2h1v-3h1v1h1v3h1v-7h1v6h1v-1h1v1h1v-1h1v3h1v-3h1v3h1v-1h1v-1h1v-1h1v3h2v-1h1v1h1v-1h2v-6h1v6h1v1h3v-1h5v1h1v-1h1v1h6v-1h1v-2h1v2h1v-1h1v2h2v-1h2v1h3v-1h4v1h2v-1h2v-1h1v2h3v-1h1v1h1v-1h1v1h3v-1h1v-1h1v1h4v1h3v-1h1v1h1v-1h2v1h3v-1h4v1h1v-1h1v1h1v-1h2v-8h1v7h1v2h1v-2h1v2h1v-1h1v1h3v-1h3v1h3v-2h2v1h1v-1h2v1h1v1h1v-1h2v1h1v-1h1v-2h2v2h1v-3h1v2h1v2h1v-4h1v3h1v-3h1v1h1v1h1v-2h5v1h1v1h1v-2h1v3h3v1h2v-4h2v4h1v-1h1v-3h1v2h1v-1h1v2h4v-3h2v3h1v-1h2v-2h1v3h1v-1h1v-1h1v3h1v-1h1v-3h1v4h1v-1h1v-2h1v2h1v1h1v-2h1v2h2v-1h1v1h1v-1h1v1h1v-2h1v2h1v-1h2v1h1v-1h2v1h4v-1h1v-1h1v2h2v-1h1v1h4v-1h1v-1h1v2h1v-1h1v1h4v-2h1v1h2v1h2v-1h1v1h2v-1h2v1h3v-1h3v1h4v-2h1v1h4v-1h1v-1h1v2h1v1h1v-1h3v1h3v-1h4v-1h1v1h1v-1h1v2h1v-1h1v-1h1v2h2v-3h1v2h1v1h4v-1h2v1h4v-1h4v1h1v-1h2v1h1v-3h1v2h3v1h1v-2h1v1h1v1h3v-1h1v-1h1v1h4v1h1v-1h4v-1h1v1h1v-1h1v1h2v1h4v-1h6v1h3v-1h1v1h4v-1h1v1h12v-1h3v1h2v-1h1v1h2v-1h3v1h1v-1h1v1h4v-1h1v1h1v-1h2v1h2v-1h1v-2h1v2h1v1h1v-1h1v1h1v-1h1v1h3v-1h2v1h1v-1h1v-1h1v2h2v-1h1v-7h1v7h4v-1h1v1h1v-1h1v-1h1v3h2v-2h1v1h1v1h3v-1h1v1h4v-1h1v-1h1v2h1v-3h1v1h1v1h2v1h2v-1h1v-1h1v2h1v-3h1v1h2v1h1v-2h1v3h2v-3h1v1h1v1h1v-2h1v2h1v-1h1v2h1v-2h1v1h1v-1h3v-1h1v1h1v-1h2v2h3v-1h1v2h1v-2h1v1h1v1h1v-1h2v-1h1v2h1v4h-1v1h-3v-1h-1v2h-1v-1h-1v-1h-1v2h-3v1h-1v-1h-1v1h-2v-1h-1v-1h-1v2h-1v-1h-2v-1h-2v2h-1v-2h-2v1h-1v-2h-1v1h-1v-1h-1v1h-1v2h-2v-1h-1v1h-2v-1h-2v1h-1v-2h-1v-1h-1v1h-3v1h-1v-1h-1v1h-1v-1h-1v1h-1v-2h-1v1h-2v-1h-1v1h-1v-1h-3v1h-4v-1h-1v1h-3v-1h-1v1h-1v1h-1v6h-1v-6h-1v-1h-1v-1h-1v1h-2v-1h-1v1h-1v-1h-1v1h-1v-1h-2v1h-1v-1h-1v1h-3v-1h-5v1h-3v-1h-1v2h-1v-2h-4v1h-1v-1h-1v1h-2v-1h-2v1h-2v-1h-1v1h-1v1h-1v-2h-1v1h-1v-1h-7v1h-2v-1h-1v1h-1v-1h-3v1h-2v-1h-2v1h-1v-1h-1v1h-1v-1h-10v1h-2v1h-1v-1h-1v-1h-2v1h-1v-1h-1v1h-1v-1h-4v1h-1v-1h-4v1h-2v-1h-1v1h-1v-1h-1v1h-1v-1h-1v1h-1v1h-1v-2h-2v1h-1v-1h-1v1h-1v-1h-2v1h-1v-1h-4v1h-1v-1h-1v1h-1v-1h-4v1h-1v1h-2v-2h-1v1h-1v-1h-1v1h-1v-1h-1v1h-1v-1h-3v1h-1v-1h-1v1h-2v-1h-1v1h-1v2h-1v-1h-2v-1h-1v-1h-1v2h-1v-1h-1v-1h-2v1h-3v-1h-1v1h-1v-1h-6v1h-3v-1h-1v2h-1v-2h-2v1h-4v-1h-2v2h-1v-1h-1v-1h-4v1h-2v1h-1v-1h-1v-1h-1v1h-1v-1h-9v1h-1v-1h-1v1h-4v1h-1v2h-1v-2h-1v-2h-1v3h-1v-3h-2v3h-1v-2h-1v-1h-1v4h-1v-3h-3v2h-1v-1h-1v-1h-1v2h-1v1h-1v-2h-1v2h-1v-2h-1v-1h-1v3h-1v-3h-2v1h-3v2h-1v-1h-1v-1h-2v2h-1v-3h-1v1h-1v-1h-1v2h-1v1h-1v-2h-1v1h-1v1h-1v-2h-2v2h-3v-3h-1v2h-1v1h-1v-1h-1v-2h-2v-1h-1v2h-1v-2h-1v1h-1v1h-1v-2h-1v1h-1v-1h-1v3h-1v-2h-4v-1h-2v1h-1v-1h-7v3h-1v-3h-1v3h-1v10h-1v-10h-1v-3h-1v1h-1v-1h-3v1h-5v1h-1v-2h-3v1h-1v-1h-1v1h-2v-1h-3v2h-1v-2h-1v1h-1v-1h-3v2h-1v-1h-3v-1h-2v1h-2v-1h-1v1h-1v-1h-1v3h-1v-2h-1v1h-1v-1h-1v-1h-3v1h-1v-1h-1v1h-1v-1h-5v1h-1v-1h-5v1h-1v2h-1v-1h-1v-2h-1v1h-4v-1h-1v1h-1v1h-1v7h-1v-7h-1v-1h-1v-1h-4v1h-5v-1h-1v2h-1v1h-2v-1h-1v6h-1v-4h-3v-3h-1v-1h-1v2h-1v-2h-1v2h-1v-1h-3v-1h-1v3h-1v4h-1v-5h-1v-1h-2v1h-1v-1h-1v1h-1v2h-1v-2h-2v1h-1v2h-1v-2h-1v2h-1v-2h-1v-2h-1v1h-1v-2h-1v1h-1v-1h-2v4h-2v-3h-2v-1h-1v1h-1v1h-1v2h-1v-4h-1v4h-1v-4h-1v2h-1v-1h-2v1h-1v-1h-1v1h-1v2h-1v1h-2v-1h-1v-1h-1v-2h-1v4h-1v-2h-2v2h-1v-5h-1v1h-2v1h-1v-1h-3v4h-1v-1h-1v-3h-1v3h-1v-2h-1v1h-1v-3h-1v1h-1v2h-1v-2h-2v-1h-1v3h-1v-3h-1v1h-1v4h-1v-1h-1v-4h-1v1h-1v1h-1v-2h-1v4h-2v-2h-3v1h-1v-1h-2v1h-2v1h-1v-4h-1v3h-1v-1h-1v-2h-3v3h-1v-2h-2v-1h-1v1h-2v5h-1v-4h-1v-1h-1v1h-1v-1h-1v-1h-1v2h-1v-2h-2v1h-1v-1h-1v3h-1v-3h-6v1h-2v-1h-1v1h-1v1h-1v-1h-1v-1h-2v3h-1v-3h-1v2h-1v-1h-2v3h-1v-1h-1v-2h-1v2h-1v-1h-1v5h-1v-3h-1v3h-1v-4h-1v1h-1v5h-1v-2h-1v-3h-1v3h-1v-3h-1v1h-1v-5h-1v6h-1v-5h-1v2h-1v1h-1v1h-2v2h-1v-4h-1v3h-1v-4h-1v3h-1v-4h-2v1h-1v-2h-1v1h-1v-1h-1v4h-3v-2h-1v1h-1v-1h-1v1h-1v4h-1v-5h-1v5h-1v-4h-1v3h-1v-3h-1v11h-1v-10h-2v1h-1v-1h-1v3h-1v-3h-1v-3h-1v-1h-1v1h-1v3h-2v1h-1v1h-1v-3h-1v2h-2v-3h-1v5h-1v-6h-1v4h-1v-2h-1v2h-1v-4h-4v1h-1v1h-1v-1h-1v5h-1v-5h-2v3h-3v-4h-1v2h-2v-2h-1v-1h-1v4h-1v1h-1v2h-2v-6h-1v6h-1v-1h-2v-2h-1v2h-1v-4h-1v4h-1v-2h-1v2h-1v-4h-2v4h-1v-1h-1v-3h-1v6h-1v-4h-3v-1h-1v-1h-2v-1h-2v-1h-1v1h-4v-1h-1v1h-1v-1h-1v2h-1v-2h-1v3h-2v-2h-1v1h-1v2h-2v-4h-1v4h-1v-2h-1v-1h-1v2h-1v1h-1v-3h-2v1h-1v-1h-1v-1h-2v3h-1v-1h-1v-1h-1v2h-2v-1h-1v2h-1v-1h-2v-2h-1v2h-2v-1h-1v7h-1v-7h-1v2h-1v1h-2v1h-1v-3h-2v-2h-2v3h-1v-3h-1v3h-2v-1h-1v1h-1v-1h-1v1h-1v3h-1v-3h-1v-4h-1v1h-1v2h-1v-2h-3v1h-1v4h-2v-5h-1v1h-1v1h-1v-2h-1v4h-1v-1h-1v-2h-1v-1h-1v2h-1v3h-1v-5h-1v1h-2v-1h-1v2h-2v2h-2v-4h-1v1h-1v1h-2v-1h-1v-2h-1v1h-1v-1h-3v1h-3v-1h-2v1h-2v-1h-1v1h-8v-1h-1v1h-1v-1h-1v1h-3v-1h-1v1h-1v-1h-7v2h-1v7h-1v-7h-2v-1h-1v-1h-1v1h-1v-1h-1v2h-1v6h-1v-6h-1v-2h-3v1h-1v-1h-2v1h-1v-1h-4v2h-1v-2h-1v3h-1v-3h-2v1h-1v-1h-3v1h-1v-1h-2v1h-3v-1h-3v1h-1v-1h-3v1h-2v2h-1v-3h-4v1h-1v-1h-1v1h-2v1h-2v-2h-1v1h-3v-1h-1v2h-1v-1h-2v-1h-1v1h-3v-1h-2v1h-6v-1h-3v1h-2v-1h-1v3h-1v-3h-1v2h-1v-2h-1v1h-1v-1h-12v1h-1v-1h-1v1h-1v-1h-1v1h-1v-1h-2v1h-1v-1h-2v1h-1v-1h-1v1h-1v-1h-2v2h-1v-2h-2v1h-2v-1h-1v1h-2v1h-2v-2h-1v1h-1v-1h-2v1h-3v-1h-1v1h-1v-1h-4v1h-1v3h-1v-3h-2v-1h-2v1h-1v-1h-1v1h-1v1h-2v-1h-1v-1h-2v1h-1v1h-1v-1h-1v-1h-1v1h-2v-1h-2v1h-1v-1h-2v1h-1v-1h-3v2h-1v-1h-2v-1h-3v1h-1v1h-1v-2h-14v1h-1v-1h-1v1h-1v-1h-1v1h-1v-1h-2v1h-1v2h-1v-2h-1v-1h-1v2h-1v-2h-2v1h-1v1h-1v-1h-2v-1h-7v1h-1v-1h-1v3h-1v-3h-2v2h-1v-1h-1v-1h-6v2h-1v-2h-3v1h-1v-1h-2v1h-1v-1h-1v1h-1v-1h-2v2h-2v-1h-1v-1h-1v1h-1v-1h-2v1h-1v-1h-5v1h-3v-1h-5v1h-1v-1h-2v1h-1v-1h-2v2h-1v-1h-1v-1h-1v2h-1v-1h-2v-1h-1v1h-4v3h-1v-3h-4v1h-1v-1h-1v-1h-4v1h-2v2h-1v-2h-3v-1h-1v1h-2v-1h-3z"/>
<path d="M278 576h1v1h2v-2h1v2h2v-1h1v-1h1v2h1v-1h1v-1h1v1h1v-1h1v1h1v1h2v-2h2v1h2v-2h2v2h1v1h1v-2h2v2h1v-2h1v-1h2v2h1v-1h2v2h1v-1h1v1h3v-1h1v1h3v-1h1v-1h2v1h4v-1h1v1h1v-8h1v8h1v-3h1v3h4v1h2v-1h2v-1h1v2h1v-1h1v1h2v-1h2v-2h2v3h1v-1h3v-2h1v2h1v1h1v-1h1v1h1v-1h1v1h7v-1h1v1h1v-1h1v-5h1v1h2v-1h1v1h1v1h1v2h1v1h2v-1h1v2h1v-1h1v-3h1v4h1v-1h1v-1h1v1h1v-2h1v3h1v-2h1v1h1v1h1v-3h1v3h1v-1h1v1h1v-1h1v1h2v-1h1v1h1v-1h1v1h1v-3h1v3h10v-1h2v1h1v-1h1v-1h1v1h3v1h2v-1h5v1h4v-1h1v1h2v-1h3v1h1v-1h1v1h2v-1h2v1h5v-2h1v1h2v1h1v-4h1v4h1v-1h2v1h1v-1h3v-1h1v2h1v-1h6v1h4v-1h1v1h2v-1h1v-1h1v1h1v1h1v-1h1v-1h1v1h2v1h1v-1h2v1h4v-2h1v2h3v-1h8v1h3v-1h1v1h7v-1h1v1h1v-1h2v1h2v-1h2v1h2v-1h1v1h5v-1h1v1h1v-1h1v1h4v-1h1v1h2v-1h2v1h2v-2h1v-1h2v2h1v-1h1v-1h1v3h2v-2h1v2h1v-2h2v2h1v-1h1v-2h1v3h2v-1h2v1h1v-3h1v1h1v2h1v-2h1v1h2v-1h1v2h2v-1h1v1h1v-1h1v1h1v-1h1v1h1v-1h1v1h3v-1h1v1h1v-1h5v1h1v-3h1v1h2v1h4v1h2v-1h2v1h2v-2h1v1h1v-1h1v2h1v-1h2v1h1v-1h1v1h3v-1h1v1h1v-2h1v2h1v-1h1v1h1v-1h4v1h3v-1h1v1h3v-1h1v1h2v-1h3v1h1v-2h1v1h5v1h5v-1h1v1h2v-1h1v1h1v-1h1v1h3v-1h1v1h2v-1h1v1h1v-1h1v1h1v-1h2v1h2v-1h1v1h1v-1h2v1h1v-1h1v1h1v-1h1v1h8v-1h2v-1h1v1h2v1h2v-1h2v-1h1v1h3v1h3v-1h1v1h2v-1h2v1h1v-1h3v-2h2v2h4v-1h1v1h2v1h1v-2h1v1h1v1h6v-1h1v1h1v-1h1v1h3v-1h1v1h3v-3h1v2h3v-1h1v1h2v-3h1v3h3v1h1v-1h2v1h1v-1h2v1h1v-1h2v-1h1v1h1v-1h1v1h2v1h1v-1h2v1h2v-1h1v-1h1v1h1v1h1v-1h4v1h1v-1h2v1h2v-2h2v1h2v-2h1v3h1v-2h1v-1h1v1h1v1h2v1h2v-6h1v4h1v1h3v-1h1v-1h3v2h1v-2h1v2h3v-1h1v-1h1v2h4v-2h1v1h1v2h1v-2h1v1h3v1h1v-1h1v1h5v-1h1v1h1v-1h2v1h1v-1h2v-1h1v2h9v-1h1v1h4v-1h1v1h3v-1h7v-1h1v1h2v1h1v-1h1v1h1v-1h1v1h1v-1h2v1h4v-1h1v1h5v-1h1v1h3v-1h1v1h1v-1h1v-1h1v1h5v1h4v-2h1v1h2v1h1v-1h1v1h1v-1h1v1h3v-1h1v1h1v-1h1v1h4v-1h1v-1h1v1h1v1h1v-2h1v1h1v1h1v-1h1v1h1v-1h1v-1h1v1h1v1h2v-1h1v-1h1v1h3v1h1v-1h1v1h1v-3h1v2h2v1h2v-1h1v1h1v-2h1v-1h1v1h1v2h1v-1h1v-1h1v1h3v1h4v-1h1v-1h1v1h2v1h1v-1h1v1h2v-1h4v-1h2v1h1v-1h1v1h1v1h1v-3h1v1h2v2h1v-6h1v4h1v1h2v-2h1v-1h1v2h1v2h1v-4h1v2h1v-1h1v2h1v-1h1v-1h1v3h1v-1h1v-2h1v1h1v1h2v-2h1v3h1v-1h2v-3h1v1h2v1h2v1h3v-1h1v2h1v-1h1v-4h1v4h1v-2h2v-1h1v2h1v2h1v-1h1v-2h1v-1h1v3h1v-3h1v3h1v-3h1v2h2v1h1v-3h1v4h1v-4h1v1h1v-1h1v2h1v1h1v-1h1v1h1v-5h1v4h1v1h2v-3h1v2h1v2h1v-2h1v-2h1v1h1v3h1v-4h1v1h1v2h1v-2h1v2h1v-1h1v-2h2v1h1v-1h1v3h1v-1h1v2h1v-1h1v-1h2v1h2v-1h1v2h2v-1h1v-3h1v4h1v-2h1v2h3v-1h3v1h1v-1h7v-1h1v1h2v1h1v-1h2v-1h1v1h1v1h1v-1h1v1h2v-1h1v1h2v-1h2v-2h1v3h1v-2h1v2h1v-1h2v1h1v-1h1v1h3v-2h1v1h1v-1h1v1h1v1h2v-1h1v1h4v-1h3v1h1v-1h1v1h2v-1h2v1h2v-1h4v1h2v-2h1v1h1v1h1v-2h1v1h4v1h2v-2h1v2h1v-1h3v-1h1v2h1v-1h2v-1h1v1h3v1h1v-1h2v1h3v-2h1v2h1v-2h1v1h2v-1h1v1h1v-1h1v-1h1v2h1v-1h1v1h1v1h2v-1h2v-1h6v-1h1v1h1v-1h3v2h1v1h1v-2h1v1h1v1h1v-1h1v-1h2v1h3v1h2v-1h2v1h1v-1h5v1h2v-1h1v1h2v-1h1v1h2v-1h1v1h1v-3h1v2h2v-2h1v2h1v1h1v-3h1v1h1v2h1v-2h1v1h1v-2h1v1h1v2h3v-1h1v1h3v-1h1v1h3v-1h5v1h1v-2h1v2h1v-1h1v1h1v-1h2v1h2v-1h1v1h1v-1h2v1h3v-2h1v1h1v-1h1v1h2v1h3v-1h1v1h9v-1h1v1h1v-1h2v1h1v-1h4v1h6v-1h2v1h4v-1h1v1h2v-2h1v1h3v-1h1v1h1v1h4v-1h1v-1h1v1h2v-2h1v3h1v-1h3v1h1v-1h1v1h4v-1h1v1h2v-1h1v1h5v-1h6v1h2v-1h4v1h1v-1h1v1h1v-1h1v-1h3v1h1v1h1v-1h1v1h1v-2h1v2h1v-1h1v1h2v-1h1v1h5v-1h5v1h2v-1h1v1h3v-1h1v6h-2v-1h-2v1h-1v-1h-3v2h-3v-1h-1v-1h-2v1h-1v-1h-2v1h-1v-1h-2v1h-1v-1h-1v1h-2v-1h-3v2h-1v1h-1v-1h-1v-1h-1v-1h-2v1h-3v-1h-1v1h-2v-1h-2v1h-1v1h-1v-2h-4v1h-1v-1h-4v1h-1v-1h-1v1h-1v-1h-4v2h-1v-1h-1v1h-1v-2h-4v3h-1v-2h-1v1h-1v-1h-1v-1h-3v1h-7v-1h-3v1h-1v-1h-1v1h-1v-1h-1v1h-1v-1h-1v1h-2v-1h-2v1h-3v1h-1v-1h-1v-1h-1v1h-2v-1h-1v1h-3v-1h-1v1h-1v-1h-1v1h-1v-1h-1v1h-1v-1h-2v1h-1v-1h-3v2h-1v-1h-1v2h-1v-1h-3v-1h-1v-1h-1v2h-1v-1h-1v-1h-2v1h-1v-1h-3v1h-1v1h-2v-1h-1v-1h-2v2h-1v-1h-3v-1h-3v1h-1v-1h-2v1h-1v-1h-1v2h-2v-2h-1v1h-2v-1h-2v2h-2v2h-1v-3h-1v1h-1v1h-1v-2h-2v3h-1v-4h-5v1h-4v-1h-3v1h-2v-1h-1v1h-2v-1h-1v1h-3v-1h-1v1h-1v1h-2v1h-1v-3h-1v3h-1v-2h-1v1h-2v-2h-1v3h-1v-1h-2v1h-4v-2h-2v1h-2v-2h-1v1h-1v1h-1v1h-1v-3h-2v1h-1v2h-1v-2h-2v1h-1v-1h-1v1h-2v-1h-1v-1h-1v1h-1v-1h-1v1h-3v-1h-1v1h-1v1h-2v-1h-3v1h-2v-1h-4v-1h-2v2h-1v-1h-1v-1h-3v1h-2v-1h-2v1h-1v1h-1v-1h-1v-1h-5v1h-2v-1h-1v1h-1v-1h-6v1h-1v-1h-4v1h-1v-1h-1v1h-1v-1h-2v2h-1v-2h-1v2h-1v-1h-1v-1h-3v1h-2v1h-1v-1h-3v-1h-1v1h-8v-1h-1v1h-3v-1h-1v1h-1v3h-1v-3h-2v-1h-1v1h-1v-1h-1v1h-1v1h-1v-2h-1v1h-1v-1h-1v1h-1v-1h-1v1h-2v5h-1v-5h-2v1h-1v-1h-1v-1h-1v1h-1v1h-1v1h-1v-2h-1v2h-3v-1h-1v2h-1v-1h-1v-2h-1v2h-1v-3h-1v4h-1v-4h-1v4h-3v-3h-2v1h-1v2h-1v-1h-1v-2h-1v3h-1v-3h-1v1h-1v5h-1v-6h-2v-1h-1v1h-1v1h-1v2h-1v-2h-1v1h-2v-1h-1v1h-1v-2h-1v2h-2v-1h-1v-1h-1v3h-1v-2h-2v-2h-1v2h-1v-2h-1v2h-3v8h-1v-8h-1v2h-1v-1h-1v-2h-1v1h-1v-1h-2v3h-1v-2h-1v1h-1v-2h-3v1h-1v1h-1v-1h-1v-1h-1v3h-1v-3h-2v2h-2v1h-1v-2h-1v-1h-1v3h-1v-1h-2v-1h-1v2h-1v-3h-1v1h-2v-1h-1v4h-1v-3h-1v-2h-3v2h-3v-1h-1v1h-3v-2h-5v1h-1v1h-1v-2h-1v1h-2v1h-1v-1h-1v3h-1v-3h-2v-1h-1v1h-5v-1h-1v3h-2v-2h-3v-1h-3v1h-1v-1h-1v1h-1v-1h-3v2h-1v-1h-2v-1h-4v1h-2v1h-1v-2h-4v1h-1v-1h-1v1h-1v-1h-1v1h-1v-1h-4v2h-1v-1h-1v-1h-4v2h-1v-2h-2v1h-1v-1h-5v2h-1v-1h-3v1h-1v-1h-2v-1h-7v2h-1v-2h-6v1h-1v-1h-1v1h-1v-1h-1v3h-1v-3h-4v1h-3v-1h-2v1h-1v-1h-5v1h-2v1h-1v-1h-1v-1h-1v2h-1v-2h-2v1h-1v-1h-1v1h-1v-1h-1v1h-2v-1h-1v1h-1v-1h-1v1h-2v-1h-13v1h-2v-1h-1v1h-1v1h-1v-1h-1v1h-1v-2h-2v1h-1v1h-1v-1h-1v1h-4v-1h-1v2h-2v-1h-1v-1h-1v-1h-1v2h-1v-1h-1v-1h-1v1h-1v3h-1v-3h-1v2h-1v-1h-1v-1h-3v2h-1v-1h-2v1h-1v-3h-1v1h-1v-1h-2v2h-1v-1h-1v-1h-2v1h-2v-1h-1v3h-1v-3h-3v1h-1v-1h-1v1h-2v-1h-1v1h-4v-1h-2v1h-2v-1h-2v1h-7v1h-1v-1h-2v-1h-1v1h-2v-1h-1v1h-1v1h-1v-2h-1v1h-2v-1h-2v1h-1v-1h-1v1h-3v-1h-2v1h-2v-1h-2v3h-1v-2h-2v2h-1v-3h-1v2h-1v-1h-4v-1h-1v3h-1v-3h-5v1h-3v4h-1v-4h-1v-1h-2v1h-1v2h-1v-1h-1v-1h-1v3h-1v-3h-1v-1h-1v1h-5v-1h-1v1h-3v-1h-6v1h-4v-1h-4v1h-1v5h-1v-5h-1v-1h-2v1h-4v-1h-1v1h-2v-1h-5v1h-2v-1h-1v1h-3v-1h-4v1h-3v-1h-1v1h-4v-1h-1v1h-5v-1h-1v1h-1v-1h-2v2h-1v-1h-1v-1h-2v1h-3v-1h-1v2h-1v-1h-3v-1h-2v1h-1v-1h-2v3h-1v-2h-2v-1h-2v1h-2v-1h-2v2h-1v-1h-2v-1h-1v1h-1v-1h-1v3h-1v-3h-1v1h-2v1h-2v-1h-2v6h-1v-6h-4v-1h-1v1h-1v-1h-1v1h-2v5h-1v-5h-1v-1h-2v1h-1v1h-1v-1h-3v-1h-2v1h-1v1h-1v-2h-2v2h-1v-1h-1v1h-1v-1h-1v2h-1v-3h-4v2h-1v-2h-1v2h-1v1h-2v-2h-1v-1h-1v2h-1v-1h-1v-1h-6v1h-1v-1h-2v1h-1v-1h-4v1h-1v2h-1v-2h-2v-1h-1v1h-1v1h-2v-2h-1v1h-1v-1h-5v1h-2v-1h-4v1h-1v-1h-1v2h-1v-1h-1v-1h-1v2h-1v-1h-3v-1h-1v1h-2v-1h-6v1h-1v-1h-1v1h-1v-1h-2v1h-3v-1h-1v1h-1v-1h-2v1h-2v-1h-7v1h-2v1h-1v-2h-1v1h-3v-1h-1v1h-1v-1h-2v1h-2v5h-1v-5h-1v-1h-1v1h-2v-1h-6v1h-1v-1h-2v1h-4v1h-1v-1h-1v-1h-2v1h-1v-1h-4v1h-1v1h-1v-2h-1v2h-1v-1h-1v-1h-3v2h-2v-1h-1v-1h-1v1h-1v-1h-1v1h-1v-1h-1v1h-2v-1h-4v1h-2v1h-1v-2h-1v1h-2v1h-1v-2h-2v1h-2v-1h-1v2h-1v-1h-1v1h-1v-2h-1v2h-1v-1h-1v-1h-3v1h-1v1h-1v-1h-1v2h-2v1h-1v-4h-1v1h-1v-1h-1v3h-1v-1h-2v4h-1v-4h-1v6h-1v-4h-1v-4h-1v1h-1v-1h-7v1h-1v-1h-3v1h-1v-1h-1v1h-3v1h-1v1h-1v-1h-2v-2h-1v1h-1v-1h-1v1h-4v-1h-2v1h-1v-1h-1v1h-3v1h-1v-1h-1v5h-1v-5h-1v2h-1v-2h-1v6h-1v-6h-2v2h-1v-2h-2v2h-1v-3h-4v1h-2v2h-1v-3h-1v2h-1v-2h-2v3h-1v-1h-1v-2h-1v1h-2v1h-1v-2h-1v3h-1v-1h-4v1h-1v-2h-1v2h-1v-2h-3v1h-1v-1h-2v2h-2v-2h-3v1h-1v-1h-3z"/>
<path d="M278 607h7v-2h1v-1h1v2h3v1h1v-1h3v1h3v-1h5v-1h1v2h2v-1h1v1h1v-2h1v2h1v-1h1v1h1v-3h1v1h1v2h5v-1h1v1h1v-1h1v1h3v-1h1v1h1v-1h2v-1h1v1h1v1h5v-2h1v1h2v1h1v-1h1v1h1v-1h3v1h1v-2h1v1h6v-1h1v1h3v1h1v-1h1v-6h1v6h1v-1h1v1h2v1h6v-1h1v-1h1v1h5v1h1v-1h2v-2h1v3h1v-3h1v2h1v-2h1v3h1v-1h6v1h1v-1h2v1h5v-1h1v1h3v-2h1v1h4v1h2v-1h1v1h4v-1h2v1h2v-1h1v-1h1v2h1v-1h1v1h2v-1h1v1h3v-1h2v1h1v-2h1v1h3v-1h1v1h1v-1h2v2h1v-1h1v1h2v-2h1v2h1v-3h1v-1h2v-1h1v4h2v1h2v-1h3v-2h1v2h1v1h1v-1h2v1h2v-1h3v1h7v-2h1v-1h1v1h1v1h1v1h1v-1h1v1h1v-3h1v3h1v-1h1v1h2v-1h4v1h1v-1h1v-1h2v2h2v-2h1v1h4v1h1v-1h3v1h4v-1h4v1h1v-1h2v1h1v-1h1v1h1v-1h1v1h1v-1h1v-1h1v1h2v-5h1v5h1v1h3v-1h1v1h2v-1h2v1h1v-1h2v1h1v-1h3v1h1v-1h1v-1h1v1h3v1h3v-1h1v1h1v-1h2v1h2v-1h1v1h1v-1h1v1h2v-1h1v1h1v-1h2v1h1v-1h2v1h1v-1h1v1h2v-1h3v1h1v-1h2v-2h1v2h1v-1h1v2h2v-1h2v1h1v-1h1v1h1v-1h1v1h1v-1h2v1h3v-3h1v3h2v-2h1v2h2v-3h1v-2h1v5h1v-1h2v1h2v-1h2v1h1v-2h1v2h2v-1h2v1h4v-2h1v2h3v-1h1v-1h1v2h1v-1h2v-1h1v2h2v-1h2v1h1v-1h1v1h2v-1h3v1h1v-1h1v-1h1v1h1v1h1v-2h1v2h3v-1h2v1h5v-1h1v1h4v-2h1v2h2v-1h1v1h2v-1h1v1h1v-1h2v1h2v-1h1v1h1v-1h4v1h3v-1h2v1h2v-1h1v-2h1v2h1v-1h1v1h3v1h1v-1h1v1h2v-1h2v1h2v-1h2v-2h1v1h1v2h4v-1h1v-1h2v2h2v-1h1v1h2v-1h4v1h2v-2h1v-11h1v11h2v2h12v-1h2v-1h1v2h1v-1h1v1h3v-1h1v1h2v-1h1v-1h1v2h2v-2h1v2h1v-1h1v1h4v-1h2v1h2v-1h3v1h1v-1h3v1h2v-1h1v-1h1v2h1v-1h1v1h1v-1h1v1h2v-1h2v1h1v-1h3v1h1v-1h3v1h1v-1h1v1h2v-1h1v1h2v-1h1v1h5v-1h1v-1h1v1h1v-2h1v2h2v1h3v-1h2v1h1v-1h1v-1h1v1h1v-2h1v3h1v-1h1v-2h1v1h1v1h1v-1h1v-1h2v2h2v1h1v-1h2v1h1v-1h3v1h1v-2h1v1h1v1h1v-1h1v1h4v-1h1v1h2v-1h2v1h1v-1h3v1h1v-1h1v1h4v-1h1v-1h1v2h1v-1h1v1h1v-1h1v1h1v-1h1v-6h1v6h2v1h2v-1h3v1h1v-1h2v1h1v-2h1v2h3v-1h1v-1h1v1h2v1h1v-1h1v1h7v-1h1v1h3v-1h2v1h1v-1h2v-1h1v2h3v-3h1v3h4v-1h1v1h1v-1h3v1h2v-1h1v1h1v-1h1v1h1v-1h4v1h2v-2h1v1h2v1h1v-1h3v1h1v-2h1v1h1v1h1v-1h1v1h1v-1h2v-1h2v1h4v1h2v-1h1v1h3v-3h1v3h1v-2h1v2h1v-3h1v1h1v1h1v1h2v-1h1v-3h1v1h1v2h1v-3h1v-1h1v1h1v-1h1v4h2v-3h1v1h2v3h1v-4h2v-1h1v1h1v3h1v-2h2v2h2v1h1v-1h1v1h1v-1h1v1h2v-1h2v1h1v-1h1v1h3v-1h2v1h1v-1h1v1h4v-1h1v1h3v-1h1v1h1v-1h2v1h1v-1h1v-1h1v1h1v1h1v-3h1v1h1v1h1v-2h1v3h1v-1h2v-1h1v1h1v1h1v-1h4v-1h1v2h1v-1h1v-1h1v2h5v-1h1v1h3v-1h3v1h1v-1h1v1h1v-1h1v1h1v-1h3v1h2v-3h1v2h1v1h1v-1h1v1h1v-2h1v1h2v-1h1v1h1v-1h1v-1h2v1h2v-1h1v2h1v-1h1v-1h2v3h3v-1h1v-1h1v2h1v-1h1v1h1v-1h1v1h1v-2h1v2h5v-1h2v1h1v-1h2v-1h1v2h1v-1h2v1h1v-1h1v1h1v-1h1v-1h1v2h1v-1h1v1h5v-1h1v1h1v-1h1v1h2v-1h1v-1h1v-1h2v3h1v-1h1v1h1v-1h2v1h2v-3h1v2h1v-2h2v3h1v-1h2v1h6v-1h1v1h2v-1h4v-1h1v2h2v-1h4v1h4v-1h1v-2h1v2h2v1h2v-1h3v1h1v-1h1v1h2v-1h1v-1h1v1h1v1h1v-1h1v1h1v-1h2v-1h1v1h1v1h6v-1h1v1h5v-2h1v2h1v-1h1v1h1v-1h2v1h1v-2h1v1h1v1h2v-1h2v1h1v-1h2v-1h1v1h1v1h1v-1h2v-2h1v2h5v1h1v-3h1v3h3v-1h1v1h1v-1h1v1h3v-2h1v1h1v1h1v-2h1v1h1v1h1v-1h1v1h3v-1h5v1h1v-1h1v1h3v-1h1v1h1v-1h3v1h1v-1h2v1h5v-1h2v1h10v-1h1v1h1v-1h1v1h4v-1h1v1h3v-1h3v1h1v-1h1v-1h1v-1h1v1h1v2h1v-1h1v1h2v-1h5v1h1v-1h3v1h1v-2h1v-1h1v1h1v1h4v1h7v-1h1v-2h1v1h1v-10h1v10h2v-10h1v9h1v2h3v1h4v-1h1v1h1v-2h1v2h3v-1h1v1h1v-1h1v-1h1v1h1v-2h1v1h1v1h2v-2h1v2h1v1h1v-1h1v1h4v-2h1v2h1v-1h1v-1h2v2h2v-1h1v1h4v-1h4v1h2v-2h1v2h1v-1h3v1h1v-1h1v6h-1v-1h-1v1h-4v-1h-1v1h-3v2h-1v-2h-2v-1h-1v1h-2v-1h-2v1h-1v-1h-2v1h-1v-1h-1v1h-1v-1h-1v1h-1v-1h-1v1h-3v-1h-2v1h-1v2h-1v-3h-1v2h-1v-1h-2v-1h-1v1h-1v-1h-3v1h-2v-1h-5v1h-1v-1h-1v1h-2v-1h-1v3h-1v27h-1v-27h-2v27h-1v-27h-1v-2h-1v-1h-1v1h-1v1h-1v-2h-3v1h-1v-1h-1v2h-1v-1h-1v-1h-3v3h-1v-2h-5v-1h-1v1h-3v-1h-1v1h-1v-1h-1v1h-1v1h-1v-1h-3v2h-1v-1h-1v-2h-5v1h-1v-1h-4v1h-2v-1h-1v1h-1v-1h-7v1h-1v-1h-2v1h-1v-1h-3v1h-2v1h-1v-1h-4v-1h-1v1h-2v-1h-1v2h-1v-2h-1v1h-2v1h-1v-2h-7v2h-1v-1h-1v-1h-1v1h-5v-1h-3v1h-1v2h-1v-2h-2v-1h-2v1h-1v1h-1v-2h-2v1h-1v-1h-1v1h-1v1h-2v-2h-2v1h-1v-1h-1v1h-1v-1h-3v1h-1v-1h-4v1h-1v1h-1v-1h-2v-1h-1v1h-1v-1h-3v1h-1v-1h-4v1h-4v-1h-2v2h-1v-1h-1v2h-1v-3h-2v1h-6v-1h-8v1h-1v1h-1v-1h-1v-1h-3v1h-2v1h-1v-1h-1v-1h-5v1h-3v2h-1v-3h-2v1h-1v-1h-4v1h-5v1h-1v-2h-3v1h-1v-1h-2v1h-1v1h-1v-2h-1v1h-1v1h-1v-1h-1v1h-1v-1h-1v-1h-2v1h-4v-1h-1v3h-1v-2h-2v-1h-10v2h-1v4h-1v-5h-1v-1h-1v1h-1v-1h-3v2h-1v-1h-2v-1h-2v1h-1v-1h-2v1h-1v-1h-1v1h-1v-1h-3v1h-2v2h-3v-1h-1v1h-1v-2h-1v-1h-1v1h-1v-1h-1v2h-1v-2h-1v1h-1v2h-1v-2h-1v1h-1v-2h-1v1h-1v-1h-1v1h-1v-1h-2v2h-2v-1h-1v-1h-5v2h-1v-1h-4v-1h-9v1h-2v-1h-3v3h-1v-2h-1v-1h-2v1h-1v1h-1v5h-1v-4h-1v-1h-1v-1h-3v-1h-1v1h-2v-1h-4v1h-2v-1h-1v1h-1v-1h-6v1h-2v-1h-9v1h-2v2h-1v-2h-2v1h-3v1h-1v1h-1v-2h-1v8h-1v-8h-1v-1h-1v-1h-1v5h-1v-4h-1v1h-1v1h-1v-2h-2v6h-1v-1h-1v-5h-2v-1h-1v1h-1v-1h-1v2h-1v-1h-1v-1h-1v4h-1v-3h-3v6h-1v-6h-4v-1h-4v1h-1v1h-3v-2h-1v1h-2v-1h-4v1h-2v-1h-3v1h-1v-1h-3v1h-3v-1h-9v2h-1v-1h-1v-1h-1v1h-1v-1h-3v1h-1v5h-1v-5h-2v-1h-10v1h-1v-1h-1v1h-2v-1h-8v1h-5v-1h-3v1h-1v-1h-1v1h-1v1h-1v-2h-4v3h-1v3h-1v-5h-1v-1h-1v1h-1v-1h-6v1h-1v-1h-3v1h-2v1h-1v-1h-2v-1h-3v1h-2v-1h-1v1h-2v-1h-5v1h-1v-1h-1v1h-1v-1h-2v1h-2v1h-1v-1h-1v1h-2v-1h-2v2h-2v-2h-1v-1h-1v2h-1v2h-1v-3h-1v1h-1v-2h-2v1h-3v-1h-2v1h-1v-1h-1v3h-1v-1h-1v-1h-1v-1h-1v1h-1v-1h-1v1h-1v-1h-3v1h-2v1h-1v-1h-1v-1h-2v1h-1v1h-2v-2h-1v1h-4v-1h-2v1h-1v-1h-1v1h-1v-1h-2v1h-1v-1h-2v1h-1v-1h-2v1h-2v1h-1v-2h-2v2h-1v-2h-1v1h-3v-1h-7v1h-1v-1h-1v2h-1v-2h-1v2h-1v-1h-1v-1h-2v1h-1v-1h-2v1h-1v-1h-1v1h-6v-1h-1v1h-1v-1h-3v1h-2v-1h-2v1h-1v2h-1v11h-1v-11h-1v-3h-1v1h-2v-1h-1v2h-1v-1h-2v1h-1v-2h-1v1h-3v-1h-1v1h-1v-1h-1v1h-1v-1h-1v1h-2v1h-1v-1h-1v-1h-2v1h-1v-1h-4v1h-3v1h-1v-2h-1v1h-1v1h-1v-1h-1v6h-1v-6h-1v-1h-3v1h-3v-1h-2v1h-2v-1h-2v2h-1v-2h-4v1h-1v-1h-2v1h-1v1h-1v-1h-1v1h-1v-2h-3v1h-1v-1h-2v1h-1v-1h-4v1h-1v-1h-3v1h-1v-1h-2v2h-1v-1h-1v-1h-1v1h-1v1h-1v-2h-2v2h-1v-2h-3v2h-1v-2h-1v1h-3v-1h-1v5h-1v-5h-1v4h-1v-2h-1v-1h-2v-1h-3v1h-1v-1h-1v1h-5v-1h-1v1h-2v1h-1v-1h-1v1h-1v-2h-1v1h-1v4h-1v-3h-1v2h-1v-1h-1v-3h-1v4h-1v1h-1v-1h-1v-3h-1v-1h-1v2h-1v-2h-3v1h-1v-1h-3v1h-1v-1h-3v1h-3v1h-2v-2h-1v1h-1v-1h-1v1h-1v-1h-2v1h-1v1h-1v-1h-3v2h-1v-2h-2v-1h-2v1h-1v-1h-4v1h-1v1h-1v-2h-1v1h-2v-1h-2v1h-2v-1h-1v1h-1v-1h-2v1h-1v-1h-2v1h-1v-1h-1v1h-1v-1h-2v1h-1v-1h-1v1h-1v-1h-3v1h-1v-1h-1v2h-1v7h-1v-7h-1v-1h-1v-1h-1v1h-2v-1h-5v1h-1v-1h-3v1h-2v-1h-1v1h-2v-1h-1v1h-1v2h-1v-1h-1v-1h-2v2h-1v-2h-2v1h-1v-2h-1v1h-1v-1h-1v1h-3v-1h-1v1h-1v-1h-1v1h-1v-1h-1v1h-5v1h-1v-1h-4v1h-1v-2h-8v1h-3v-1h-4v1h-2v-1h-1v1h-1v1h-1v-2h-3v1h-1v1h-1v-1h-1v1h-1v-2h-2v1h-1v1h-1v2h-1v-3h-1v-1h-1v1h-3v-1h-1v3h-1v-2h-2v-1h-1v1h-1v-1h-1v1h-1v-1h-3v1h-1v2h-1v-3h-5v1h-1v-1h-5v1h-1v-1h-1v1h-1v-1h-2v1h-2v-1h-1v1h-2v-1h-2v1h-1v-1h-3v1h-1v-1h-4v1h-1v1h-1v-1h-2v2h-1v-1h-1v7h-1v-6h-2v-2h-1v2h-1v-1h-3v-1h-2v-1h-1v1h-1v1h-1v-1h-1v-1h-1v1h-2v-1h-2v1h-1v-1h-1v2h-1v-1h-2v-1h-1v1h-2v6h-1v-6h-1v-1h-3v2h-1v-1h-3v-1h-2v1h-1v1h-1v-2h-4v1h-1v-1h-2v1h-2v2h-1v-2h-2v-1h-3v1h-1v-1h-2v1h-1v1h-1v-1h-1v-1h-1v3h-1v-3h-2v1h-1v1h-1v-1h-1v-1h-5v1h-1v2h-1v-2h-3v1h-1v-2h-1v2h-1v-1h-1v-1h-1v3h-1v-3h-1v3h-1v-3h-1v1h-1v-1h-2v1h-2v-1h-1v1h-2v-1h-1v1h-2v-1h-1v2h-1v-1h-1v-1h-6v1h-1z"/>
<path d="M278 637h1v1h2v-1h1v1h1v-1h1v-1h1v-1h1v1h1v1h1v-2h2v1h1v1h1v1h1v-2h1v1h1v-1h2v2h1v-2h1v2h1v-1h6v-1h1v1h1v-1h2v1h1v-1h1v1h1v-1h1v1h3v-2h1v2h1v-1h1v1h2v1h2v-1h1v1h4v-1h2v1h3v-1h3v1h2v-1h2v1h1v-1h1v1h1v-1h3v1h1v-1h1v1h7v-1h4v1h2v-1h5v1h1v-1h1v1h1v-1h1v1h1v-1h5v1h2v-3h1v2h3v-1h1v1h4v1h2v-1h1v-3h1v3h1v-2h1v3h5v-1h5v1h1v-1h2v1h1v-1h1v-1h1v1h1v-1h2v2h1v-1h1v1h1v-1h6v1h3v-1h1v-1h1v1h3v1h1v-2h1v1h1v1h4v-1h1v-1h1v1h8v-1h2v1h1v-1h1v1h2v1h2v-1h4v1h6v-1h1v1h1v-1h1v1h1v-1h1v-3h1v1h1v2h1v1h2v-1h1v1h4v-1h3v1h1v-4h1v3h1v1h9v-1h2v1h1v-2h1v-1h1v2h3v1h1v-2h1v1h1v-1h1v1h1v1h2v-1h1v1h7v-1h1v1h2v-2h1v2h1v-1h1v1h1v-1h2v1h2v-1h1v1h2v-1h2v1h2v-1h1v1h3v-3h1v2h1v-2h1v2h7v-1h1v1h1v1h6v-1h4v1h1v-1h1v1h2v-1h1v1h3v-1h2v-1h1v-2h2v3h1v-1h1v2h3v-1h4v1h4v-1h2v1h1v-1h2v1h1v-1h1v1h1v-1h1v-1h2v2h1v-1h2v1h1v-1h1v1h1v-1h4v1h1v-1h1v1h1v-1h1v1h1v-1h5v1h1v-1h5v1h2v-1h1v1h1v-2h1v1h1v-1h1v2h1v-2h1v2h1v-1h6v-1h2v1h1v-1h3v1h3v-2h1v2h4v1h1v-1h3v-1h1v2h3v-1h3v1h2v-1h1v1h2v-1h1v1h3v-2h1v2h1v-3h1v2h1v1h1v-1h1v1h1v-1h1v1h1v-1h1v-1h1v1h1v1h1v-1h2v1h1v-1h1v1h5v-2h1v2h1v-1h2v1h1v-1h2v-1h1v1h1v1h1v-1h2v1h2v-1h1v1h1v-1h1v1h1v-1h5v1h2v-1h1v1h5v-1h1v1h1v-1h2v1h4v-1h1v-2h1v1h1v1h1v-1h1v-2h1v4h1v-2h1v2h1v-1h1v1h3v-1h1v1h2v-1h5v1h1v-1h1v1h2v-1h1v1h2v-1h1v1h4v-1h1v1h2v-2h1v-2h1v3h2v-1h1v1h2v-1h1v1h1v-1h1v2h3v-3h1v3h1v-1h1v-2h1v2h1v-1h1v2h2v-2h1v2h3v-1h2v-1h2v-1h1v2h3v1h1v-2h1v2h1v-1h2v-1h1v-8h1v8h1v1h2v-1h1v1h1v1h6v-1h1v1h2v-1h1v1h2v-1h2v1h3v-2h1v2h1v-2h1v1h1v1h1v-1h3v1h2v-2h1v2h1v-1h2v1h1v-1h1v-1h1v1h1v1h2v-2h1v2h1v-1h1v1h1v-2h1v1h3v1h3v-1h2v1h2v-1h3v1h1v-1h2v-1h1v1h5v-2h1v2h1v-1h3v1h1v1h2v-1h2v-2h1v3h4v-1h2v1h2v-1h8v1h3v-2h2v2h2v-1h1v1h4v-2h1v1h4v1h1v-1h1v1h1v-1h7v1h1v-1h1v1h1v-1h1v1h1v-1h1v1h2v-1h2v1h1v-1h1v1h2v-1h1v1h4v-1h1v1h3v-1h4v1h1v-1h1v1h1v-1h1v1h1v-1h1v1h1v-1h2v1h2v-1h1v1h1v-1h2v1h1v-1h2v1h5v-1h1v1h3v-1h2v1h1v-1h1v-6h1v6h1v1h1v-2h1v1h1v-1h1v1h2v1h2v-1h2v-1h1v1h1v-1h1v1h3v1h1v-2h2v2h1v-1h1v1h2v-1h1v1h1v-1h1v1h1v-1h1v1h3v-1h1v-1h1v1h1v1h1v-6h1v3h1v-3h1v5h1v-6h1v6h1v-1h1v-2h1v4h1v-3h1v-2h1v5h1v-4h1v1h1v3h2v-1h1v1h1v-1h2v1h5v-1h1v1h4v-1h3v1h3v-1h1v1h1v-1h1v1h1v-1h1v-1h1v1h4v-3h1v4h4v-6h1v5h1v-1h1v1h1v1h1v-3h1v2h1v-4h1v3h2v-3h1v1h2v-1h2v-1h1v3h1v-1h1v3h1v-5h1v2h2v2h1v-4h1v2h1v-1h1v4h1v-1h3v1h1v1h2v-1h1v-6h1v5h1v1h1v-1h1v1h1v1h1v-1h1v-1h2v-1h1v2h1v-1h1v1h1v-1h2v-1h1v3h2v-3h1v3h1v-2h1v1h1v1h3v-1h2v-1h1v2h1v-3h1v3h1v-1h1v-2h2v2h1v-3h3v-1h1v3h1v-2h2v-1h1v2h1v-2h1v2h1v3h1v-2h2v-2h1v4h1v-4h1v3h1v-3h1v2h1v2h1v-4h1v-1h1v1h1v1h1v1h2v2h4v-1h2v1h1v-2h1v-2h1v1h1v2h1v-1h1v2h1v-1h2v-4h1v4h1v-1h2v-1h1v1h2v-3h1v5h4v-2h1v-12h1v12h1v-3h1v1h1v1h1v-1h1v1h1v3h1v-2h1v-3h1v3h1v-3h1v1h1v1h1v3h1v-4h1v3h1v-4h1v2h1v-1h1v4h1v-4h1v4h2v-5h1v3h1v-2h1v4h1v-3h1v-2h1v1h1v-1h3v1h1v-2h1v2h1v-1h3v1h1v1h1v-1h1v-1h1v5h1v-1h1v-3h2v-1h1v1h3v4h1v-1h1v-4h2v2h1v2h1v-4h1v5h1v-2h1v-3h2v1h1v1h1v1h2v-3h1v1h1v1h1v3h1v-1h1v-4h1v4h2v-2h1v1h1v2h1v-1h1v-2h2v-11h1v11h2v3h1v-3h1v2h1v-2h1v-2h1v3h1v-4h1v5h1v-2h1v-2h1v1h1v-2h1v3h1v1h1v1h1v1h1v-1h1v-1h1v-9h1v9h1v-1h1v2h1v-4h1v1h1v2h2v-2h1v3h1v-4h1v4h2v1h2v-2h1v1h1v-4h2v2h1v-1h1v2h1v-1h1v-1h1v1h1v2h2v1h3v-1h1v-1h1v2h1v-2h1v-41h1v40h1v-2h1v-38h1v41h1v1h3v-3h1v2h1v-3h2v3h1v-1h1v3h1v-3h1v1h1v-2h1v1h4v1h1v2h1v-1h1v-1h1v1h3v-1h1v-12h1v12h2v2h1v-1h1v1h1v-1h1v1h2v-2h1v-1h1v1h1v2h4v-2h2v2h1v-2h1v-6h1v7h1v1h1v-1h1v1h1v-3h1v2h1v-1h1v1h2v6h-3v1h-2v-2h-1v1h-1v-1h-1v3h-1v12h-1v-12h-1v-2h-1v1h-2v-2h-3v2h-1v-1h-3v-1h-2v1h-1v-1h-1v1h-1v-1h-1v2h-1v1h-1v25h-1v-25h-1v-2h-3v1h-1v-1h-2v3h-1v-3h-1v3h-1v-1h-2v-2h-1v1h-1v2h-2v-4h-1v3h-1v-1h-1v1h-1v-1h-1v1h-2v-3h-1v3h-1v1h-1v43h-1v-43h-2v43h-1v-43h-1v-1h-2v-3h-1v1h-1v-1h-2v2h-1v-1h-1v2h-2v1h-1v-1h-1v1h-2v-3h-1v2h-2v-3h-1v1h-1v-1h-3v1h-1v1h-1v-2h-2v3h-1v2h-2v-3h-1v2h-1v1h-1v6h-1v-8h-1v1h-1v1h-1v2h-1v-7h-1v1h-1v6h-1v-7h-1v2h-1v3h-1v-4h-1v4h-1v2h-1v-6h-2v-1h-1v2h-1v-2h-1v5h-1v-2h-1v12h-1v-12h-1v-3h-1v4h-1v-4h-1v1h-1v-1h-2v1h-2v-1h-1v1h-2v4h-1v-4h-1v4h-1v-4h-2v4h-2v-2h-1v-2h-1v-1h-1v1h-1v4h-2v-1h-1v1h-1v-3h-2v2h-1v-1h-2v2h-1v-1h-1v-3h-2v-1h-1v2h-1v-1h-1v1h-1v2h-2v1h-2v-2h-1v8h-1v-8h-3v2h-2v-2h-1v1h-1v-3h-2v1h-1v-1h-1v3h-1v-4h-1v2h-1v-2h-1v4h-1v-1h-1v2h-1v-4h-1v4h-1v-2h-1v-2h-1v6h-1v-4h-1v-2h-1v4h-2v-2h-1v2h-1v-5h-1v1h-1v2h-1v2h-1v-1h-1v16h-1v-17h-1v-3h-3v2h-1v7h-1v-7h-1v-2h-1v1h-2v2h-1v2h-1v-4h-1v-1h-1v2h-1v1h-3v2h-1v-5h-7v1h-2v1h-4v1h-2v2h-1v-3h-1v-2h-2v1h-1v-1h-1v3h-2v2h-1v-2h-2v2h-1v-4h-1v1h-1v3h-1v-2h-1v-1h-1v-1h-1v2h-2v1h-1v-2h-2v-1h-2v2h-2v-2h-1v2h-1v-3h-1v1h-1v-1h-1v1h-2v1h-1v-2h-1v3h-1v-2h-1v-1h-1v3h-1v-2h-1v1h-1v1h-1v-1h-3v-1h-1v1h-1v-1h-6v1h-1v7h-1v-7h-1v-2h-1v1h-2v1h-3v1h-1v2h-1v1h-2v1h-2v-6h-1v1h-1v2h-1v-2h-1v2h-1v-4h-1v3h-1v1h-1v-3h-1v1h-1v4h-1v-4h-1v3h-1v-1h-1v-4h-1v1h-1v6h-1v-5h-1v-2h-1v3h-1v4h-1v-6h-3v-1h-1v1h-2v1h-2v-2h-2v1h-1v-1h-2v1h-2v-1h-1v1h-1v-1h-4v1h-1v-1h-2v1h-1v-1h-1v1h-4v-1h-1v1h-1v-1h-5v6h-1v-6h-1v6h-1v-4h-1v-1h-2v6h-1v3h-1v-5h-1v8h-1v-10h-2v-1h-1v6h-1v-8h-4v1h-1v-1h-1v1h-1v1h-1v-1h-1v3h-1v-3h-4v-1h-1v2h-1v-1h-3v1h-1v-1h-1v-1h-1v1h-2v-1h-1v1h-1v2h-1v-3h-1v1h-2v1h-2v1h-1v-2h-1v-1h-1v1h-1v6h-1v-6h-3v1h-1v-1h-1v1h-2v-1h-1v-1h-4v1h-1v-1h-1v3h-1v-2h-1v-1h-1v1h-2v-1h-1v1h-1v-1h-1v1h-1v-1h-1v1h-1v-1h-2v1h-5v-1h-1v1h-1v-1h-2v1h-1v-1h-3v1h-1v-1h-7v1h-3v-1h-1v1h-1v-1h-1v1h-3v-1h-4v1h-2v-1h-1v1h-2v-1h-2v1h-2v-1h-1v2h-1v-1h-2v-1h-3v1h-1v-1h-1v1h-3v-1h-3v2h-3v-1h-2v-1h-3v1h-2v-1h-6v3h-1v-3h-2v1h-3v1h-1v-1h-1v1h-2v-1h-2v2h-1v-2h-1v2h-1v-2h-4v-1h-5v1h-3v1h-1v-2h-3v1h-1v-1h-3v1h-1v-1h-2v2h-1v-1h-3v-1h-1v1h-1v2h-1v-3h-3v1h-1v-1h-1v1h-1v1h-1v-1h-1v1h-1v-1h-2v-1h-6v1h-4v-1h-1v1h-1v-1h-2v1h-1v-1h-2v2h-1v-2h-2v2h-1v-1h-1v-1h-1v3h-1v10h-1v-10h-1v-2h-1v-1h-3v1h-2v1h-1v-1h-1v2h-1v-1h-1v-2h-2v3h-1v-3h-1v1h-1v3h-1v-4h-1v1h-1v-1h-1v1h-1v1h-1v-2h-1v1h-1v3h-1v-3h-1v-1h-1v1h-1v1h-1v-2h-1v2h-1v-1h-1v-1h-2v1h-1v-1h-3v1h-4v-1h-4v1h-3v-1h-3v1h-1v-1h-2v1h-1v4h-1v-4h-1v-1h-3v1h-1v-1h-3v1h-9v-1h-1v2h-1v-2h-1v1h-1v-1h-1v1h-2v-1h-3v1h-1v-1h-3v2h-1v-2h-2v2h-1v-1h-1v-1h-2v1h-1v3h-1v-3h-1v-1h-1v1h-1v-1h-3v1h-1v-1h-2v1h-2v-1h-1v2h-1v-1h-2v-1h-2v1h-1v1h-1v-2h-2v1h-2v-1h-1v1h-2v-1h-3v1h-2v-1h-2v1h-1v-1h-1v1h-1v3h-1v-3h-3v-1h-1v1h-1v1h-1v-2h-2v1h-1v-1h-1v1h-1v-1h-2v1h-1v-1h-3v1h-1v-1h-1v3h-1v-1h-1v-2h-1v1h-1v-1h-1v4h-1v-1h-2v-1h-1v-2h-1v2h-2v-1h-1v1h-2v-1h-7v-1h-1v1h-3v-1h-1v3h-1v-3h-4v1h-1v-1h-3v1h-1v-1h-1v2h-2v-1h-3v-1h-7v1h-1v-1h-1v4h-1v-3h-1v-1h-1v1h-2v-1h-2v3h-1v-3h-1v2h-1v-2h-4v1h-1v-1h-1v2h-1v-1h-2v-1h-2v1h-6v1h-3v-1h-1v-1h-1v1h-3v-1h-1v1h-2v-1h-2v1h-2v1h-1v-1h-2v1h-1v-2h-1v1h-1v-1h-4v1h-1v-1h-1v2h-1v-1h-4v3h-1v-4h-1v1h-4v3h-1v-3h-1v-1h-1v2h-1v-2h-1v2h-1v-1h-1v2h-1v-3h-2v1h-1v-1h-2v1h-1v-1h-2v1h-1v-1h-2v2h-1v-1h-1v-1h-2v3h-1v-2h-1v2h-1v-3h-1v1h-1v-1h-1v1h-2v-1h-4v1h-1v-1h-1v3h-1v-1h-1v-1h-1v-1h-1v2h-1v-1h-4v-1h-4v1h-1v-1h-1v1h-1v-1h-1v1h-4v-1h-5v1h-1v-1h-5v1h-1v1h-2v-2h-6v1h-1v-1h-3v1h-1v1h-1v-2h-1v1h-4v-1h-1v1h-1v1h-1v-2h-1v1h-7v-1h-1v1h-3v-1h-2v2h-1v-2h-1v1h-3v-1h-1v1h-1v1h-1v-2h-1v1h-1v-1h-6v2h-1v-1h-1v-1h-2v2h-1v-2h-1v1h-2v2h-1v-2h-1v-1h-1v1h-1v-1h-4v1h-3v-1h-3v1h-1v-1h-2v1h-1v1h-1v-1h-3v1h-1v-1h-1v-1h-1v1h-2v-1h-2v1h-4v-1h-2v1h-2v-1h-1v2h-1v-1h-3v-1h-1v1h-1v2h-1v-2h-2v1h-1v-2h-1v1h-1v-1h-1v1h-1v-1h-11v2h-1v-2h-1v1h-1v-1h-1v2h-1v-1h-1v-1h-1v1h-1v-1h-2v1h-1v-1h-4v1h-3v-1h-1v1h-1v-1h-2v1h-2v-1h-1v1h-2v-1h-2v2h-3v-2h-1v1h-1v-1h-1v1h-1v-1h-1v2h-1v1h-1v-2h-1v1h-2v-2h-1v1h-1v1h-4v-1h-2v1h-2v-1h-1v1h-1v-2h-2v1h-2v1h-3v-2h-1v2h-1v-1h-2v-1h-4v1h-1z"/>
<path d="M278 667h2v-1h1v1h1v-4h1v5h1v-1h1v-4h1v4h1v1h1v-2h1v2h3v-2h1v-9h1v9h1v2h4v-1h1v1h1v-2h1v-4h1v4h4v2h1v-1h1v1h1v-1h1v1h1v-2h1v-21h1v21h2v1h2v-1h2v-9h1v9h2v-8h1v8h1v1h1v1h1v-1h2v1h1v-1h1v-1h1v1h1v-1h1v1h1v-1h3v1h9v-1h1v1h4v1h1v-2h1v1h3v1h6v-3h1v2h3v-1h1v1h1v-5h1v5h2v-1h1v2h3v-1h1v-1h2v2h1v-1h1v-1h1v2h1v-1h1v-1h1v1h2v1h1v-1h1v1h1v-1h2v-1h1v1h6v-3h1v3h3v1h1v-2h1v-1h1v1h1v1h4v-2h1v1h1v2h1v-1h2v1h2v-1h1v1h1v-1h1v1h6v-1h1v-1h1v1h1v1h5v-1h1v1h1v-1h2v-1h1v2h1v-1h2v-1h1v1h1v1h4v-1h1v1h2v-1h1v1h2v-3h1v1h1v2h3v-1h1v-1h1v1h2v1h2v-1h1v1h2v-1h2v1h2v-3h1v2h3v-1h3v1h3v-1h1v1h8v1h2v-1h1v1h1v-1h1v1h1v-1h3v1h2v-1h2v1h1v-2h1v2h1v-1h2v-1h1v1h2v1h2v-2h1v1h2v1h3v-1h1v1h4v-1h2v1h1v-1h1v1h1v-1h6v1h2v-1h2v-1h1v1h2v-1h1v1h1v1h1v-1h3v-1h1v-1h2v1h1v1h5v1h2v-1h1v1h1v-1h2v-2h1v3h5v-1h2v1h1v-1h4v1h1v-1h1v-1h1v2h1v-1h4v1h1v-1h2v1h2v-1h1v1h1v-1h3v-1h1v2h1v-1h2v-1h1v2h1v-1h1v1h6v-1h1v-1h1v1h1v1h1v-1h1v1h5v-1h1v1h1v-1h2v1h2v-1h2v1h1v-1h1v1h1v-1h1v-2h1v2h4v1h3v-2h1v1h1v-3h1v3h2v1h3v-1h1v1h1v-1h1v1h1v-2h1v2h1v-1h2v1h1v-1h3v-1h1v1h2v1h1v-1h2v1h1v-1h2v1h2v-1h1v1h5v-2h1v2h1v-1h1v1h1v-1h1v1h1v-2h1v1h1v-1h1v1h1v1h2v-1h2v1h2v-1h8v1h1v-3h1v1h1v1h8v1h2v-1h1v-1h1v1h1v1h1v-2h1v1h1v-1h1v-15h1v15h1v1h3v1h1v-1h2v1h2v-1h1v1h5v-1h1v-1h1v-13h1v13h1v1h2v1h1v-1h1v-3h1v2h3v-1h3v-1h1v-1h1v-1h1v1h1v-1h1v5h1v-6h1v-1h1v2h1v2h1v4h1v-5h1v2h1v-2h1v2h1v-2h1v-3h1v1h1v5h1v-4h1v3h1v-1h1v2h1v-3h1v-1h1v3h1v-3h1v-1h2v1h1v4h1v-6h2v1h1v5h1v-3h1v-1h2v-8h1v7h1v-1h4v4h1v-3h1v4h1v1h1v-1h2v1h1v-1h2v1h1v-1h1v2h1v-1h2v-1h1v-2h1v3h1v-1h1v-4h1v1h1v-1h1v4h2v1h1v-3h1v-1h1v2h1v2h2v-4h1v3h1v-3h1v1h1v1h1v-2h2v3h1v-3h1v5h1v-2h2v-1h1v3h1v-2h1v1h1v1h1v-2h1v2h1v-2h1v1h1v-2h3v-1h1v3h1v-3h1v2h1v-1h1v-1h1v-1h1v2h1v2h2v-3h1v1h1v1h1v-1h1v-1h4v-1h2v4h2v-3h1v2h1v-1h1v2h1v-1h1v1h2v-1h1v2h1v-3h2v2h1v1h1v1h1v-2h2v-1h1v-3h1v1h1v2h1v-2h1v-1h1v5h1v-2h1v-2h2v5h1v-1h1v1h1v-3h2v-3h1v3h1v-3h1v5h1v-2h1v3h1v-3h2v2h1v-3h1v4h1v-1h1v-4h1v3h2v1h4v1h1v-1h2v1h1v-1h1v1h3v-1h1v1h3v-1h1v1h2v-1h1v-1h1v-2h1v3h7v-1h1v1h4v1h2v-1h1v-1h1v1h2v1h2v-2h1v1h1v-1h1v2h1v-2h1v1h1v1h1v-2h3v-1h3v3h1v-2h2v1h1v-1h2v-1h1v2h1v-1h1v-1h1v3h1v-1h1v-1h1v1h3v-2h1v2h2v-3h1v1h2v-1h1v1h1v2h2v1h3v-1h1v1h1v-1h1v1h1v-2h1v1h4v-1h1v1h1v-3h1v1h2v2h1v-2h1v1h1v2h2v-2h2v2h1v-1h1v-3h1v2h1v-2h1v1h1v1h1v-2h1v1h1v-1h1v3h1v1h1v-3h1v2h1v1h1v-2h2v1h3v1h4v-1h1v-1h2v1h1v-2h1v2h1v-1h1v-9h1v9h1v1h1v1h3v-1h1v1h1v-4h2v4h1v-2h1v-1h1v-1h1v3h1v-1h2v2h1v-3h1v2h1v-6h1v5h1v-5h1v4h1v-1h1v2h1v-5h1v1h1v1h1v-2h1v3h1v-1h1v-1h1v-3h1v7h3v-1h1v1h2v-2h1v2h1v-2h1v2h1v-2h3v3h1v-3h1v2h1v-1h1v2h1v-2h1v3h1v-1h1v1h1v-1h2v-2h1v2h2v-3h1v4h1v-3h1v-1h1v1h1v-1h1v1h1v-1h1v4h1v-1h1v-2h1v-1h2v1h1v-1h1v1h1v-1h1v1h3v3h1v-2h1v-1h1v-1h1v1h1v2h2v-1h1v-2h2v1h1v1h2v1h1v-2h2v2h1v-1h1v1h1v1h1v-3h4v3h2v-1h1v-3h1v2h1v-2h1v2h1v-2h1v1h1v2h1v-3h1v2h2v-2h1v3h1v-3h1v1h2v3h1v-2h1v-1h1v2h1v-1h3v-2h1v1h1v-1h1v1h1v1h1v2h1v-3h1v2h1v-1h1v2h1v-3h1v1h1v-2h3v1h1v-1h1v3h1v-3h1v2h1v-1h1v3h1v-4h1v4h2v-3h1v2h2v1h1v-1h1v-1h1v-2h1v3h2v-3h1v4h1v-3h1v2h2v-6h1v2h1v3h1v-3h1v2h1v-1h1v3h1v1h1v-5h1v1h1v1h2v-1h1v4h1v-5h1v2h1v-1h1v4h1v-2h1v-2h1v2h1v-1h2v-1h1v2h2v-2h1v2h1v2h2v-1h1v1h2v-3h1v2h3v-2h1v-1h1v2h1v-2h3v3h1v-3h1v1h3v3h1v-4h1v3h1v-1h1v2h1v-1h2v-2h1v1h2v-2h1v1h1v1h1v2h1v-2h1v-2h1v4h1v-2h2v-1h1v1h1v-1h1v1h3v2h1v-1h1v-2h3v2h1v-3h1v1h1v-1h2v3h1v-2h1v1h2v-2h2v1h1v-1h1v2h1v-1h1v2h3v1h1v-1h2v1h1v-3h1v1h1v1h1v-1h2v1h2v-1h1v-1h1v-1h1v2h2v-1h3v2h2v-1h1v2h1v-2h1v-15h1v14h1v1h1v-15h1v15h1v1h1v-1h1v2h1v-1h1v-1h2v1h1v1h1v-1h2v-1h1v1h1v1h1v-2h4v1h2v1h4v-2h1v2h1v-1h1v1h5v-1h3v1h1v-1h7v-2h1v3h12v4h-1v1h-1v-1h-2v1h-3v-1h-2v1h-1v-1h-1v1h-7v-1h-2v3h-1v-2h-4v1h-1v-2h-4v1h-2v-1h-1v1h-1v1h-1v-2h-1v1h-1v-1h-2v2h-2v-1h-2v-1h-1v4h-1v-3h-3v2h-1v-1h-1v-2h-1v1h-1v1h-2v-2h-1v3h-1v14h-1v-14h-2v14h-1v-14h-1v-1h-1v-1h-2v1h-1v1h-1v-1h-1v2h-1v-3h-1v2h-1v-1h-2v-1h-1v-1h-2v3h-1v-2h-4v1h-2v-1h-1v-1h-1v1h-2v1h-2v-2h-1v4h-1v-2h-1v2h-2v-1h-1v1h-1v-2h-1v-1h-2v-1h-1v4h-2v-4h-1v2h-1v-1h-1v-1h-1v2h-1v2h-2v-4h-1v3h-1v-1h-1v-1h-2v1h-1v1h-1v-1h-1v-1h-2v1h-1v1h-2v-1h-1v2h-1v-3h-1v-1h-1v1h-2v2h-2v-3h-1v1h-2v3h-4v-1h-1v-3h-1v2h-1v1h-1v1h-1v-3h-1v3h-1v-1h-2v-3h-1v4h-2v-4h-1v2h-1v-2h-2v2h-1v1h-1v1h-1v-2h-1v3h-1v-2h-1v1h-2v-2h-1v-1h-2v2h-2v-2h-1v2h-1v-2h-1v2h-1v1h-1v-3h-1v3h-1v1h-1v-4h-1v2h-1v1h-1v1h-1v-3h-2v2h-1v-1h-2v-2h-1v1h-1v2h-4v-4h-1v1h-2v-1h-1v2h-1v2h-1v-3h-1v1h-1v-1h-1v1h-2v-2h-1v1h-1v2h-1v1h-1v-2h-1v1h-1v-1h-1v2h-2v-1h-1v-3h-1v2h-1v2h-2v-3h-1v2h-2v1h-1v-1h-1v1h-1v-3h-2v1h-1v1h-1v1h-1v-1h-2v-2h-1v1h-2v-1h-2v3h-1v-2h-1v-1h-1v2h-2v-3h-1v4h-1v-2h-1v2h-1v-4h-1v3h-1v-2h-1v1h-1v2h-1v-2h-1v2h-1v-4h-2v1h-2v-1h-1v2h-1v2h-1v-1h-1v-1h-1v2h-2v-1h-2v-2h-1v3h-1v-3h-2v1h-1v-1h-1v3h-1v-1h-1v-1h-1v2h-1v-4h-1v3h-1v-1h-1v-2h-1v1h-2v1h-1v-2h-2v1h-1v3h-1v-3h-1v1h-1v2h-2v-2h-1v-1h-1v1h-1v-1h-1v2h-2v-3h-2v1h-2v1h-1v-1h-1v3h-2v-1h-2v1h-2v-2h-1v2h-2v-3h-2v2h-2v-3h-1v4h-1v-2h-1v1h-1v-2h-1v6h-1v-5h-1v2h-1v-3h-1v6h-1v1h-1v-2h-1v-3h-1v7h-2v-8h-1v7h-1v-2h-1v8h-1v-7h-1v-6h-1v-2h-2v3h-1v-3h-1v3h-1v-2h-1v3h-1v-3h-1v1h-1v2h-1v-2h-1v-1h-4v-1h-1v2h-1v8h-1v-7h-1v-3h-2v3h-1v1h-1v-3h-1v-1h-1v1h-1v-1h-3v4h-1v-1h-1v-3h-1v2h-1v-1h-1v-1h-1v1h-2v-1h-1v1h-2v3h-1v-2h-1v-1h-1v1h-1v1h-1v-3h-1v2h-1v-1h-1v-1h-1v3h-1v-1h-1v-1h-1v-1h-1v1h-1v-1h-1v2h-1v-1h-1v3h-2v-3h-4v-1h-1v2h-1v2h-1v-1h-1v-3h-1v2h-1v-2h-1v2h-1v-1h-1v-1h-1v1h-1v1h-2v1h-2v-2h-1v-1h-1v3h-1v-1h-1v1h-2v-3h-1v1h-1v1h-1v1h-3v-1h-1v1h-1v-3h-1v4h-1v-1h-1v-3h-1v2h-1v1h-1v-1h-1v-1h-1v2h-3v-1h-2v-1h-1v1h-1v-1h-1v1h-1v-1h-1v-1h-1v1h-2v-1h-2v1h-4v-1h-1v2h-1v-2h-2v1h-1v-1h-1v1h-1v-1h-1v1h-1v1h-1v1h-1v-2h-1v-1h-1v2h-1v-1h-1v-1h-2v1h-1v1h-1v-1h-2v-1h-1v1h-1v-1h-1v1h-1v-1h-1v1h-2v-1h-1v1h-1v1h-1v-1h-2v1h-1v-1h-1v2h-1v-3h-1v2h-1v-1h-2v3h-1v-2h-1v-1h-1v2h-1v-1h-1v1h-1v3h-2v-1h-1v1h-1v-1h-1v-3h-1v-1h-2v2h-2v3h-1v-2h-1v1h-1v-3h-1v2h-1v2h-1v-1h-1v-1h-1v-3h-1v2h-1v-1h-1v1h-1v-2h-1v3h-1v-2h-1v4h-1v-5h-1v2h-1v-1h-1v-1h-1v1h-2v3h-2v-2h-2v3h-1v-4h-1v2h-1v1h-2v-3h-1v3h-2v1h-2v-4h-1v2h-1v-2h-1v3h-1v-2h-2v1h-1v-1h-2v1h-1v1h-1v-2h-3v-1h-1v1h-1v-1h-2v-1h-2v1h-1v-1h-1v3h-1v-3h-1v1h-1v1h-2v3h-1v-2h-1v1h-1v-2h-1v1h-1v1h-1v1h-2v-1h-2v-2h-1v3h-1v-3h-2v1h-1v-1h-1v3h-1v-1h-1v1h-1v-3h-1v2h-1v-2h-1v1h-1v-1h-1v-2h-1v1h-2v1h-2v1h-1v-1h-1v1h-2v-2h-1v3h-1v1h-1v-2h-1v3h-4v-1h-1v12h-1v-15h-2v2h-1v-4h-1v4h-1v1h-1v-3h-1v3h-1v-4h-1v1h-1v3h-1v-2h-1v3h-1v-2h-1v-3h-1v2h-2v1h-2v-3h-1v4h-1v1h-2v-3h-1v2h-2v-1h-1v-2h-1v1h-2v3h-1v-2h-1v-2h-1v-1h-1v1h-1v1h-1v-1h-2v-1h-1v1h-1v-1h-2v-1h-2v1h-1v-2h-1v1h-2v-1h-1v3h-1v16h-1v-16h-1v-2h-2v-1h-5v1h-2v-1h-1v1h-1v-1h-4v3h-1v85h-1v-85h-1v-1h-1v-1h-2v-1h-3v1h-1v1h-2v-2h-1v1h-2v-1h-1v1h-1v-1h-1v1h-1v2h-1v-1h-2v-1h-4v-1h-1v1h-1v-1h-8v1h-1v3h-1v-2h-1v-1h-1v-1h-2v1h-2v-1h-1v1h-1v-1h-1v1h-1v-1h-1v1h-2v-1h-1v2h-1v-2h-4v1h-1v-1h-2v1h-2v-1h-1v1h-3v-1h-4v1h-1v-1h-2v1h-1v1h-1v-2h-2v1h-2v-1h-1v2h-1v-2h-1v1h-4v-1h-1v3h-1v-2h-2v2h-1v-2h-1v-1h-1v1h-2v1h-1v-1h-1v-1h-6v2h-1v-2h-4v1h-4v-1h-1v1h-4v-1h-2v1h-1v-1h-1v2h-1v-1h-1v1h-1v-1h-1v-1h-1v1h-4v-1h-1v1h-3v-1h-2v1h-1v1h-1v-2h-4v2h-1v-1h-1v-1h-1v1h-1v-1h-1v1h-1v-1h-1v1h-2v-1h-1v1h-1v-1h-2v1h-6v1h-1v-1h-1v-1h-1v1h-3v1h-1v-1h-1v1h-1v-1h-1v1h-1v-1h-1v-1h-1v1h-1v-1h-1v1h-1v2h-1v-2h-3v-1h-1v1h-3v3h-1v-3h-4v-1h-1v1h-2v-1h-2v1h-2v-1h-2v2h-1v-1h-2v-1h-2v1h-1v1h-1v-2h-1v1h-3v-1h-4v1h-2v-1h-1v1h-2v1h-1v1h-1v-2h-1v1h-1v3h-1v-4h-1v-1h-1v1h-3v-1h-3v1h-3v2h-1v-3h-2v1h-2v2h-1v-1h-1v-2h-1v1h-3v-1h-1v1h-1v-1h-2v1h-1v-1h-1v1h-4v1h-1v-1h-3v-1h-4v1h-1v2h-1v1h-1v-3h-1v-1h-4v1h-1v-1h-3v2h-1v1h-1v-2h-1v-1h-2v1h-1v-1h-1v1h-2v-1h-3v1h-1v-1h-4v2h-2v-2h-3v1h-1v-1h-3v1h-1v-1h-4v1h-4v-1h-1v1h-1v-1h-1v2h-2v1h-1v-2h-1v2h-1v-1h-1v-2h-1v4h-1v6h-1v-8h-2v-1h-1v-1h-2v2h-1v-1h-1v1h-1v-2h-4v2h-1v-1h-1v1h-2v-1h-4v1h-1v-2h-1v2h-1v-2h-4v1h-2v6h-1v-6h-1v1h-2v-2h-1v2h-3v-2h-4v1h-2v-1h-1v1h-1v-1h-2v1h-1v1h-1v-2h-2v1h-3v1h-1v-1h-1v1h-1v-1h-1v1h-1v-1h-1v1h-7v-1h-4v1h-1v-2h-1v1h-1v2h-1v13h-1v-13h-2v10h-1v-10h-1v-1h-1v-2h-1v2h-1v-2h-1v3h-1v16h-1v-16h-1v-2h-1v1h-1v-1h-1v-1h-1v1h-1v1h-4v4h-1v-5h-1v-1h-1v1h-1v-1h-1v1h-4v5h-1v-5h-1v-1h-2v1h-1v1h-1v-1h-1v1h-1v6h-1v-6h-2v6h-1v-6h-1v1h-1v-2h-2z"/>
<path d="M278 698h1v-1h1v1h1v-1h1v-1h2v-1h1v3h1v-1h1v-3h1v3h1v-3h2v3h1v-1h2v-1h1v-4h1v5h1v-2h1v-2h2v3h1v-1h1v4h1v-1h1v-6h1v2h1v5h1v-4h2v-3h2v6h1v-2h1v1h1v-3h1v4h1v-4h1v1h1v-3h1v1h1v4h1v-4h1v-1h1v1h1v2h1v3h1v-3h1v-2h1v1h1v4h1v-5h1v5h2v1h1v-5h1v-2h1v5h1v-5h1v1h1v1h1v3h1v1h1v-3h1v-3h1v7h1v-2h1v-2h1v1h1v-1h1v3h1v-1h1v-8h1v7h1v-1h1v2h1v-4h1v5h1v-3h2v-2h1v-1h1v2h2v1h1v3h1v-5h1v-1h1v6h1v-6h2v3h1v4h1v-6h1v3h4v1h1v1h2v-1h1v-2h1v1h1v2h1v-2h1v3h1v-1h2v-1h1v-11h1v11h1v2h2v-2h1v1h1v-1h1v-1h1v1h2v1h3v1h1v-1h1v1h2v-1h1v1h6v-1h1v1h3v-1h3v-1h1v1h5v1h1v-1h2v1h1v-1h1v1h1v-1h5v1h1v-1h3v1h1v-1h2v1h1v-1h3v1h2v-1h1v-1h1v1h2v-2h1v2h1v-1h2v1h1v1h2v-1h2v1h1v-1h2v1h3v-1h9v1h1v-1h2v1h2v-1h1v-2h1v3h1v-1h1v1h2v-1h2v1h1v-1h1v-1h1v1h1v-1h1v1h8v1h1v-1h1v1h4v-1h1v1h1v-2h1v1h2v1h1v-1h1v1h1v-3h1v3h1v-1h1v1h4v-1h1v-1h1v1h2v1h2v-1h2v1h2v-1h8v1h1v-1h2v1h1v-1h1v1h1v-5h1v5h1v-1h1v1h2v-1h1v1h2v-1h1v1h10v-1h2v1h2v-1h3v1h1v-1h2v1h2v-1h1v-1h1v1h3v-1h1v2h3v-2h1v1h3v1h3v-1h3v-3h1v2h1v-2h1v2h1v1h1v1h2v-1h2v1h1v-2h1v1h1v1h1v-1h1v1h4v-1h3v-1h2v1h1v-2h2v3h1v-1h1v1h1v-3h1v3h5v-1h4v1h3v-1h1v-3h1v4h3v-1h1v-2h1v1h1v1h2v1h1v-1h1v1h1v-1h1v1h1v-1h3v1h1v-1h2v1h1v-1h6v-1h1v1h4v1h3v-2h1v2h1v-1h2v-1h1v1h1v-1h1v-11h1v11h1v1h1v1h3v-1h4v1h1v-1h2v-1h1v1h1v1h1v-2h1v-10h1v10h1v2h1v-1h1v1h2v-1h1v1h2v-1h1v-1h1v1h2v-1h1v1h1v-1h1v-1h1v1h1v-1h1v2h1v-1h1v1h1v-1h2v-1h1v1h2v-2h2v4h1v-2h1v-1h1v3h1v-1h1v-3h1v1h1v1h1v-1h1v2h1v-2h1v2h1v1h1v-4h1v1h2v2h2v-2h1v2h2v1h1v-1h2v1h1v-2h2v1h1v1h1v-3h1v3h2v-1h2v-1h1v1h1v-1h1v2h2v-1h3v1h2v-1h1v1h1v-1h1v1h7v-1h3v1h1v-1h1v1h1v-2h1v1h2v1h1v-1h4v1h1v-1h1v1h1v-2h1v2h1v-3h1v3h1v-1h1v1h1v-1h1v1h1v-3h1v2h1v1h2v-1h1v1h2v-1h1v-1h1v1h1v-1h1v2h1v-2h1v1h1v1h2v-1h1v-1h1v1h1v1h1v-1h2v-1h1v1h4v1h5v-1h1v-1h1v2h1v-1h4v1h2v-1h2v-1h1v2h1v-1h1v1h1v-1h1v-1h1v2h2v-1h1v-1h1v1h2v1h1v-1h1v1h3v-1h5v1h3v-1h2v1h3v-1h2v1h1v-1h1v-1h1v-1h1v2h1v1h1v-1h1v1h2v-2h1v2h3v-1h1v1h1v-1h2v-1h1v2h3v-1h1v1h2v-1h2v1h3v-1h1v1h2v-2h2v2h1v-1h3v-3h1v2h1v-1h1v2h2v-1h1v1h2v1h1v-1h3v1h1v-1h1v-1h1v1h2v-1h2v1h1v1h1v-3h1v2h1v1h2v-1h5v-2h1v-1h1v3h2v-1h2v1h3v1h2v-1h1v-1h1v1h4v-1h2v1h1v-1h2v1h1v-2h1v-2h1v3h1v2h1v-1h1v1h1v-3h1v-1h1v3h1v-1h1v-1h1v3h1v-2h1v1h1v-1h1v1h1v-1h1v-1h1v1h1v1h1v-1h1v-2h1v2h1v-2h3v1h1v-3h1v6h1v-3h1v1h1v2h1v-2h1v-2h1v3h2v-3h2v3h1v-2h1v-1h5v2h2v-2h1v-2h1v2h3v1h1v-1h2v2h1v-2h1v2h1v-2h4v2h1v1h1v-3h1v4h1v-2h2v1h1v-2h1v3h1v-1h2v1h3v-1h1v-1h1v1h1v-2h1v3h1v-1h1v1h2v-1h1v-2h1v3h4v-1h2v-1h1v2h2v-2h2v-2h1v4h1v-1h2v1h1v-1h1v1h1v-1h1v1h1v-1h2v-1h1v1h4v1h1v-1h4v1h7v-1h1v1h1v-1h1v-1h1v1h4v1h1v-1h1v1h3v-1h1v1h2v-1h3v1h3v-3h1v1h1v1h6v1h2v-2h1v1h1v1h1v-2h1v2h1v-1h1v1h1v-3h1v2h1v1h2v-2h1v2h1v-1h2v-2h1v2h1v-1h1v1h2v-2h1v-1h2v-2h1v4h1v-1h1v-1h1v4h1v-3h1v-2h1v1h1v3h1v1h1v-5h1v4h1v-2h1v2h1v-4h1v3h1v-1h2v2h1v-5h1v2h2v1h1v2h1v-2h3v2h2v-2h1v3h1v-1h1v-1h1v-2h1v-1h1v4h3v-2h2v-1h1v3h1v1h1v-2h1v-5h1v6h2v1h1v-1h4v1h1v-1h2v-3h1v2h1v2h1v-2h1v-1h1v-2h1v4h1v-4h1v1h1v2h1v2h1v-4h1v2h1v1h3v-5h1v3h1v3h1v-4h1v1h2v1h1v-1h1v-1h1v1h1v-2h3v1h1v2h1v1h1v-1h2v-3h1v4h1v-2h1v-2h1v3h1v1h1v-1h1v1h1v-2h1v-2h1v4h1v-2h1v-2h2v1h1v-1h1v3h1v-2h1v2h1v-3h1v2h1v3h1v-1h1v-2h1v1h1v2h2v-3h1v2h1v-3h1v3h1v-3h1v-1h2v3h1v1h1v-3h1v3h1v-7h1v7h1v-3h1v3h2v-1h1v-2h1v1h1v1h1v1h1v-4h1v1h1v2h1v-3h1v4h1v-3h1v4h1v-5h1v3h2v-2h1v1h1v-2h1v3h1v1h1v-4h1v2h1v-2h1v4h1v-1h2v2h2v-4h1v1h2v3h1v-1h1v1h1v-1h2v1h1v-4h2v3h1v-2h1v3h1v-3h1v3h4v-1h1v-1h1v2h1v-2h3v1h2v-1h3v2h1v-2h2v1h2v-2h2v2h1v1h1v-1h2v1h1v-1h9v1h1v-1h3v1h3v-1h3v-1h1v1h3v1h1v-1h2v1h2v-1h2v1h1v-1h1v-1h2v1h1v1h1v-1h2v1h1v-1h1v1h3v-1h1v5h-6v1h-3v-1h-1v1h-1v-1h-1v1h-2v-1h-1v1h-1v-1h-2v1h-1v-1h-1v1h-1v-1h-1v1h-5v-1h-3v2h-1v-2h-1v1h-1v-1h-1v1h-3v2h-1v-1h-1v-2h-2v1h-1v-1h-4v1h-1v-1h-2v1h-4v1h-1v-1h-1v-1h-1v3h-1v-2h-1v-1h-1v2h-1v-1h-1v1h-1v1h-2v-2h-1v-1h-1v3h-1v-1h-1v-1h-1v1h-1v-2h-1v3h-3v-3h-1v2h-1v-1h-1v1h-1v-1h-1v-1h-1v2h-1v1h-1v1h-1v-4h-1v2h-1v2h-1v1h-1v-5h-1v3h-1v-2h-1v3h-1v-3h-1v4h-1v-4h-2v1h-2v5h-1v-6h-1v2h-2v1h-2v1h-1v-2h-1v1h-1v-1h-2v1h-1v1h-1v-3h-1v-2h-1v2h-3v-1h-1v2h-2v8h-1v-7h-1v-4h-1v2h-2v3h-1v-2h-2v1h-1v-4h-1v4h-2v-4h-1v2h-1v-1h-1v3h-1v-3h-1v2h-1v-1h-1v2h-1v-1h-1v2h-1v-4h-2v4h-1v-2h-1v-2h-2v2h-2v1h-1v-1h-1v-3h-3v3h-3v1h-1v-3h-1v1h-2v2h-1v1h-2v-2h-2v-1h-1v-1h-1v3h-1v-4h-1v2h-2v1h-1v2h-1v-3h-1v8h-1v-8h-1v-1h-1v3h-1v-2h-1v-1h-1v1h-2v2h-2v1h-2v-2h-1v-2h-1v2h-1v-1h-1v2h-1v-3h-2v-1h-1v1h-1v2h-1v-2h-2v-1h-1v1h-2v6h-1v-2h-1v-4h-1v1h-1v1h-2v-1h-1v1h-1v-3h-1v2h-1v2h-1v-1h-1v-1h-1v-2h-1v1h-1v1h-1v1h-1v-3h-1v5h-1v-2h-1v-1h-1v-2h-1v3h-1v-1h-1v-1h-1v5h-1v-4h-1v2h-1v-3h-1v2h-1v-2h-3v2h-1v2h-3v-4h-1v3h-1v-1h-1v-1h-1v2h-1v1h-1v-2h-1v5h-1v-4h-1v-1h-1v1h-1v-3h-1v1h-1v-1h-1v1h-1v-1h-1v-1h-1v1h-2v1h-1v-2h-1v1h-2v1h-2v-1h-2v-1h-2v2h-1v-1h-1v-1h-1v1h-1v-1h-1v1h-1v-1h-1v1h-1v-1h-1v1h-3v-1h-1v1h-1v-1h-2v1h-3v1h-1v-2h-1v1h-2v-1h-1v1h-3v-1h-1v1h-2v-1h-4v1h-2v1h-1v-2h-1v1h-1v-1h-2v1h-4v-1h-1v1h-3v-1h-1v1h-1v-1h-1v1h-1v-1h-1v1h-1v1h-1v-1h-1v1h-1v-2h-1v2h-1v-1h-2v1h-1v-1h-2v-1h-1v1h-5v-1h-3v3h-1v-1h-1v-1h-1v-1h-1v1h-1v-1h-1v1h-1v1h-1v-1h-1v2h-1v-3h-1v3h-1v-1h-1v-2h-1v4h-1v-2h-2v1h-1v-2h-1v-1h-1v1h-1v2h-3v1h-1v-3h-1v1h-1v2h-1v-2h-1v1h-1v1h-1v-2h-1v2h-1v-1h-1v1h-2v5h-1v-5h-1v-2h-1v-1h-1v2h-2v-1h-1v2h-1v-1h-1v-3h-2v4h-1v-2h-2v-2h-2v4h-1v-3h-2v2h-1v-1h-1v6h-1v-6h-1v2h-5v-1h-2v-1h-2v-1h-2v-1h-2v2h-1v-1h-1v3h-1v-1h-1v-2h-1v2h-1v1h-1v-1h-2v1h-1v-2h-1v6h-1v-5h-1v-2h-1v2h-1v-2h-1v2h-1v-2h-5v-1h-1v3h-1v-2h-3v1h-1v-1h-1v-1h-1v3h-2v-3h-1v1h-1v2h-1v-2h-1v3h-1v-3h-2v-1h-1v2h-1v-2h-1v1h-1v-1h-1v1h-1v-1h-1v1h-2v1h-1v-2h-1v2h-1v-1h-2v-1h-3v1h-2v1h-1v-1h-2v-1h-2v2h-1v-1h-9v2h-1v-2h-1v-1h-2v1h-3v1h-1v-1h-4v-1h-3v1h-1v-1h-2v1h-9v-1h-1v3h-1v-2h-2v-1h-4v1h-2v-1h-2v1h-1v-1h-1v2h-2v-1h-1v-1h-1v1h-5v2h-1v1h-1v-2h-2v-1h-3v1h-1v-1h-1v-1h-3v1h-5v-1h-1v1h-2v-1h-6v1h-1v2h-1v-3h-1v1h-1v-1h-1v1h-1v1h-1v-1h-7v1h-2v-2h-1v1h-1v-1h-1v2h-1v-1h-1v-1h-1v1h-2v-1h-1v1h-1v-1h-2v1h-2v-1h-2v1h-1v-1h-1v1h-1v-1h-1v1h-3v1h-1v-1h-4v-1h-1v1h-1v-1h-1v1h-1v-1h-1v1h-2v-1h-7v1h-1v-1h-6v1h-1v-1h-3v1h-1v-1h-1v1h-1v2h-1v-3h-1v1h-1v-1h-1v1h-5v1h-1v6h-1v-5h-1v-1h-1v1h-1v-3h-3v2h-1v4h-2v-5h-1v2h-1v-1h-1v2h-1v-3h-1v5h-1v-5h-1v5h-1v-5h-1v3h-1v1h-1v-1h-1v-1h-1v-1h-1v3h-1v-4h-1v-1h-1v5h-4v-3h-1v4h-1v-4h-1v-1h-1v5h-1v-2h-1v-4h-2v3h-1v2h-1v-4h-1v1h-4v-1h-1v-1h-2v1h-1v-1h-4v3h-1v12h-1v-12h-1v-3h-1v1h-2v1h-1v-1h-1v-1h-3v1h-2v-1h-3v1h-1v2h-1v10h-1v-10h-1v-2h-1v-1h-1v1h-1v-1h-2v1h-2v-1h-1v2h-1v-1h-1v1h-1v-1h-1v1h-1v-2h-1v2h-1v-1h-2v-1h-1v1h-2v-1h-1v1h-1v-1h-2v1h-3v-1h-4v1h-1v-1h-1v1h-1v-1h-1v2h-1v-1h-1v-1h-2v1h-1v4h-1v-4h-3v-1h-2v1h-1v-1h-3v1h-1v-1h-1v1h-1v-1h-1v1h-3v1h-4v-2h-2v1h-3v-1h-1v1h-1v-1h-2v1h-5v-1h-2v1h-1v-1h-1v3h-1v-2h-2v1h-1v-2h-1v1h-1v-1h-2v1h-1v-1h-1v1h-1v-1h-1v1h-2v-1h-2v1h-1v-1h-1v1h-3v-1h-1v1h-5v-1h-2v1h-4v-1h-2v1h-1v-1h-5v1h-1v-1h-11v1h-1v5h-1v-5h-1v-1h-2v1h-1v1h-1v-2h-3v1h-4v-1h-1v1h-1v-1h-1v1h-2v-1h-2v1h-2v1h-1v-1h-2v-1h-2v1h-1v-1h-1v1h-1v-1h-2v1h-2v-1h-2v1h-5v-1h-3v1h-1v1h-1v-2h-1v2h-3v-1h-2v1h-1v2h-1v-2h-1v2h-2v-2h-1v-2h-1v1h-2v-1h-1v1h-1v-1h-2v1h-1v-1h-1v1h-3v-1h-2v1h-3v-1h-1v2h-1v-1h-1v1h-1v-2h-3v1h-1v1h-1v-2h-1v1h-1v-1h-2v1h-1v-1h-1v2h-1v-1h-4v3h-1v-3h-4v3h-1v-3h-2v-1h-3v1h-1v1h-1v-2h-6v1h-3v-1h-2v1h-1v-1h-2v1h-2v-1h-2v1h-1v-1h-2v1h-2v-1h-2v1h-1v-1h-2v1h-1v-1h-3v1h-2v-1h-1v1h-1v-1h-2v1h-1v-1h-2v1h-1v-1h-1v1h-2v-1h-1v2h-1v7h-1v-7h-1v-1h-2v1h-1v7h-1v-7h-3v-1h-1v3h-1v-3h-1v5h-1v-4h-1v1h-1v-2h-1v-1h-1v2h-1v2h-1v-2h-1v6h-1v-6h-1v1h-1v-2h-1v6h-2v-2h-1v-1h-1v3h-2v-7h-1v1h-1v4h-1v3h-2v-3h-1v-2h-1v1h-1v-2h-1v5h-1v-2h-1v-4h-1v2h-1v8h-1v-4h-1v-2h-1v2h-2v-1h-1v-4h-1v1h-1v4h-1v-1h-1v-3h-2v5h-1v-1h-3v-4h-1v5h-1v-6h-2v7h-1v-7h-1v6h-1v-4h-2v1h-1v-1h-1v1h-1v-4h-1v2h-1v4h-1v-6h-1v5h-1v-5h-1v2h-1v2h-1v2h-1v1h-2v-6h-1v6h-4v-2h-1v-1h-3v-3h-1v-1h-1v-1h-2v5h-1v1h-1v1h-1v-1h-1v-3h-1v-3h-2v1h-1v3h-1v2h-1v-4h-1v-1h-1v2h-1v-1h-1v-1h-1v2h-3v5h-1v-6h-2v-2h-1z"/>
<path d="M278 729h1v-2h1v2h1v-2h1v2h1v-1h2v1h1v-1h2v1h1v-1h1v-1h4v2h5v-2h1v1h1v1h4v-1h1v1h2v-1h3v1h1v-1h1v1h1v-1h1v1h2v-2h1v2h3v-1h1v1h1v-1h1v-1h1v-1h1v2h2v1h1v-1h1v1h1v-1h1v1h1v-1h2v1h1v-1h6v-1h1v2h1v-1h1v1h3v-1h1v1h3v-1h3v1h1v-1h3v1h1v-2h1v2h1v-2h1v1h1v1h2v-1h1v1h6v-1h2v1h3v-1h1v1h1v-1h1v1h3v-1h2v1h1v-1h2v1h1v-2h1v2h2v-1h3v1h1v-1h2v1h1v-1h4v1h1v-1h4v1h1v-1h1v1h1v-2h1v-2h1v1h1v-2h1v-1h1v2h2v1h1v-2h1v5h1v-4h2v1h1v-2h1v-3h1v6h1v2h1v-1h1v1h4v-2h1v1h1v1h1v-2h1v1h1v1h2v-1h1v1h1v-1h1v1h2v-1h1v1h2v-1h1v-1h1v1h1v1h3v-2h1v-1h1v1h1v-2h1v2h1v1h1v-1h1v2h1v-2h1v-1h2v3h1v-2h1v-10h1v10h1v2h5v-1h1v1h1v-1h1v-1h1v2h2v-1h1v1h1v-2h1v1h2v1h1v-2h1v1h3v1h1v-1h1v-2h1v2h4v-2h1v2h5v-1h1v1h2v-2h1v3h1v-1h1v1h1v-1h1v-2h1v2h1v-2h1v2h1v-2h1v2h1v-2h1v2h2v-5h1v4h1v1h1v1h2v-4h1v2h1v-2h4v3h1v-1h1v-2h1v1h1v-1h2v3h1v-1h1v2h2v-1h1v-6h1v6h1v1h1v-3h2v1h1v2h2v-1h1v-2h1v2h3v1h2v-2h1v1h1v-1h1v1h2v1h1v-1h1v-1h1v2h1v-3h1v2h1v-2h2v1h1v-1h1v1h1v-1h2v3h1v-2h1v-1h1v2h2v1h1v-1h1v-2h1v2h2v-1h1v-1h1v1h1v1h6v-2h1v1h1v1h3v-1h1v2h1v-1h1v1h1v-1h3v1h2v-1h1v1h3v-1h1v1h3v-1h3v1h6v-1h1v1h2v-1h3v1h1v-1h5v1h1v-1h3v1h1v-3h1v3h1v-1h1v1h2v-1h1v1h2v-1h2v1h2v-1h1v1h2v-2h2v2h1v-1h1v1h7v-1h3v1h1v-1h1v1h1v-1h1v-1h1v1h1v1h2v-1h6v1h2v-1h2v1h1v-1h1v1h1v-3h1v2h1v1h4v-1h1v1h1v-1h1v1h1v-1h1v1h1v-1h3v1h4v-3h1v3h1v-1h3v1h2v-1h6v1h1v-1h7v-1h1v2h1v-1h1v1h1v-2h1v1h1v1h3v-1h3v1h2v-1h4v1h1v-1h2v1h1v-2h1v2h1v-1h1v1h3v-1h1v1h4v-1h2v1h3v-1h1v1h2v-1h1v1h3v-1h1v-2h1v2h2v1h1v-1h5v1h5v-1h1v-1h3v1h1v-1h1v1h1v-1h2v1h2v-1h1v-1h1v3h1v-2h1v2h1v-1h3v1h2v-1h1v1h1v-1h3v1h1v-1h1v1h2v-1h1v-1h1v1h1v1h1v-1h1v1h1v-1h1v-1h1v1h1v1h2v-1h1v1h5v-1h4v1h2v-1h1v1h1v-1h2v1h1v-1h1v-1h1v2h1v-1h1v1h2v-1h6v1h4v-1h3v1h2v-1h1v1h3v-2h1v1h2v1h1v-1h1v1h1v-1h2v1h3v-1h1v1h1v-2h1v-1h1v2h2v-2h1v2h1v-2h1v2h1v-2h1v2h1v-1h2v1h1v-2h1v1h2v1h1v1h1v-1h1v-1h1v2h4v-2h1v1h1v1h1v-1h2v1h3v-1h1v-2h1v2h1v-1h1v1h1v-2h1v1h1v1h3v1h1v-1h1v-1h1v2h1v-2h1v2h2v-1h2v1h1v-1h2v1h5v-1h1v1h1v-1h2v1h2v-1h2v-1h1v1h1v1h1v-1h1v1h3v-1h1v1h1v-1h1v1h4v-1h1v1h6v-1h1v1h1v-1h1v1h5v-1h3v-1h1v1h3v1h1v-1h2v1h9v-1h2v1h2v-1h2v1h1v-1h1v1h1v-1h2v-1h2v1h3v1h1v-1h1v1h3v-1h1v1h3v-1h2v1h2v-1h1v-1h1v1h2v-1h2v2h3v-1h1v1h1v-1h1v1h3v-1h3v1h3v-1h1v-1h2v2h1v-2h1v2h1v-1h1v1h1v-1h1v1h5v-1h1v-2h1v3h5v-1h3v1h7v-1h1v1h1v-1h1v1h3v-1h1v-1h1v-2h1v4h1v-1h2v1h13v-1h1v1h2v-1h3v1h1v-1h1v-1h1v1h3v1h2v-1h1v1h2v-1h1v1h9v-1h1v1h2v-1h1v1h2v-1h3v1h5v-1h1v1h2v-1h2v1h4v-1h2v1h1v-1h2v1h1v-2h2v1h2v1h14v-3h2v3h4v-1h1v1h8v-1h2v1h5v-1h3v-1h1v2h1v-1h2v1h4v-1h6v1h3v-1h1v1h4v-1h1v-2h1v2h2v1h3v-1h2v1h2v-3h2v2h1v-1h1v1h1v1h3v-1h2v1h1v-1h3v1h3v-1h1v1h3v-2h2v1h2v1h7v-1h1v1h4v-1h1v1h2v-1h3v1h1v-1h1v1h1v-1h2v1h1v-1h1v1h1v-1h2v1h6v-2h2v1h3v1h1v-1h7v1h1v-1h2v1h1v-1h3v1h1v-1h1v1h3v-1h1v1h1v-1h1v1h1v-1h6v1h1v-1h6v1h1v-1h1v1h1v-1h1v1h1v-2h1v1h2v-1h2v2h1v-1h3v1h2v-1h1v1h14v-1h1v-1h2v1h1v1h2v-2h1v2h2v-1h1v-3h1v2h1v2h3v-1h2v1h3v-1h1v1h1v-1h1v1h2v-1h1v1h1v5h-2v-1h-2v2h-1v-2h-4v2h-1v-1h-1v-1h-1v1h-1v1h-1v-1h-2v3h-1v-3h-1v-1h-1v1h-2v-1h-1v1h-5v-1h-4v1h-3v-1h-2v1h-2v-1h-1v1h-1v-1h-1v1h-3v-1h-1v1h-1v-1h-1v1h-2v1h-1v-1h-1v-1h-1v1h-1v-1h-2v1h-1v-1h-2v1h-1v1h-2v-2h-1v2h-2v-1h-6v-1h-1v1h-1v-1h-2v1h-1v-1h-1v1h-3v-1h-1v1h-2v-1h-1v1h-3v2h-1v-3h-1v1h-6v-1h-1v1h-1v1h-1v-1h-1v1h-1v-1h-1v-1h-4v1h-1v-1h-1v3h-1v-2h-1v1h-1v-2h-1v1h-1v-1h-1v1h-3v-1h-4v1h-2v1h-1v-2h-1v1h-1v-1h-2v1h-2v-1h-1v1h-1v-1h-3v1h-3v1h-1v-2h-1v1h-1v-1h-3v1h-2v-1h-1v2h-1v-2h-1v2h-1v-2h-6v2h-1v-2h-1v2h-1v-1h-1v-1h-2v1h-1v-1h-1v1h-1v-1h-2v1h-4v-1h-3v1h-1v-1h-1v2h-1v-1h-1v-1h-1v1h-1v-1h-2v1h-1v1h-1v-1h-2v-1h-1v1h-1v-1h-3v1h-1v-1h-1v1h-2v-1h-1v1h-1v-1h-5v3h-1v-2h-2v-1h-6v1h-1v-1h-2v1h-2v2h-1v-2h-1v1h-1v-1h-1v1h-1v-1h-1v-1h-1v1h-1v-1h-2v1h-1v-1h-4v1h-4v-1h-1v1h-2v-1h-2v1h-1v-1h-1v1h-1v-1h-3v1h-2v-1h-2v1h-1v-1h-5v1h-2v-1h-2v1h-4v-1h-1v1h-2v1h-1v-1h-1v-1h-7v2h-1v-2h-3v1h-1v-1h-4v1h-1v-1h-3v1h-2v-1h-1v1h-1v-1h-1v1h-1v-1h-2v1h-1v-1h-6v1h-2v-1h-2v1h-1v2h-1v-2h-1v-1h-2v1h-1v-1h-1v1h-2v-1h-2v1h-2v-1h-5v1h-1v-1h-1v1h-1v-1h-2v1h-2v-1h-1v1h-1v-1h-3v1h-1v-1h-1v1h-1v1h-1v-1h-2v5h-1v-5h-1v1h-2v1h-1v-2h-1v-1h-1v3h-1v-2h-2v1h-2v-2h-1v1h-2v-1h-1v1h-1v1h-1v-1h-6v-1h-1v1h-5v-1h-1v1h-2v1h-1v-1h-2v-1h-5v1h-1v1h-1v1h-1v-2h-1v1h-1v-1h-2v-1h-2v1h-1v-1h-1v2h-1v-2h-1v1h-1v-1h-1v1h-1v1h-1v-2h-1v1h-1v-1h-4v2h-1v-1h-1v-1h-2v1h-3v-1h-1v1h-1v-1h-1v1h-1v-1h-5v1h-2v-1h-11v1h-2v1h-1v-2h-2v1h-1v-1h-5v1h-1v-1h-2v1h-1v1h-1v-2h-2v1h-1v-1h-2v1h-1v-1h-2v1h-1v-1h-1v1h-2v-1h-3v2h-2v-1h-1v-1h-1v2h-1v-2h-2v1h-1v1h-1v-1h-3v-1h-1v2h-1v-2h-1v1h-1v-1h-2v3h-1v-3h-1v1h-1v-1h-3v1h-5v1h-1v-1h-1v-1h-1v1h-2v2h-1v-1h-2v1h-1v-1h-1v-1h-1v2h-1v-1h-1v-1h-2v2h-1v-2h-3v-1h-3v1h-2v-1h-1v1h-1v-1h-1v1h-1v-1h-1v1h-4v-1h-4v3h-1v-2h-6v1h-1v1h-1v-3h-1v1h-2v-1h-2v1h-2v-1h-2v1h-3v-1h-2v1h-1v-1h-2v1h-1v1h-1v-1h-1v-1h-2v1h-1v-1h-2v1h-6v1h-1v1h-1v-2h-3v2h-1v-1h-1v-1h-1v1h-1v-1h-3v-1h-3v1h-1v-1h-2v1h-1v-1h-1v1h-1v-1h-2v1h-1v1h-1v-1h-2v1h-2v-1h-2v-1h-1v2h-1v-2h-1v2h-1v-1h-2v-1h-3v1h-1v-1h-1v1h-1v-1h-4v1h-1v-1h-2v1h-2v-1h-2v3h-1v-3h-3v1h-2v-1h-1v1h-1v-1h-3v1h-4v-1h-2v1h-1v-1h-4v1h-1v-1h-3v1h-2v2h-1v-3h-4v1h-4v1h-1v-2h-2v1h-1v-1h-1v1h-2v-1h-3v3h-2v-3h-1v1h-1v-1h-1v2h-1v-1h-1v-1h-2v1h-1v-1h-1v1h-1v-1h-1v1h-1v1h-1v-2h-2v1h-1v-1h-5v1h-2v1h-1v-1h-1v-1h-4v1h-1v-1h-2v1h-2v1h-2v-1h-4v-1h-1v1h-3v-1h-1v3h-1v-3h-2v3h-1v-1h-1v-1h-1v-1h-1v1h-3v-1h-1v2h-1v-1h-3v-1h-6v1h-2v-1h-1v1h-3v-1h-1v2h-1v-1h-3v-1h-3v1h-1v-1h-1v1h-2v-1h-1v1h-2v-1h-1v3h-1v-1h-2v-1h-4v-1h-4v1h-1v1h-2v-2h-3v1h-2v-1h-4v1h-1v-1h-3v1h-4v-1h-1v1h-4v1h-1v-2h-1v1h-1v1h-1v-2h-1v2h-1v2h-1v-1h-2v-1h-1v-1h-1v-1h-3v1h-1v3h-1v-2h-1v-2h-1v3h-1v-1h-1v-2h-1v3h-2v-3h-1v4h-1v-3h-1v3h-2v-4h-1v1h-1v2h-1v-2h-1v2h-1v-2h-2v-1h-1v2h-2v-2h-1v2h-1v-1h-1v2h-1v-2h-3v-1h-1v1h-1v-1h-2v1h-1v1h-1v2h-1v-3h-1v1h-1v1h-1v-2h-2v2h-1v2h-1v-4h-1v2h-1v1h-1v-4h-1v1h-2v6h-1v-5h-1v1h-1v1h-1v-3h-1v3h-1v-1h-1v1h-1v-1h-2v-3h-2v1h-1v-1h-1v3h-1v2h-1v-4h-3v1h-2v1h-1v1h-1v-3h-1v-1h-1v3h-1v-3h-3v1h-1v1h-1v1h-1v1h-1v-2h-1v2h-1v-3h-1v-1h-1v3h-2v-2h-1v-1h-1v1h-3v1h-1v-2h-1v1h-1v-1h-1v1h-2v-1h-1v1h-2v-1h-1v1h-1v-1h-4v1h-1v2h-1v-3h-2v2h-1v-2h-1v1h-2v1h-1v8h-1v-7h-2v-3h-2v2h-2v7h-1v-6h-1v1h-1v-3h-1v2h-1v-3h-1v2h-1v-2h-2v1h-2v-1h-5v1h-2v-1h-1v1h-1v-1h-3v1h-3v-1h-1v1h-2v-1h-4v1h-2v4h-1v1h-1v-2h-1v1h-1v1h-1v-5h-1v5h-1v-2h-2v-2h-1v2h-1v2h-1v1h-1v-3h-1v-2h-1v-1h-5v-1h-1v1h-1v-1h-3v1h-1v-1h-1v1h-1v-1h-1v1h-1v-1h-3v1h-2v1h-1v-1h-1v-1h-1v1h-1v-1h-1v1h-1v1h-1v-2h-1v2h-1v-2h-2v1h-3v-1h-2v1h-1v-1h-2v1h-1v-1h-3v2h-1v-1h-1v-1h-2v1h-1v-1h-1v1h-2v-1h-1v1h-1v1h-1v-1h-2v-1h-3v3h-1v-3h-1v1h-2v-1h-1v1h-1v-1h-2v1h-2v-1h-1v1h-1v2h-3v-2h-4v-1h-1v1h-1v-1h-1v1h-1v-1h-5v1h-1v-1h-1v1h-1v-1h-1v1h-1v-1h-2v1h-1v-1h-2v1h-4v-1h-1v2h-1v-1h-1v-1h-1v2h-1v-2h-2v1h-1v-1h-3v2h-1v-1h-1v-1h-2v1h-2v1h-1v-1h-2v-1h-1v2h-1v-1h-2v-1h-2v2h-1v-2h-1v1h-2v-1h-1v1h-1v-1h-1z"/>
<path d="M278 759h1v-1h4v1h4v-1h2v1h5v-1h1v1h3v-2h1v1h2v1h2v-1h1v1h5v-1h2v1h2v-1h1v-1h1v2h2v-1h1v1h2v-1h1v1h2v-1h7v1h1v-1h1v1h5v-1h1v1h1v-1h4v1h3v-1h2v1h1v-1h3v-1h2v1h1v1h1v-1h1v1h1v-1h5v1h2v-1h1v1h1v-1h1v1h1v-1h3v1h8v-1h1v1h2v-1h1v1h2v-1h1v1h1v-1h1v1h3v-1h2v1h1v-2h1v1h1v1h1v-2h1v1h2v1h2v-2h2v1h3v-1h1v2h1v-1h2v1h2v-2h1v2h2v-1h2v1h2v-2h3v2h3v-1h1v1h3v-1h1v-1h1v1h1v1h5v-1h3v1h2v-1h2v1h2v-1h1v1h1v-2h1v1h2v1h2v-2h1v1h2v1h1v-1h1v-1h1v1h5v1h1v-1h1v1h1v-1h6v1h1v-1h2v-1h1v2h2v-2h3v-1h1v3h1v-3h1v3h1v-2h1v-1h2v1h1v1h4v1h2v-1h2v1h8v-1h1v1h1v-1h4v-1h1v1h3v-1h1v1h1v-1h1v2h1v-2h3v1h1v1h1v-1h2v1h1v-2h1v2h3v-1h1v1h3v-1h2v1h1v-1h1v1h1v-1h1v1h3v-1h2v-1h1v2h1v-1h2v1h4v-1h1v1h3v-1h1v1h5v-1h2v1h2v-1h1v-1h2v1h1v1h1v-2h1v2h3v-1h1v1h1v-2h1v1h2v1h2v-2h1v2h4v-1h3v-1h2v2h3v-1h2v1h1v-1h2v1h1v-1h1v1h1v-1h2v1h2v-2h1v2h1v-1h3v-1h1v1h2v1h2v-1h2v1h3v-1h1v1h1v-1h1v1h2v-1h2v-1h1v1h3v-1h1v1h1v-2h1v2h1v-1h1v2h1v-1h1v1h2v-1h2v1h1v-6h1v5h1v1h5v-1h1v-1h3v1h2v1h2v-1h2v1h2v-1h1v1h1v-1h1v1h6v-1h5v1h1v-1h2v1h5v-2h1v1h1v-1h1v2h2v-1h2v1h2v-1h2v-1h2v2h1v-1h1v1h6v-1h2v1h1v-2h1v2h1v-1h4v1h1v-1h1v1h4v-1h4v1h1v-1h1v1h1v-2h1v1h1v-1h1v2h2v-1h1v1h2v-1h1v1h4v-1h1v1h1v-1h2v1h3v-1h1v-1h4v2h1v-2h1v1h3v1h1v-1h3v1h2v-1h1v1h5v-2h1v2h6v-1h1v1h2v-1h2v1h1v-2h2v2h1v-1h1v-1h1v1h4v1h2v-1h1v1h2v-1h1v1h1v-1h1v1h1v-2h1v1h1v1h1v-1h1v-1h1v1h2v1h1v-1h1v-1h1v1h1v1h1v-1h1v1h11v-1h2v1h1v-6h1v6h8v-2h1v2h3v-1h2v1h1v-1h1v1h2v-1h1v-1h1v2h1v-1h3v-1h1v1h2v1h7v-1h1v1h6v-1h2v1h2v-1h1v1h1v-1h3v-1h1v2h1v-1h1v-1h1v1h2v1h3v-1h1v-1h1v2h2v-1h1v1h5v-2h2v2h2v-1h1v1h4v-2h1v1h1v1h1v-1h1v1h1v-1h1v-1h1v2h1v-1h1v1h1v-1h4v1h1v-1h1v1h3v-1h1v1h2v-1h1v1h2v-1h2v-1h1v2h1v-1h2v-1h1v1h2v-1h1v2h5v-1h1v1h2v-1h3v1h5v-1h2v1h4v-1h2v1h2v-1h1v1h1v-1h1v1h1v-1h1v1h2v-1h1v-1h1v2h4v-1h4v1h2v-1h1v1h5v-1h1v1h1v-1h1v1h1v-4h1v3h4v1h1v-1h2v1h3v-1h2v1h1v-1h1v1h4v-1h1v1h1v-1h5v1h6v-1h1v1h1v-2h1v2h1v-1h2v-1h1v2h2v-1h1v1h2v-1h1v1h1v-1h5v1h9v-2h1v2h3v-1h1v1h1v-1h3v1h1v-1h2v1h1v-2h1v2h2v-1h1v1h1v-1h2v-1h3v1h2v1h2v-1h1v1h2v-1h1v1h1v-1h2v1h1v-1h1v-1h1v2h4v-1h1v1h3v-2h1v2h2v-1h5v1h1v-1h1v1h17v-4h1v4h3v-1h1v1h1v-1h2v-1h1v1h2v1h1v-1h1v1h4v-1h1v1h1v-1h2v1h2v-1h1v1h3v-2h1v1h2v1h1v-2h1v2h1v-2h1v2h1v-1h1v1h1v-1h1v-1h1v1h1v-3h1v3h1v1h2v-1h1v1h5v-1h1v1h3v-1h1v1h1v-2h1v2h1v-2h1v2h2v-1h2v-1h1v1h1v1h2v-1h3v-1h1v-2h1v2h1v-2h1v1h2v3h2v-2h2v1h1v-1h1v1h1v1h2v-1h2v-1h1v1h1v1h1v-1h1v-1h1v2h2v-1h1v-3h1v4h4v-1h3v-1h1v1h5v-1h1v1h1v1h1v-2h1v2h2v-1h2v-1h1v2h8v-2h1v1h1v-1h1v2h1v-1h1v1h1v-1h1v1h1v-1h1v1h9v-1h1v-1h2v1h3v1h2v-1h4v-2h1v2h1v-2h5v1h1v2h1v-3h1v3h1v-2h1v1h1v-1h1v2h1v-1h3v-1h1v2h3v-1h1v-1h1v-1h1v1h1v-1h2v1h2v2h1v-2h1v2h1v-1h1v1h4v-1h1v1h1v-4h1v4h5v-1h3v1h1v-1h3v1h4v-1h1v1h1v-1h2v1h4v-1h1v1h4v-1h1v1h3v-1h1v-1h1v2h1v-1h2v1h2v-1h1v1h2v-1h1v1h1v-1h1v1h3v-1h1v1h3v-1h1v1h2v-1h1v1h1v-1h3v-3h1v3h1v1h1v-2h1v2h4v4h-2v1h-2v-1h-1v2h-2v5h-1v-5h-1v-1h-1v-1h-1v1h-2v1h-1v-2h-1v1h-2v-1h-3v1h-1v-1h-3v1h-1v-1h-1v1h-1v-1h-2v1h-7v-1h-2v1h-1v-1h-4v1h-1v-1h-2v2h-1v-2h-3v1h-1v1h-1v-1h-1v-1h-4v1h-2v-1h-1v1h-5v-1h-1v1h-1v-1h-1v1h-1v1h-1v-1h-1v-1h-3v1h-1v-1h-1v1h-1v-1h-1v1h-1v1h-1v1h-2v-2h-2v1h-1v1h-2v-3h-2v1h-7v1h-1v-2h-1v1h-1v2h-1v-1h-1v-1h-1v1h-1v1h-1v-2h-4v2h-2v-2h-1v-1h-2v1h-1v-1h-2v1h-1v-1h-1v1h-1v-1h-1v1h-3v-1h-9v1h-7v-1h-9v1h-2v1h-1v-2h-2v1h-6v-1h-1v1h-1v-1h-1v1h-1v-1h-1v1h-2v-1h-3v2h-1v3h-1v-4h-1v-1h-2v1h-1v1h-1v-2h-3v1h-3v-1h-1v2h-1v-2h-2v2h-1v-1h-3v3h-1v-2h-1v2h-4v-3h-2v-1h-4v2h-1v-1h-5v-1h-5v1h-1v-1h-3v2h-1v-2h-4v1h-3v4h-1v-4h-4v-1h-2v2h-1v-2h-2v1h-3v-1h-5v1h-1v-1h-2v1h-1v1h-1v-1h-1v-1h-4v1h-1v-1h-1v1h-2v-1h-4v1h-4v4h-1v-4h-2v-1h-1v1h-1v-1h-3v1h-3v1h-1v-1h-1v-1h-6v1h-1v-1h-1v2h-1v-2h-1v1h-2v-1h-1v1h-2v-1h-1v1h-1v-1h-4v1h-2v-1h-5v2h-1v-1h-1v-1h-2v1h-2v-1h-1v1h-3v-1h-1v1h-2v-1h-2v1h-2v-1h-1v1h-3v-1h-1v1h-1v-1h-1v1h-1v-1h-3v1h-2v-1h-1v1h-1v-1h-1v1h-1v-1h-5v1h-1v-1h-3v1h-2v-1h-1v1h-1v-1h-1v1h-2v-1h-2v1h-2v-1h-1v1h-2v-1h-2v1h-2v-1h-5v2h-2v-1h-4v-1h-5v1h-2v-1h-1v1h-3v1h-1v-2h-1v2h-2v-1h-4v6h-1v-6h-1v-1h-1v1h-1v-1h-7v1h-4v-1h-2v1h-1v-1h-3v1h-2v-1h-1v1h-2v-1h-1v1h-3v-1h-3v1h-1v-1h-5v1h-1v-1h-1v1h-1v-1h-1v1h-1v-1h-1v1h-2v-1h-3v2h-1v-1h-1v-1h-3v1h-1v-1h-2v1h-1v1h-2v-1h-1v1h-1v-1h-3v-1h-9v1h-1v-1h-4v1h-1v-1h-1v2h-1v-1h-6v-1h-1v2h-1v-1h-1v-1h-3v1h-6v-1h-4v1h-2v-1h-6v1h-5v1h-1v-2h-1v1h-1v-1h-1v1h-1v-1h-3v1h-1v-1h-1v1h-1v-1h-3v1h-2v-1h-1v1h-2v-1h-2v1h-1v-1h-1v1h-2v1h-1v-1h-2v-1h-1v1h-1v-1h-5v1h-2v-1h-2v1h-1v1h-2v-2h-5v1h-1v-1h-2v1h-1v1h-2v-2h-1v1h-2v-1h-3v1h-1v-1h-3v1h-1v-1h-1v1h-1v-1h-2v1h-1v1h-1v-1h-2v1h-1v-2h-1v1h-3v-1h-1v1h-3v-1h-7v1h-3v-1h-1v1h-4v-1h-2v1h-1v-1h-2v1h-2v-1h-2v1h-1v-1h-1v1h-1v1h-2v-2h-1v1h-1v-1h-1v1h-1v-1h-1v1h-2v-1h-2v1h-1v1h-1v-2h-1v1h-3v-1h-1v2h-1v-2h-1v1h-1v1h-3v-1h-5v-1h-4v1h-3v-1h-1v1h-1v-1h-2v1h-1v1h-1v-1h-2v-1h-2v1h-3v-1h-1v1h-1v-1h-3v1h-1v-1h-1v1h-2v-1h-1v1h-1v-1h-2v1h-1v-1h-1v1h-3v1h-1v-1h-1v-1h-3v2h-3v1h-3v-1h-1v-2h-1v1h-1v1h-1v-1h-1v2h-1v-2h-1v4h-1v-4h-1v-1h-7v1h-1v1h-1v-1h-2v-1h-2v1h-1v-1h-7v1h-1v-1h-3v2h-1v-2h-2v1h-3v1h-2v-2h-5v1h-2v4h-1v-4h-1v2h-1v-3h-1v1h-2v2h-1v-2h-1v-1h-1v2h-3v1h-1v-3h-3v1h-2v-1h-4v1h-5v1h-1v-2h-2v1h-1v-1h-1v1h-1v-1h-2v1h-3v-1h-3v1h-2v-1h-1v1h-1v-1h-4v1h-1v-1h-4v2h-1v-2h-2v1h-1v-1h-8v1h-2v1h-1v-1h-1v-1h-3v1h-1v1h-1v-1h-1v-1h-2v1h-1v1h-1v-1h-3v1h-1v-1h-1v-1h-4v1h-1v-1h-1v2h-1v-2h-4v1h-1v1h-2v-2h-4v2h-1v-1h-1v-1h-2v1h-1v-1h-1v1h-1v1h-1v-1h-1v-1h-4v1h-2v-1h-3v1h-2v-1h-3v1h-1v-1h-1v2h-1v-2h-1v1h-1v-1h-1v2h-1v-1h-2v-1h-1v2h-1v-1h-3v-1h-1v1h-1v-1h-1v1h-1v-1h-2v1h-2v-1h-4v2h-1v-2h-2v1h-3v-1h-2v3h-2v-2h-1v2h-1v-2h-1v2h-3v-2h-1v1h-1v-2h-1v2h-1v-2h-1v1h-2v-1h-1v1h-2v-1h-3v1h-1v1h-1v-1h-1v-1h-1v2h-1v-2h-2v1h-1v-1h-1v1h-1v1h-1v-2h-2v2h-1v-1h-5v1h-1v-2h-1v1h-2v-1h-1v1h-1v-1h-1v1h-1v1h-1v-1h-2v-1h-1v1h-1v-1h-8v1h-2v1h-1v-2h-1v1h-1v1h-1v-1h-3v-1h-8v1h-2v-1h-1v1h-2v-1h-1v2h-2v-1h-1v1h-1v-1h-1v-1h-1v1h-1v1h-3v-2h-1v1h-2v-1h-5v2h-1v-1h-5v-1h-9v1h-2v-1h-2v1h-4v1h-1v-1h-2v-1h-1v1h-1v-1h-1v1h-2v-1h-2v2h-1v-1h-2v1h-2v1h-1v-1h-1v-2h-1v1h-2v-1h-1v2h-2v-2h-1v1h-1v-1h-1v2h-1v-2h-1v2h-1v-2h-4v1h-1v1h-1v-1h-1v-1h-1v1h-1v-1h-2v1h-1v-1h-1v2h-1v-1h-2v1h-1v-1h-1v1h-1v-2h-2v1h-2v-1h-2v1h-3v-1h-9v2h-2v-2h-3v1h-7v-1h-1v1h-1v-1h-1v1h-1v-1h-2v1h-1v1h-1v-2h-1v1h-1z"/>
<path d="M278 789h1v-1h2v1h1v-1h2v1h2v-1h3v-1h1v2h1v-1h1v1h2v-1h1v1h1v-1h4v1h1v-1h1v1h1v-1h3v1h2v-1h1v1h1v-1h1v-1h1v1h5v-3h1v3h1v1h1v-1h2v1h2v-1h2v-1h1v2h1v-1h1v1h2v-1h1v1h1v-1h1v1h2v-1h1v1h1v-2h1v-1h2v-1h1v3h1v1h1v-2h1v-1h2v1h2v1h2v-2h1v1h1v2h2v-1h1v1h4v-1h1v1h2v-1h3v1h1v-1h2v1h1v-1h2v-1h1v1h1v-1h1v1h2v1h2v-1h1v1h1v-1h1v1h1v-1h3v-1h1v1h1v1h1v-1h4v1h2v-1h1v1h2v-1h1v1h1v-1h2v1h1v-1h1v1h1v-1h2v1h2v-1h3v1h1v-1h1v1h1v-1h3v1h2v-2h1v1h2v1h1v-1h3v1h1v-1h3v1h1v-1h1v1h5v-1h1v1h1v-1h1v1h2v-1h3v1h4v-1h1v-1h1v1h1v1h1v-1h1v1h1v-1h1v1h1v-2h2v1h1v1h1v-1h1v-1h2v2h1v-2h2v2h1v-2h2v1h2v1h1v-1h2v1h1v-1h2v1h1v-1h2v1h2v-2h1v1h3v1h2v-2h2v1h2v-1h2v1h2v1h1v-1h2v1h3v-1h4v1h5v-1h1v1h2v-2h3v1h4v1h2v-1h4v1h1v-1h1v1h2v-1h1v1h5v-1h1v1h1v-1h4v1h3v-1h5v1h1v-2h1v1h1v1h2v-1h1v1h1v-1h1v1h1v-1h1v1h1v-2h1v2h1v-1h3v1h2v-2h1v1h1v1h1v-2h1v1h1v1h1v-1h1v1h1v-1h2v1h1v-1h1v-3h1v4h1v-1h2v-1h1v1h1v1h1v-1h2v1h1v-1h2v1h1v-1h1v1h2v-1h1v1h2v-1h2v1h2v-1h3v1h13v-1h1v-1h1v2h1v-1h1v1h1v-1h1v1h3v-2h1v2h1v-2h1v1h4v-1h1v1h1v1h1v-1h1v-1h1v1h1v1h3v-2h2v-1h1v2h1v1h3v-1h1v1h4v-1h2v-1h1v1h3v1h2v-1h4v1h1v-1h4v1h1v-1h1v1h3v-1h7v1h1v-1h4v1h1v-2h1v2h4v-1h4v1h1v-1h1v1h1v-1h1v1h5v-1h4v1h1v-1h2v1h1v-2h1v2h1v-1h1v1h1v-1h1v1h1v-2h1v1h7v1h1v-1h3v1h1v-1h5v1h2v-1h3v1h1v-1h1v1h1v-1h2v1h2v-1h4v1h1v-1h1v1h3v-1h1v1h7v-1h1v1h2v-2h1v1h2v1h1v-1h1v1h3v-1h1v1h2v-1h1v1h7v-1h1v1h1v-1h2v1h1v-1h3v-1h1v1h1v1h1v-2h1v1h3v-1h2v1h1v1h1v-2h1v1h1v-1h1v2h1v-1h1v-1h1v1h1v1h1v-2h1v1h1v1h2v-1h2v1h1v-2h2v2h1v-1h1v1h2v-2h1v1h1v1h7v-1h2v-1h1v1h2v1h6v-1h1v-1h1v1h2v1h3v-1h1v1h5v-1h4v1h3v-1h1v1h1v-1h1v1h1v-1h1v1h7v-1h2v1h1v-1h2v1h1v-2h1v2h2v-1h1v1h1v-1h2v1h1v-1h1v1h1v-1h2v1h1v-2h1v1h1v1h9v-2h2v1h1v1h3v-2h1v2h1v-1h1v1h1v-1h1v1h1v-1h2v1h1v-1h1v1h1v-1h1v-1h1v2h6v-1h1v1h1v-1h2v1h1v-1h1v1h1v-1h3v1h1v-2h1v1h1v1h3v-1h1v1h3v-1h1v-1h1v2h1v-1h2v1h16v-1h1v1h1v-1h1v-1h2v2h2v-1h1v1h2v-1h1v1h2v-1h1v1h7v-1h1v1h1v-1h1v1h1v-1h1v1h1v-1h1v1h1v-1h1v-1h1v1h5v1h6v-1h2v1h2v-1h1v1h3v-1h1v1h1v-1h1v1h2v-1h1v1h1v-1h3v1h1v-1h1v-1h1v1h2v-1h4v1h3v1h2v-1h1v1h1v-1h1v1h2v-1h2v1h1v-1h1v1h4v-1h2v1h4v-6h1v5h1v1h1v-1h1v-1h2v2h1v-1h2v-1h1v1h1v-1h2v1h2v1h1v-1h1v1h3v-1h1v1h4v-1h1v1h1v-1h1v1h1v-1h2v1h1v-1h1v-1h1v1h1v1h1v-1h1v-1h1v1h1v-1h1v1h1v1h6v-1h2v1h2v-1h1v1h4v-1h2v1h1v-1h2v1h2v-1h3v1h2v-1h2v1h1v-1h1v1h2v-1h4v1h1v-1h1v1h2v-1h1v1h1v-1h1v1h1v-1h1v1h1v-1h2v1h3v-1h1v1h1v-2h1v2h2v-1h1v1h1v-1h1v1h1v-1h2v1h1v-2h1v2h1v-1h1v1h1v-1h1v1h2v-1h1v1h2v-1h2v1h3v-1h1v1h1v-1h2v1h3v-1h2v-1h1v1h1v1h1v-1h1v1h1v-2h1v1h1v-1h1v1h2v-1h1v2h2v-1h2v1h2v-1h1v1h1v-1h1v1h1v-1h1v1h1v-2h1v1h1v1h5v-2h1v2h4v-1h3v1h1v-1h2v1h2v-1h3v1h1v-1h1v1h6v-1h1v1h3v-1h1v1h1v-1h2v1h4v-1h1v1h3v-1h4v1h2v-1h1v1h1v-2h1v2h2v-1h2v1h1v-1h1v-1h1v2h1v-1h2v-1h4v1h1v1h2v-1h1v1h2v-1h1v1h5v-1h1v1h1v-1h2v1h3v-1h1v-1h3v1h1v1h2v-1h1v1h5v-1h1v1h5v-1h1v1h1v-1h2v1h2v-1h1v1h1v-1h2v1h4v-1h2v1h2v-1h1v1h1v-1h1v1h1v-1h1v-1h1v2h1v-1h1v1h1v-1h2v1h2v-1h2v1h1v-1h1v1h1v-1h1v1h1v-1h1v1h1v-2h1v1h2v1h1v-1h1v-1h1v2h2v-2h1v2h1v-1h2v1h3v-2h1v1h1v1h1v-1h1v1h1v-1h1v1h1v-1h2v1h1v5h-4v1h-1v-1h-2v-1h-2v1h-1v-1h-2v1h-1v-1h-1v1h-1v-1h-1v1h-6v-1h-1v1h-1v1h-1v-1h-2v-1h-5v1h-1v-1h-5v1h-1v-1h-1v1h-2v-1h-3v2h-2v-1h-1v-1h-1v1h-2v1h-1v-2h-2v1h-2v-1h-3v1h-3v-1h-1v1h-2v-1h-1v2h-1v-2h-8v1h-1v-1h-4v1h-4v-1h-3v2h-1v-1h-1v1h-2v-1h-2v-1h-2v1h-1v-1h-3v1h-4v-1h-1v1h-2v1h-1v-2h-1v2h-3v-1h-2v-1h-7v2h-1v-1h-2v-1h-2v1h-3v-1h-3v1h-2v-1h-1v1h-1v-1h-1v1h-2v-1h-10v1h-1v-1h-1v1h-2v-1h-3v2h-1v-1h-1v-1h-1v1h-1v-1h-4v2h-1v-2h-1v1h-1v-1h-2v1h-2v-1h-4v2h-1v-2h-1v2h-1v-1h-1v-1h-2v1h-1v-1h-1v1h-4v-1h-1v2h-2v-1h-2v-1h-1v2h-1v-2h-2v1h-1v-1h-1v1h-5v-1h-1v1h-2v-1h-2v1h-10v-1h-2v1h-1v1h-1v-1h-1v1h-1v-2h-1v2h-1v-2h-1v2h-1v-2h-1v2h-2v-2h-1v1h-1v-1h-1v1h-1v-1h-1v1h-1v1h-1v-2h-2v2h-1v-2h-1v1h-1v-1h-4v1h-4v-1h-3v1h-2v-1h-1v1h-1v-1h-1v2h-1v-1h-3v-1h-2v2h-1v-1h-2v-1h-1v2h-1v-2h-1v1h-1v-1h-1v2h-1v-2h-2v1h-2v-1h-1v1h-3v-1h-2v1h-1v-1h-1v1h-1v-1h-3v1h-2v-1h-3v1h-1v-1h-2v2h-1v-2h-1v1h-1v-1h-5v1h-1v-1h-1v1h-1v1h-1v-1h-1v-1h-2v1h-1v1h-1v-1h-2v-1h-1v2h-1v-1h-1v-1h-2v2h-1v-2h-1v1h-1v3h-1v-3h-2v-1h-2v1h-1v-1h-6v1h-2v-1h-2v1h-3v-1h-1v1h-2v-1h-3v2h-1v-1h-4v1h-2v-2h-1v1h-2v1h-1v-1h-1v-1h-1v1h-3v-1h-1v2h-1v-1h-1v-1h-1v2h-1v-2h-1v2h-1v-2h-1v1h-1v1h-2v-2h-4v2h-1v-1h-4v-1h-2v1h-2v1h-1v-1h-2v-1h-1v1h-1v-1h-2v1h-2v-1h-12v1h-1v-1h-2v1h-1v1h-1v-1h-1v-1h-2v1h-1v-1h-5v1h-1v-1h-2v1h-2v-1h-1v1h-1v-1h-1v1h-1v-1h-4v2h-1v-1h-1v-1h-2v1h-1v-1h-4v1h-1v-1h-2v1h-1v-1h-1v1h-1v1h-1v-1h-2v-1h-1v1h-2v-1h-4v1h-1v-1h-2v1h-3v-1h-4v2h-1v-1h-1v1h-1v-1h-1v-1h-1v1h-2v-1h-2v1h-1v1h-1v-1h-1v1h-1v-2h-1v1h-2v1h-1v-1h-1v-1h-4v1h-3v-1h-3v1h-1v-1h-2v1h-1v-1h-3v1h-2v-1h-5v1h-1v-1h-2v1h-1v-1h-1v1h-1v1h-1v-2h-4v2h-1v-2h-3v1h-4v-1h-1v1h-1v-1h-2v1h-2v-1h-2v1h-8v-1h-2v1h-1v-1h-1v2h-1v-1h-3v-1h-9v1h-1v-1h-4v1h-1v1h-1v-1h-1v-1h-3v2h-1v-2h-2v1h-4v1h-1v-2h-1v2h-1v-1h-2v-1h-1v1h-5v1h-1v-1h-2v-1h-1v1h-2v-1h-3v1h-2v-1h-1v1h-1v-1h-1v1h-1v-1h-1v1h-1v-1h-1v1h-2v-1h-1v1h-1v-1h-1v1h-1v-1h-7v1h-2v-1h-5v1h-2v1h-1v-2h-2v1h-2v-1h-4v2h-2v-2h-3v1h-1v-1h-2v1h-1v-1h-5v1h-1v-1h-1v2h-1v-1h-1v-1h-1v1h-4v-1h-2v2h-2v-1h-5v-1h-2v1h-2v-1h-7v2h-1v-1h-1v1h-1v-2h-4v1h-2v-1h-2v1h-1v-1h-1v1h-1v-1h-4v1h-3v-1h-2v1h-1v-1h-2v1h-2v1h-1v-1h-1v1h-1v-1h-2v-1h-1v1h-1v-1h-1v1h-1v-1h-5v1h-3v1h-1v-1h-2v-1h-2v1h-1v1h-2v-1h-1v-1h-5v1h-1v-1h-3v1h-1v3h-1v-3h-3v-1h-1v1h-1v1h-2v-2h-5v2h-1v-2h-1v1h-1v1h-1v-2h-1v1h-2v-1h-5v1h-2v-1h-1v1h-3v-1h-3v1h-1v-1h-7v1h-2v1h-1v-1h-1v-1h-6v1h-2v1h-1v-1h-1v-1h-2v1h-2v-1h-2v2h-1v-1h-2v-1h-1v2h-1v-2h-3v1h-1v1h-1v-1h-1v-1h-2v1h-2v-1h-1v1h-1v-1h-1v2h-1v-1h-1v-1h-1v1h-4v-1h-1v1h-1v1h-1v-1h-1v1h-1v-2h-2v1h-2v-1h-2v1h-1v-1h-4v1h-1v-1h-2v2h-1v-2h-1v1h-1v-1h-5v1h-3v-1h-2v1h-1v-1h-1v1h-2v1h-1v-1h-2v-1h-2v1h-3v-1h-1v2h-2v-1h-2v1h-1v-2h-5v1h-1v-1h-1v1h-2v-1h-3v1h-2v-1h-1v1h-2v4h-1v-3h-1v-1h-1v1h-1v-1h-1v-1h-2v2h-1v-1h-2v1h-1v-1h-2v-1h-1v2h-1v-1h-2v-1h-2v1h-1v-1h-1v1h-3v-1h-1v1h-2v1h-4v-1h-2v1h-2v-2h-1v2h-1v-1h-1v-1h-1v1h-2v-1h-2v1h-1v-1h-1v1h-1v-1h-4v2h-1v-1h-2v-1h-1v1h-1v1h-1v-2h-1v1h-1v-1h-1v1h-1v-1h-1v1h-1v-1h-2v1h-2v-1h-2v1h-3v-1h-3v1h-5v-1h-1v1h-3v-1h-1v2h-1v-2h-1v1h-2v-1h-3v1h-1v-1h-2v1h-1v-1h-1v1h-1v-1h-2v1h-1v-1h-1v1h-1v1h-1v-2h-1v1h-4v-1h-4v2h-1v-1h-1v-1h-6v2h-2v-2h-10v1h-2v-1h-1v1h-1v-1h-1v1h-1v-1h-3v2h-1v-1h-2v-1h-1v1h-1v2h-1v-2h-1v1h-1v1h-1v-2h-1v1h-1v1h-2v1h-1v-3h-1v2h-1v-2h-1v-1h-1v1h-1v-1h-1v1h-1v-1h-1v1h-2v-1h-3v1h-3v-1h-2v1h-1v1h-1v-2h-2v1h-1v6h-1v-6h-2v-1h-3v1h-8v-1h-1v1h-1v-1h-1v1h-2v1h-1v-2h-5v1h-3v-1h-1v1h-2v-1h-1v1h-1v-1h-3v1h-1v1h-1v-2h-2z"/>
<path d="M278 819h1v1h1v-1h1v1h2v-2h1v1h1v1h2v-1h1v1h5v-1h1v1h1v-1h1v1h4v-1h1v1h1v-2h1v2h3v-1h1v-1h1v1h1v1h1v-1h1v1h2v-1h3v-1h1v1h4v-1h1v2h1v-1h3v1h5v-2h1v2h2v-1h2v1h1v-1h3v-1h1v2h1v-2h1v1h2v1h3v-1h8v1h1v-1h2v1h1v-1h2v1h2v-1h1v1h3v-1h1v1h3v-1h1v1h3v-1h2v-1h2v1h2v1h2v-2h2v2h3v-1h5v-1h1v2h1v-2h2v1h3v-1h1v2h6v-1h3v1h1v-1h3v-1h1v1h2v-1h1v1h1v1h1v-1h1v-1h3v1h1v1h1v-4h1v4h4v-2h1v1h1v1h2v-1h2v1h1v-1h3v1h1v-1h1v1h1v-1h2v1h1v-1h2v1h2v-1h1v1h12v-1h6v1h3v-1h1v1h2v-1h1v1h4v-1h2v1h1v-2h1v2h2v-1h1v1h1v-1h3v1h6v-1h1v1h2v-1h1v1h1v-1h1v1h1v-1h1v1h4v-1h1v1h4v-1h3v-1h1v1h1v1h2v-2h1v1h3v1h1v-2h1v2h2v-1h1v1h3v-2h1v2h1v-1h1v1h1v-1h1v1h2v-2h1v2h2v-1h3v1h1v-1h2v1h1v-1h2v1h2v-1h1v1h3v-1h1v1h1v-1h1v1h3v-3h1v3h1v-1h3v1h5v-1h2v1h2v-2h2v2h6v-1h1v1h1v-1h1v1h1v-1h1v1h3v-1h1v1h7v-1h1v-1h1v1h1v1h1v-2h1v1h4v1h1v-1h2v1h1v-1h1v1h2v-1h1v1h2v-1h1v-1h1v1h1v-1h1v1h1v1h1v-1h2v1h1v-1h3v1h2v-1h1v1h1v-1h1v-1h1v2h1v-1h1v1h3v-1h1v1h3v-1h1v1h1v-1h1v1h1v-1h2v-1h1v2h3v-1h1v-1h2v1h2v1h1v-2h1v1h3v1h1v-2h1v2h2v-1h1v1h1v-1h3v-1h1v1h1v-3h1v4h3v-1h1v1h2v-1h1v1h2v-2h1v1h1v1h4v-1h2v-1h1v2h1v-1h1v1h6v-2h1v2h2v-1h1v1h1v-1h2v1h1v-1h4v1h1v-1h1v-1h1v1h2v1h1v-2h1v2h1v-1h1v1h1v-1h1v1h4v-1h1v-1h1v2h6v-1h4v1h5v-1h1v1h2v-1h2v1h6v-1h2v1h1v-1h3v1h1v-1h1v1h2v-1h2v1h11v-1h1v1h1v-1h1v-1h1v1h3v-1h1v2h3v-1h1v1h1v-1h1v1h1v-1h2v1h8v-1h3v-4h1v4h1v1h1v-1h4v1h1v-1h1v-1h1v1h2v1h1v-1h2v1h2v-1h1v1h1v-1h3v1h1v-1h1v1h3v-1h1v1h1v-1h1v-1h1v1h2v1h2v-2h1v1h1v-4h1v5h1v-2h1v1h1v1h1v-1h1v1h2v-1h3v1h3v-2h1v1h1v1h2v-1h1v1h1v-1h1v-3h1v3h1v1h1v-1h2v-1h1v1h4v1h3v-1h1v1h1v-1h2v1h4v-1h1v1h7v-1h1v1h1v-1h1v-1h1v1h1v-1h2v1h1v1h1v-2h1v1h1v-2h1v1h1v-2h1v2h1v-1h1v1h2v2h1v-3h1v2h1v-1h2v-2h1v4h1v-3h1v-1h2v1h1v3h1v-2h1v1h1v1h3v-1h1v1h9v-1h1v1h1v-1h2v-1h1v2h1v-1h2v-1h1v1h1v1h2v-2h1v1h2v1h3v-2h1v2h8v-1h2v1h7v-1h2v-1h1v1h1v1h2v-1h1v1h7v-1h3v1h1v-2h2v-1h1v1h1v-1h2v-1h2v2h1v-3h1v3h1v-1h1v2h1v-3h1v-1h3v1h1v1h1v2h1v-1h1v2h4v-1h3v1h2v-2h1v1h1v-1h1v1h3v1h2v-1h1v-1h1v2h1v-1h2v1h1v-1h2v1h1v-1h1v-1h1v2h1v-1h3v1h1v-2h1v1h1v1h4v-1h6v-1h2v1h3v-1h1v1h1v1h1v-1h1v1h1v-1h3v1h2v-1h1v1h1v-1h2v-1h1v1h1v1h1v-1h2v1h1v-2h1v2h1v-1h3v-1h1v-4h1v5h1v1h1v-1h1v1h1v-2h1v2h3v-2h1v1h1v1h1v-1h1v-1h1v1h2v1h1v-1h1v1h1v-1h1v1h5v-1h1v1h4v-1h1v1h1v-1h1v-1h1v1h1v1h2v-1h1v1h3v-1h3v1h1v-1h2v1h3v-5h1v4h2v-7h1v7h1v-3h1v-2h2v5h1v1h1v-1h3v1h1v-2h1v1h2v-1h1v1h1v1h3v-1h1v1h2v-1h1v1h1v-2h2v2h1v-1h1v1h1v-1h1v1h3v-1h4v1h2v-1h1v-1h1v1h2v1h4v-1h1v1h1v-1h1v-1h1v1h2v1h2v-1h3v1h2v-1h1v-1h1v1h2v-4h1v4h1v1h1v-1h1v-1h1v1h1v1h1v-1h1v1h3v-1h3v1h4v-1h2v1h1v-2h1v2h2v-1h1v1h8v-1h2v1h1v-1h2v1h1v-2h1v1h2v1h1v-5h1v4h1v1h1v-2h1v1h1v1h4v-1h1v1h1v-1h1v1h2v-1h1v1h1v-1h1v-3h1v4h3v-1h1v1h4v-2h1v2h1v-1h1v1h4v-1h1v1h1v-1h1v1h1v-1h5v1h1v-1h1v1h3v-1h1v1h1v-1h1v1h3v-1h1v1h1v-1h4v-1h1v2h1v-1h1v-1h1v-1h2v3h1v-1h2v1h3v-1h1v1h5v-1h1v1h3v-1h2v1h3v-1h4v1h1v-1h1v1h9v-1h2v1h1v-1h2v-1h1v2h2v-1h1v1h1v-1h3v1h1v-1h1v1h1v-1h1v1h5v-1h1v1h2v-1h1v1h2v-1h1v1h4v-1h1v1h1v-1h2v1h1v-2h1v1h4v6h-2v-1h-1v1h-1v-1h-2v1h-4v-1h-1v1h-1v-1h-1v1h-2v-1h-2v1h-4v-1h-1v1h-2v-1h-1v1h-3v-1h-1v1h-1v-1h-1v2h-1v-2h-1v1h-3v-1h-1v2h-1v-1h-2v-1h-1v1h-4v-1h-7v1h-1v-1h-2v1h-3v-1h-1v1h-1v-1h-3v1h-1v-1h-3v1h-1v-1h-1v1h-1v-1h-7v1h-1v-1h-1v3h-1v-2h-1v1h-3v-1h-1v2h-1v-2h-1v2h-2v-2h-1v-1h-3v1h-1v-1h-3v1h-1v-1h-3v1h-2v-1h-1v2h-1v-2h-4v2h-1v-2h-3v1h-1v-1h-1v1h-1v-1h-2v1h-1v-1h-2v1h-1v-1h-1v1h-1v-1h-2v2h-1v-1h-1v-1h-3v1h-1v-1h-1v1h-1v-1h-3v1h-3v-1h-2v1h-1v5h-1v-5h-1v-1h-1v2h-1v-1h-1v-1h-2v1h-2v-1h-1v1h-1v-1h-2v1h-1v-1h-2v2h-2v-1h-3v-1h-1v2h-1v-2h-1v1h-1v-1h-1v1h-1v1h-1v-2h-1v1h-2v-1h-2v1h-2v-1h-3v1h-2v-1h-1v1h-2v1h-2v-2h-1v1h-1v-1h-3v1h-1v-1h-2v1h-3v1h-1v-1h-1v1h-1v-2h-3v1h-1v-1h-1v2h-1v-2h-1v1h-2v-1h-2v1h-6v-1h-4v2h-1v-1h-1v-1h-2v2h-1v-1h-1v-1h-3v1h-1v1h-4v3h-1v-4h-1v1h-1v-1h-1v-1h-1v1h-1v-1h-1v1h-2v1h-1v1h-2v-2h-1v3h-1v-3h-1v2h-1v-2h-2v-1h-1v1h-1v-1h-1v1h-1v-1h-3v1h-1v-1h-1v1h-2v-1h-1v2h-1v-1h-2v-1h-1v1h-3v-1h-4v1h-1v-1h-1v2h-1v-1h-1v-1h-2v1h-1v-1h-2v2h-1v-2h-1v2h-1v-2h-2v1h-1v-1h-1v1h-1v-1h-3v1h-3v-1h-1v2h-2v-1h-2v1h-1v-2h-2v1h-4v1h-1v-1h-1v-1h-1v1h-3v-1h-1v1h-1v1h-1v-1h-1v-1h-2v1h-2v-1h-1v1h-2v1h-1v-1h-1v1h-1v-1h-3v-1h-4v1h-2v-1h-3v1h-2v1h-1v-1h-2v-1h-1v1h-2v1h-1v-2h-1v1h-2v-1h-1v1h-3v1h-1v-1h-3v-1h-3v2h-1v-1h-7v-1h-6v2h-1v1h-3v-2h-1v2h-1v-1h-1v1h-1v-1h-1v1h-2v-2h-1v2h-2v-3h-1v2h-1v-1h-1v-1h-1v1h-1v-1h-3v1h-1v-1h-4v1h-1v-1h-1v1h-2v-1h-1v1h-1v-1h-1v2h-1v-1h-2v-1h-6v1h-1v-1h-4v1h-1v-1h-5v2h-1v-2h-1v1h-1v-1h-4v1h-1v-1h-1v2h-1v-2h-1v1h-3v-1h-1v1h-4v1h-1v-1h-3v-1h-1v1h-1v-1h-2v1h-1v-1h-1v1h-1v-1h-1v1h-1v-1h-2v3h-1v-2h-2v1h-1v-2h-1v1h-1v2h-2v-1h-1v2h-1v-4h-1v1h-1v2h-1v-3h-2v4h-1v-2h-1v-2h-1v4h-1v-2h-2v1h-1v-3h-2v1h-1v1h-2v-1h-4v-1h-14v1h-1v-1h-3v1h-1v-1h-5v1h-1v-1h-1v1h-1v4h-1v-4h-1v-1h-1v1h-1v-1h-3v1h-1v-1h-4v1h-1v-1h-1v1h-1v-1h-1v1h-5v4h-1v-4h-1v-1h-1v1h-3v-1h-3v1h-1v-1h-2v1h-1v-1h-2v1h-1v-1h-1v1h-1v-1h-3v1h-3v1h-2v-2h-1v2h-3v-2h-1v2h-1v-1h-2v-1h-2v1h-1v3h-1v-2h-2v-1h-1v-1h-2v1h-2v-1h-2v1h-3v-1h-2v1h-1v-1h-1v1h-1v1h-1v-2h-2v1h-6v-1h-2v1h-1v-1h-9v1h-1v-1h-2v1h-1v-1h-1v1h-5v-1h-1v1h-1v1h-1v-1h-1v-1h-2v1h-1v-1h-3v1h-2v-1h-1v1h-2v-1h-6v1h-1v-1h-2v1h-1v1h-1v-1h-1v-1h-1v1h-2v1h-1v-1h-1v-1h-1v1h-1v-1h-4v2h-1v-1h-1v-1h-1v1h-1v1h-1v-1h-2v-1h-3v1h-2v-1h-2v1h-3v-1h-1v1h-1v-1h-5v2h-1v-2h-1v1h-1v-1h-4v1h-3v-1h-1v1h-1v-1h-2v1h-1v-1h-1v1h-1v-1h-1v1h-1v1h-1v-1h-2v4h-1v-4h-1v-1h-1v1h-1v-1h-1v1h-2v-1h-5v1h-1v-1h-1v1h-1v-1h-2v1h-3v-1h-4v1h-1v-1h-1v2h-1v-1h-5v-1h-1v1h-1v-1h-1v1h-1v-1h-5v1h-1v-1h-1v1h-1v1h-1v-1h-4v-1h-2v1h-2v-1h-5v1h-1v-1h-4v1h-1v-1h-2v1h-2v-1h-2v1h-4v1h-3v-1h-1v-1h-1v1h-2v-1h-4v1h-1v-1h-5v1h-3v-1h-3v1h-1v-1h-1v1h-3v-1h-3v1h-1v-1h-5v1h-2v1h-1v-2h-1v2h-1v-1h-1v-1h-1v1h-1v-1h-2v2h-1v-1h-4v-1h-1v2h-1v-1h-1v1h-1v-1h-1v1h-1v-1h-1v1h-1v-1h-4v-1h-2v1h-1v-1h-1v2h-1v-2h-5v1h-3v-1h-3v1h-2v-1h-2v1h-1v-1h-2v1h-1v-1h-1v2h-1v-1h-1v-1h-1v1h-1v-1h-1v1h-1v-1h-4v1h-3v-1h-2v1h-3v-1h-8v1h-4v-1h-3v1h-1v-1h-2v1h-1v-1h-1v1h-1v-1h-2v1h-1v-1h-7v1h-2v-1h-2v1h-3v-1h-11v1h-2v-1h-1v1h-1v-1h-1v1h-2v-1h-2v1h-3v1h-1v-2h-2v1h-6v-1h-2v1h-1v3h-1v-3h-2v1h-3v-2h-3v1h-1v1h-1v-1h-1v-1h-4v2h-1v-1h-1v-1h-2v1h-3v-1h-3v1h-2v1h-1v-1h-1v1h-2v-1h-1v1h-2v-1h-1v-1h-1v1h-1v1h-1v-1h-2v-1h-1v2h-1v-1h-1v1h-1v-2h-1v1h-1v1h-1v-1h-1v-1h-1v1h-3v-1h-2v1h-1v-1h-2v1h-1v-1h-4v1h-1v-1h-4v2h-1v-2h-1v1h-2v-1h-1v1h-2v-1h-1v1h-3v1h-1v-2h-6v1h-1v-1h-2v2h-1v-1h-2v-1h-3v2h-1v-1h-1v-1h-1v1h-2v-1h-1v1h-1v-1h-2v1h-2v-1h-1v1h-1v-1h-3v1h-2v-1h-1v1h-1v-1h-3v1h-1v1h-1v-1h-1v-1h-13v1h-2v-1h-1v1h-2v-1h-1v1h-1v-1h-3v1h-3v1h-1v-2h-1v2h-1z"/>
<path d="M278 849h3v1h1v-2h1v1h1v1h1v-2h1v1h1v-1h2v1h1v-1h1v2h1v-1h2v1h3v-1h2v1h4v-1h1v-1h1v1h3v1h2v-1h1v1h5v-1h1v1h2v-1h1v1h1v-1h1v-1h2v1h2v-1h2v1h1v-1h1v1h1v-1h1v2h4v-1h2v1h1v-2h2v1h1v1h1v-1h1v1h1v-1h3v-1h1v2h5v-2h1v1h1v1h1v-1h1v1h3v-1h1v-1h1v2h1v-1h1v1h1v-1h1v1h3v-1h1v1h1v-1h2v1h1v-1h5v-1h2v2h1v-1h1v1h1v-1h3v1h1v-1h2v1h1v-1h2v1h1v-1h1v-1h2v1h1v1h1v-2h2v1h1v-1h2v1h1v-1h1v1h2v1h3v-1h5v1h1v-1h1v1h1v-1h2v1h1v-1h3v-1h1v1h1v-1h1v1h3v1h3v-1h1v1h4v-1h3v1h1v-1h4v1h5v-1h2v1h1v-2h1v1h1v1h1v-1h2v1h1v-1h1v-1h2v2h1v-2h1v1h3v1h1v-1h1v1h1v-1h5v1h1v-1h1v-1h1v2h1v-1h1v1h2v-1h3v1h6v-1h1v1h1v-1h1v1h4v-1h2v1h1v-1h1v1h3v-1h4v-1h1v2h1v-1h1v1h1v-5h1v5h1v-1h1v-1h1v2h1v-1h3v1h3v-1h2v1h3v-1h2v1h1v-1h4v1h2v-1h1v1h1v-1h1v1h5v-1h1v1h1v-1h1v1h1v-1h1v1h1v-2h2v1h1v1h1v-2h1v2h2v-1h2v1h3v-1h1v1h1v-2h1v1h2v-1h2v1h1v-1h1v2h1v-1h6v1h1v-1h1v1h1v-1h1v1h3v-1h1v1h1v-1h2v1h1v-2h1v2h3v-1h3v1h3v-1h1v1h2v-1h1v1h1v-1h2v1h4v-1h2v1h1v-1h2v1h1v-1h1v1h3v-1h2v1h2v-1h1v1h1v-1h3v1h2v-1h1v1h1v-2h1v1h1v1h1v-2h2v2h1v-1h2v1h1v-2h2v1h1v1h3v-1h1v-1h1v2h3v-1h2v1h1v-1h1v1h1v-1h1v-1h1v2h1v-1h3v1h3v-1h1v1h7v-2h2v1h1v-1h1v2h1v-1h2v1h1v-1h1v-1h1v2h2v-1h1v1h2v-1h1v1h3v-1h2v1h1v-1h1v1h1v-1h2v1h2v-1h2v1h2v-1h1v1h2v-1h1v1h7v-2h1v1h1v1h3v-1h1v1h5v-1h1v1h3v-2h1v2h3v-2h1v1h1v1h4v-1h4v1h1v-1h2v1h3v-1h3v1h1v-1h1v1h2v-1h1v1h1v-1h2v1h1v-1h1v1h2v-1h4v1h3v-1h1v1h2v-1h1v1h1v-1h5v1h2v-1h1v1h1v-2h1v2h3v-1h2v1h1v-1h1v1h1v-2h1v1h1v-1h1v1h3v1h6v-1h1v1h1v-2h1v2h1v-1h5v1h3v-1h1v1h2v-1h2v1h1v-1h1v-1h1v1h3v1h2v-1h1v1h2v-1h1v-1h1v2h3v-1h3v1h1v-1h1v1h1v-1h1v1h1v-1h1v1h1v-1h1v1h3v-2h1v2h1v-1h3v-1h2v2h5v-1h1v1h1v-1h1v1h2v-1h1v-1h1v2h2v-1h1v1h1v-1h1v1h1v-2h1v1h2v1h1v-2h1v1h1v1h2v-1h1v1h1v-1h2v1h1v-2h1v1h2v-1h1v2h5v-1h2v1h4v-2h3v1h1v-2h1v2h1v-2h1v3h1v-2h2v1h3v-1h2v2h1v-1h3v1h2v-1h3v1h2v-1h2v-1h1v1h1v1h1v-2h1v2h1v-2h1v2h1v-1h1v1h8v-1h2v-1h1v2h4v-1h1v1h1v-2h1v1h1v1h4v-1h1v-1h1v1h2v1h1v-1h2v-1h1v1h3v1h1v-1h1v1h2v-1h1v1h2v-1h3v1h6v-1h1v1h1v-1h1v1h5v-1h1v1h1v-2h1v2h1v-2h1v1h1v1h2v-1h2v1h3v-1h1v-1h1v1h1v-1h1v2h1v-2h1v2h2v-2h2v2h1v-1h1v1h5v-1h1v1h1v-2h1v1h1v1h3v-2h1v2h2v-1h2v1h2v-1h2v1h4v-1h3v1h5v-1h3v1h1v-1h1v1h1v-1h1v1h4v-1h1v1h1v-1h1v1h3v-1h5v1h3v-1h1v1h5v-1h2v1h8v-1h1v1h1v-1h2v-1h1v1h1v-1h1v1h1v1h10v-1h4v1h1v-2h2v1h1v-1h2v1h2v1h1v-1h1v1h1v-1h2v-2h1v1h1v1h3v1h4v-1h1v1h1v-1h1v1h5v-2h1v2h4v-1h3v-1h1v1h4v1h1v-1h1v1h1v-1h2v-1h3v-1h1v2h1v1h2v-1h1v1h2v-1h2v1h4v-1h1v-1h1v1h1v1h1v-1h3v1h1v-2h1v1h3v1h3v-2h1v1h1v-1h2v2h3v-1h4v1h1v-1h1v1h1v-1h2v1h1v-1h1v1h5v-1h3v1h1v-1h2v1h1v-1h1v1h1v-1h1v1h1v-2h1v1h1v1h3v-1h2v-1h1v1h1v1h1v-1h1v1h4v-1h2v1h2v-1h2v-1h1v2h3v-1h1v1h6v-1h2v1h3v-1h1v1h3v-1h2v-1h1v2h1v-1h1v1h1v-2h1v1h1v1h1v-1h1v1h2v-2h2v2h1v-2h1v1h3v1h1v-1h1v1h7v-5h1v4h2v1h1v-1h1v-1h1v2h1v-1h2v1h2v-1h1v1h2v-1h1v1h1v-4h1v4h2v-2h1v1h1v-1h1v1h1v1h2v-1h4v-1h1v1h1v-1h4v1h1v1h5v-1h1v1h3v-1h3v1h3v-2h1v1h1v-4h1v5h1v-2h1v1h1v1h2v-1h2v1h1v-1h4v1h1v-1h1v-1h1v1h1v1h1v-2h1v1h2v1h2v-1h1v1h1v-1h1v1h3v-2h1v1h1v-1h1v1h1v1h1v-1h1v7h-1v-1h-1v-1h-2v1h-4v-1h-5v2h-1v-2h-1v1h-1v-1h-2v1h-1v-1h-1v1h-1v-1h-2v1h-4v-1h-1v1h-1v1h-1v-2h-1v1h-1v1h-1v-1h-1v4h-1v-4h-1v-1h-3v1h-2v-1h-2v1h-3v-1h-5v1h-1v1h-2v-2h-1v1h-1v1h-1v-1h-1v1h-1v-1h-1v-1h-2v1h-1v-1h-2v1h-3v1h-2v-1h-1v4h-1v-4h-1v-1h-3v1h-1v-1h-2v1h-3v1h-2v-1h-2v-1h-1v2h-1v-2h-6v1h-3v-1h-1v1h-1v-1h-1v2h-1v-1h-1v1h-2v-1h-1v-1h-1v1h-2v-1h-2v1h-1v-1h-4v2h-1v-1h-2v-1h-4v1h-1v-1h-12v1h-2v-1h-2v2h-1v-1h-2v-1h-2v1h-1v-1h-1v2h-1v-1h-3v-1h-1v1h-1v-1h-2v1h-1v-1h-1v2h-1v-1h-2v-1h-1v1h-2v-1h-1v1h-4v-1h-1v2h-1v-2h-3v2h-1v-2h-1v1h-2v-1h-1v1h-1v1h-1v-1h-1v-1h-3v1h-1v-1h-2v1h-1v-1h-1v1h-1v1h-1v-2h-1v1h-2v-1h-1v1h-2v-1h-1v1h-1v-1h-1v2h-1v-2h-1v1h-1v-1h-2v1h-1v-1h-1v1h-1v-1h-3v1h-1v-1h-5v1h-2v1h-3v-2h-3v1h-2v1h-2v-1h-5v-1h-1v1h-1v-1h-3v1h-3v-1h-1v1h-2v-1h-2v1h-1v1h-1v-2h-3v1h-2v1h-1v-1h-1v-1h-1v2h-1v-1h-2v1h-1v-1h-1v-1h-1v2h-2v-1h-3v-1h-1v2h-1v-2h-1v1h-1v1h-1v-1h-3v-1h-6v1h-1v-1h-1v1h-1v-1h-1v2h-1v-2h-3v1h-1v1h-1v-1h-4v-1h-3v1h-1v-1h-3v1h-1v1h-1v-1h-3v-1h-5v1h-2v3h-1v-3h-1v1h-1v-1h-3v-1h-1v2h-1v-2h-2v1h-3v1h-1v-1h-1v-1h-1v1h-1v-1h-3v1h-1v-1h-5v1h-1v-1h-5v1h-2v-1h-1v1h-1v-1h-1v1h-3v-1h-1v1h-2v-1h-5v1h-3v-1h-3v1h-3v-1h-1v1h-1v-1h-1v2h-1v-1h-3v-1h-6v2h-1v-1h-2v1h-1v-2h-1v1h-1v-1h-5v1h-6v-1h-1v1h-3v-1h-4v1h-1v-1h-1v1h-1v-1h-2v1h-1v-1h-3v1h-1v1h-1v-1h-1v-1h-3v1h-2v-1h-1v1h-1v-1h-1v1h-1v-1h-2v1h-1v-1h-3v1h-2v1h-1v-1h-1v-1h-1v1h-3v-1h-1v1h-1v-1h-2v1h-1v1h-1v-2h-2v1h-2v-1h-2v1h-2v-1h-2v1h-2v-1h-1v1h-4v-1h-1v1h-1v-1h-1v1h-1v-1h-1v1h-3v2h-1v-2h-2v1h-1v-1h-1v1h-2v-1h-1v1h-1v-1h-3v-1h-2v1h-1v-1h-1v1h-1v1h-1v-2h-1v1h-1v-1h-1v1h-1v-1h-1v1h-2v-1h-2v1h-1v-1h-2v1h-1v-1h-3v1h-4v-1h-3v1h-2v-1h-2v2h-1v-2h-10v2h-2v-1h-1v-1h-1v1h-1v-1h-2v1h-1v-1h-1v1h-1v-1h-1v1h-2v-1h-3v1h-1v-1h-2v1h-2v-1h-2v1h-5v-1h-1v1h-1v-1h-2v2h-1v-2h-1v1h-1v-1h-2v1h-1v1h-1v-2h-1v1h-1v-1h-3v1h-2v-1h-1v1h-2v-1h-1v1h-1v1h-1v-2h-3v1h-1v-1h-4v1h-1v-1h-1v1h-2v1h-1v-1h-1v-1h-1v1h-1v-1h-2v1h-2v-1h-2v1h-1v-1h-2v1h-1v-1h-1v1h-1v-1h-1v2h-1v-2h-2v1h-1v-1h-1v2h-1v-2h-1v1h-1v-1h-1v1h-1v1h-1v-1h-1v-1h-3v1h-3v-1h-6v2h-1v-2h-1v1h-1v1h-1v-1h-3v-1h-1v1h-1v-1h-6v1h-1v-1h-1v1h-1v-1h-1v1h-1v-1h-2v1h-2v1h-1v-1h-1v1h-2v-1h-1v1h-2v-2h-9v1h-1v1h-1v-2h-1v1h-1v1h-1v-2h-3v1h-1v-1h-2v1h-1v-1h-6v1h-4v1h-1v-2h-1v1h-1v-1h-4v2h-1v-1h-3v-1h-1v1h-1v1h-3v-1h-2v1h-1v-2h-1v2h-1v-2h-5v1h-1v-1h-8v1h-1v-1h-3v1h-1v1h-1v-2h-2v1h-1v-1h-2v2h-1v-1h-1v1h-1v-1h-2v-1h-1v1h-1v-1h-2v1h-3v-1h-1v1h-5v-1h-3v1h-1v-1h-2v1h-1v-1h-2v1h-1v-1h-4v1h-1v-1h-1v1h-2v-1h-7v2h-1v-1h-3v-1h-1v1h-1v-1h-1v1h-2v-1h-3v1h-1v-1h-1v1h-1v-1h-2v1h-5v-1h-1v1h-1v-1h-3v1h-2v-1h-1v1h-4v1h-2v-1h-3v-1h-1v1h-2v-1h-1v2h-1v-1h-2v-1h-4v2h-1v-1h-1v1h-1v-2h-1v1h-1v-1h-2v1h-3v-1h-2v1h-2v-1h-1v1h-1v-1h-3v2h-1v-2h-1v1h-2v-1h-1v1h-2v1h-2v-1h-3v1h-1v-2h-1v1h-1v-1h-2v1h-1v-1h-2v1h-6v-1h-1v1h-1v4h-1v-4h-1v-1h-4v1h-3v-1h-1v2h-1v-1h-2v-1h-1v2h-1v-2h-3v1h-1v-1h-1v1h-1v-1h-1v1h-1v-1h-2v1h-2v-1h-1v2h-1v-2h-2v2h-1v-2h-4v1h-2v-1h-1v1h-4v-1h-4v1h-1v1h-1v-1h-3v-1h-4v1h-2v-1h-1v1h-3v-1h-1v2h-1v-1h-1v-1h-4v1h-1v1h-1v-1h-1v-1h-2v1h-5v-1h-3v1h-1v-1h-1v2h-1v-1h-2v1h-1v-1h-1v1h-1v-1h-3v-1h-3v1h-1v-1h-3v1h-2v-1h-1v1h-1v-1h-1v1h-6v-1h-3v1h-1v-1h-3v1h-2v-1h-1v2h-1v-2h-4v1h-1v-1h-2v1h-2v1h-1v-1h-2v-1h-2v1h-1v-1h-1v1h-2v1h-1v-2h-1v1h-1v-1h-1v1h-3v-1h-4v1h-1v-1h-2v1h-2v-1h-2v1h-1v-1h-2v1h-1v-1h-5v1h-2v-1h-1v2h-1v-1h-1v-1h-1v1h-2v-1h-1v1h-1v1h-1v-1h-1v-1h-6v2h-1v-1h-2v-1h-1v1h-1v1h-1v-2h-1v1h-2v1h-2v-1h-1v-1h-2v1h-1v-1h-6v2h-1v-2h-2v2h-1v-1h-1v1h-2v-2h-1v1h-1v-1h-3v1h-2v-1h-1v2h-1v-2h-1v1h-1v-1h-2v1h-1v-1h-3v2h-1v-2h-3v1h-1v-1h-4z"/>
<path d="M278 880h1v-1h1v1h1v-1h1v-1h1v-3h1v5h1v-1h1v-1h1v1h1v1h4v-1h4v1h1v-1h1v1h3v-1h1v-1h1v1h2v-1h1v1h1v1h3v-1h3v1h2v-1h1v1h2v-1h1v1h1v-1h1v1h1v-1h1v1h1v-1h1v-1h1v2h2v-2h1v1h3v-2h1v3h2v-1h3v1h2v-1h1v-1h1v2h1v-1h1v1h3v-1h1v1h1v-1h2v1h6v-2h1v2h4v-1h1v1h3v-1h1v1h1v-2h3v1h1v-1h1v1h1v-1h1v2h1v-1h1v1h1v-1h1v1h1v-1h1v1h2v-1h2v1h8v-2h1v1h1v1h2v-1h1v1h1v-1h3v-4h1v5h1v-1h3v1h1v-1h4v1h3v-1h3v1h4v-1h4v1h2v-2h1v1h1v1h1v-2h1v2h3v-1h4v1h4v-2h1v1h1v1h2v-1h1v1h3v-2h1v1h3v1h4v-2h1v1h1v-1h1v1h1v1h2v-1h2v1h5v-1h1v1h1v-2h1v1h2v1h5v-1h1v-1h1v1h1v1h3v-5h1v5h8v-1h1v1h2v-1h3v1h5v-1h1v1h3v-2h1v2h1v-1h1v1h2v-1h1v-1h1v2h5v-1h1v1h4v-1h3v1h4v-1h2v1h1v-1h1v1h2v-1h1v1h1v-1h1v1h1v-1h1v1h11v-1h1v1h5v-1h2v-1h3v1h2v1h1v-1h1v-1h2v2h1v-1h1v1h3v-1h3v1h3v-1h2v-1h1v1h5v1h2v-1h2v-1h1v2h2v-1h1v1h1v-1h3v1h1v-1h3v1h1v-1h2v1h1v-1h1v1h1v-1h1v1h8v-1h2v1h1v-1h1v-1h1v2h1v-1h1v1h3v-1h1v1h2v-1h1v1h1v-1h2v1h3v-1h3v1h3v-1h2v-1h1v1h1v-1h1v1h1v1h1v-2h1v2h2v-2h1v1h1v1h7v-1h2v-1h1v1h2v1h4v-1h1v1h1v-1h1v1h2v-1h1v1h2v-1h1v1h4v-1h2v1h1v-1h1v1h4v-1h1v1h1v-2h1v1h1v1h1v-1h1v1h2v-1h2v1h1v-1h1v1h1v-1h1v1h2v-1h1v1h1v-1h2v1h2v-2h1v2h1v-2h2v1h1v1h1v-1h2v1h2v-1h2v1h5v-1h1v1h11v-1h3v-1h1v1h1v1h9v-1h1v1h1v-1h1v1h1v-1h2v1h2v-2h1v1h1v-1h1v1h1v1h2v-1h2v1h11v-1h1v1h2v-1h1v1h3v-1h1v-1h1v2h2v-2h1v1h1v1h2v-2h1v2h1v-1h1v-1h1v1h5v1h1v-2h1v1h1v-1h1v2h7v-1h3v1h1v-1h3v1h2v-1h1v1h5v-2h1v2h1v-1h2v1h6v-1h3v-1h1v1h2v-1h1v1h1v1h1v-1h1v1h1v-2h1v2h1v-1h5v1h3v-1h2v1h1v-1h1v1h2v-1h3v1h1v-1h2v1h1v-1h2v1h2v-1h1v1h1v-1h1v1h1v-2h2v2h1v-2h1v2h1v-1h1v1h2v-1h1v1h2v-1h1v-1h1v2h1v-1h1v1h1v-1h1v1h1v-2h1v2h3v-2h1v1h1v1h1v-1h2v-1h2v2h2v-2h1v2h1v-1h2v1h3v-1h1v1h3v-1h1v1h1v-1h4v1h2v-1h1v1h2v-1h2v1h1v-2h1v2h4v-1h2v1h3v-1h1v1h1v-5h1v5h4v-1h1v1h1v-1h1v-1h1v1h1v-1h1v2h1v-1h1v1h1v-1h1v-1h1v1h1v1h3v-1h1v1h1v-1h1v1h1v-1h2v1h5v-1h2v1h2v-1h2v-1h2v1h2v1h1v-1h1v1h2v-1h2v1h4v-1h1v1h1v-1h1v1h1v-1h1v1h1v-1h5v1h1v-1h2v1h2v-1h1v1h3v-1h1v1h2v-2h1v2h1v-1h2v-1h1v2h1v-1h2v1h3v-1h1v1h1v-1h4v-1h1v1h2v1h1v-1h1v1h1v-1h1v1h1v-2h2v2h2v-2h1v1h2v1h1v-2h1v1h1v1h2v-1h5v-1h1v1h1v-1h1v1h1v-1h3v2h7v-1h1v1h5v-2h1v1h1v1h1v-2h1v2h1v-1h3v1h2v-1h1v1h4v-1h1v1h3v-1h1v1h6v-2h1v2h7v-1h2v1h1v-1h1v1h7v-5h1v5h1v-1h4v1h1v-1h1v1h1v-2h2v2h1v-1h3v1h2v-1h1v1h2v-1h1v1h1v-1h4v1h1v-1h1v-1h1v2h1v-1h2v-1h1v2h1v-1h1v1h2v-6h1v5h2v-1h2v2h1v-1h1v1h3v-1h1v1h6v-1h6v1h8v-1h1v1h2v-3h1v1h2v2h1v-2h1v-1h2v3h1v-1h1v-1h4v1h2v1h1v-1h3v1h2v-1h1v1h2v-1h2v1h1v-1h2v1h1v-1h5v1h3v-5h1v5h1v-1h1v1h1v-1h1v1h2v-1h2v1h2v-2h2v2h1v-1h1v1h1v-1h1v1h1v-2h1v2h1v-1h1v1h2v-1h1v1h2v-1h1v1h1v-1h1v-1h1v1h1v1h3v-1h1v1h1v-1h2v1h1v-1h2v1h2v-1h1v1h4v-1h1v1h1v-1h2v1h1v-4h1v3h1v1h1v-1h2v1h1v-1h1v1h3v-1h1v1h4v-1h3v-1h1v1h1v1h2v-2h1v1h3v-1h1v1h5v1h1v-2h1v2h2v-1h1v-1h3v2h1v-1h2v-1h1v1h2v-1h1v2h4v-1h2v1h5v-1h2v1h1v-2h1v1h2v-1h1v2h2v-2h1v1h1v1h1v-1h2v1h2v-1h1v1h2v-1h1v1h1v-1h1v1h1v-1h1v1h2v-1h1v1h1v-1h1v-1h1v-2h1v4h2v-1h2v-1h1v1h1v1h1v5h-1v1h-1v-1h-5v4h-1v-4h-1v-1h-7v1h-1v-1h-1v1h-1v-1h-2v1h-1v-1h-3v1h-1v-1h-1v2h-1v-1h-2v-1h-1v1h-1v-1h-1v1h-1v-1h-1v1h-3v-1h-3v2h-1v-2h-1v1h-1v-1h-3v1h-2v-1h-1v1h-3v-1h-2v1h-3v-1h-6v1h-1v-1h-1v1h-2v-1h-1v2h-2v-1h-2v1h-2v-1h-1v-1h-6v1h-1v-1h-1v1h-1v-1h-3v1h-2v1h-1v-2h-1v1h-3v3h-1v-3h-1v1h-1v-2h-1v1h-1v-1h-2v1h-1v-1h-4v1h-1v1h-1v-2h-3v1h-2v-1h-1v1h-2v-1h-2v2h-1v-2h-1v1h-1v1h-1v-2h-3v2h-1v-2h-1v1h-1v-1h-1v2h-1v-1h-1v-1h-2v1h-6v-1h-6v1h-2v5h-1v-5h-2v-1h-1v1h-4v-1h-1v1h-2v-1h-2v1h-1v1h-1v-2h-5v1h-1v1h-1v-2h-1v1h-2v-1h-1v2h-1v1h-1v-1h-1v-2h-1v1h-1v-1h-1v1h-1v2h-2v-1h-1v1h-1v-1h-1v-1h-2v-1h-9v1h-1v1h-1v-1h-2v-1h-1v1h-1v-1h-7v1h-1v-1h-4v1h-1v-1h-2v1h-2v5h-1v-5h-4v-1h-2v2h-1v-1h-3v-1h-1v1h-1v-1h-1v2h-1v-1h-1v-1h-1v1h-1v-1h-1v1h-1v-1h-3v1h-1v-1h-3v1h-1v-1h-2v2h-1v-2h-2v2h-1v-1h-1v1h-1v-1h-1v4h-1v-4h-1v-1h-1v1h-2v-1h-1v1h-1v1h-2v-1h-1v-1h-1v2h-1v-2h-2v1h-1v-1h-1v2h-1v-1h-2v-1h-3v1h-1v-1h-2v2h-1v-2h-1v1h-3v-1h-1v1h-2v-1h-4v1h-1v3h-1v-3h-1v-1h-1v1h-3v1h-3v-2h-3v1h-1v-1h-4v1h-2v-1h-1v1h-1v-1h-1v2h-1v-2h-1v2h-1v-1h-5v-1h-1v1h-2v-1h-2v1h-5v-1h-2v1h-2v2h-1v-3h-2v1h-2v-1h-1v1h-1v-1h-1v1h-4v-1h-1v2h-1v-2h-3v1h-1v1h-1v-2h-1v2h-2v-2h-1v1h-2v-1h-3v1h-1v-1h-3v1h-3v1h-1v-2h-2v1h-3v-1h-1v1h-1v-1h-1v1h-1v1h-2v-1h-1v-1h-1v1h-2v-1h-1v1h-1v1h-1v-2h-1v1h-1v-1h-2v1h-3v-1h-1v2h-1v-2h-4v1h-3v-1h-2v1h-2v-1h-1v1h-1v-1h-5v1h-3v-1h-1v2h-1v-1h-1v-1h-2v1h-1v1h-2v-2h-1v1h-1v1h-1v-1h-1v-1h-2v1h-1v3h-1v-3h-1v-1h-1v1h-2v-1h-7v1h-1v-1h-3v1h-3v-1h-1v1h-2v-1h-1v1h-1v1h-1v-2h-2v1h-1v-1h-2v1h-1v1h-1v-1h-2v-1h-1v1h-1v-1h-1v1h-2v-1h-1v1h-3v1h-2v-1h-2v1h-1v-1h-2v-1h-2v1h-1v-1h-3v2h-1v-2h-1v1h-1v-1h-4v1h-9v1h-1v-2h-2v1h-3v1h-1v-1h-3v-1h-6v1h-2v-1h-2v1h-11v1h-1v-1h-1v-1h-1v1h-1v1h-1v-1h-1v1h-1v-2h-2v1h-1v-1h-2v1h-2v-1h-1v1h-1v1h-1v-2h-5v1h-3v1h-1v-2h-1v2h-1v-1h-1v-1h-1v1h-3v-1h-7v1h-5v-1h-1v1h-3v1h-2v-2h-1v1h-1v-1h-2v1h-2v-1h-3v1h-2v-1h-1v1h-2v-1h-9v2h-1v-2h-3v1h-1v-1h-1v1h-1v-1h-3v1h-1v1h-1v-1h-1v-1h-6v1h-1v3h-1v-3h-2v-1h-4v1h-2v-1h-1v2h-1v-1h-3v1h-1v-1h-2v-1h-2v1h-2v-1h-1v2h-1v-2h-7v1h-3v-1h-2v1h-2v-1h-2v1h-1v1h-1v-2h-2v1h-2v-1h-5v1h-2v-1h-1v1h-2v-1h-1v1h-1v-1h-5v1h-1v1h-1v-1h-1v-1h-1v1h-4v-1h-1v1h-1v-1h-1v1h-1v-1h-1v1h-3v1h-1v-2h-1v1h-1v-1h-10v1h-8v-1h-2v1h-1v1h-1v-1h-2v-1h-4v2h-2v-1h-3v-1h-2v1h-1v-1h-1v1h-1v-1h-3v1h-1v-1h-1v1h-2v-1h-4v1h-1v-1h-3v2h-4v-1h-1v1h-2v-2h-1v2h-2v-2h-4v1h-1v-1h-1v1h-1v-1h-1v1h-3v-1h-1v2h-1v-1h-3v-1h-5v1h-1v-1h-6v1h-1v-1h-2v1h-1v-1h-1v1h-2v1h-1v-1h-1v-1h-1v2h-1v-2h-1v1h-2v-1h-3v1h-1v1h-1v-1h-2v-1h-3v2h-1v-1h-1v1h-1v-1h-2v-1h-1v1h-1v-1h-4v1h-1v1h-1v-1h-3v-1h-9v1h-1v-1h-3v2h-1v-2h-1v1h-1v-1h-1v1h-2v-1h-2v1h-2v-1h-2v1h-1v-1h-7v1h-1v1h-1v-2h-1v1h-1v-1h-7v1h-2v-1h-3v1h-1v1h-1v-1h-1v1h-1v-2h-1v1h-1v-1h-9v1h-1v5h-1v-5h-1v-1h-1v1h-2v-1h-2v2h-1v-1h-2v-1h-4v1h-1v-1h-1v1h-3v-1h-2v2h-1v-1h-3v1h-3v-1h-3v-1h-2v1h-3v-1h-1v1h-3v-1h-1v2h-1v-2h-3v1h-2v1h-1v-2h-2v1h-4v-1h-1v1h-1v-1h-1v1h-1v1h-1v-1h-2v-1h-2v1h-1v-1h-1v1h-3v-1h-2v1h-3v1h-1v-1h-1v-1h-2v2h-1v-1h-1v-1h-2v1h-1v-1h-1v1h-1v-1h-1v1h-1v5h-1v-5h-1v-1h-1v1h-2v-1h-9v1h-1v-1h-3v1h-2v-1h-1v1h-1v-1h-3v1h-2v-1h-1v1h-2v-1h-1v1h-1v-1h-1v2h-1v-1h-3v-1h-1v1h-3v-1h-1v1h-1v-1h-1v1h-2v-1h-2v1h-1v-1h-1v1h-3v-1h-1v2h-1v-1h-1v-1h-2v2h-1v-2h-1v1h-1v1h-1v-1h-1v1h-1v-1h-1v-1h-2v1h-1v-1h-1v2h-1v6h-1v-6h-1v-1h-1v1h-1v-2h-4v1h-1v-1h-15v1h-1v-1h-1v1h-3v1h-3v-1h-1v-1h-4v1h-1v-1h-2v1h-2v-1h-1v1h-3v-1h-2v1h-1v5h-1v-5h-1v-1h-2v1h-1v-1h-1z"/>
<path d="M278 910h2v1h2v-2h2v-1h1v2h2v1h1v-1h1v-1h1v-3h1v3h1v1h1v1h2v-2h1v1h1v1h3v-2h1v2h4v-1h1v1h1v-1h5v1h6v-1h2v1h1v-1h3v1h3v-1h1v1h3v-2h1v1h1v1h2v-1h2v1h4v-2h1v1h2v-1h1v1h1v-1h1v2h3v-1h1v-1h2v1h1v-1h1v1h1v1h2v-1h1v-1h2v1h2v1h2v-1h2v1h2v-1h1v1h1v-1h1v1h2v-1h1v1h2v-1h1v1h5v-1h1v1h1v-1h2v1h6v-1h2v-1h1v1h1v1h1v-1h1v-1h1v1h2v1h1v-1h1v1h1v-2h1v1h2v-1h1v1h4v1h1v-2h1v1h2v1h5v-1h2v1h1v-1h1v-1h1v1h1v1h1v-1h1v1h4v-1h1v1h2v-1h1v-1h1v2h9v-1h1v1h1v-1h3v1h1v-1h2v1h1v-1h1v1h1v-1h1v1h2v-1h1v1h1v-1h1v1h3v-1h1v1h1v-1h1v1h1v-1h5v1h1v-1h2v-1h1v1h4v1h1v-1h4v-1h1v2h3v-1h2v1h1v-1h1v1h3v-1h1v1h3v-1h1v-1h1v2h1v-1h1v1h1v-1h1v1h1v-1h1v1h1v-2h2v1h2v1h2v-1h2v1h1v-1h5v-1h1v1h2v1h1v-2h1v1h2v-1h1v1h1v-1h1v1h2v1h1v-1h1v1h1v-1h1v1h1v-1h2v1h1v-1h3v1h1v-2h1v2h1v-1h1v1h2v-1h1v-1h2v2h3v-2h1v1h1v-1h1v1h2v1h4v-1h2v-1h2v2h4v-1h1v1h1v-2h1v1h5v-1h1v1h4v1h1v-1h1v1h1v-2h1v1h1v1h2v-2h1v1h2v1h1v-1h1v1h2v-1h1v1h4v-1h1v1h2v-2h1v1h1v1h1v-2h1v1h3v1h1v-1h1v1h1v-1h1v1h2v-2h1v1h3v1h2v-1h1v-1h1v1h1v1h5v-1h1v-1h1v2h1v-2h1v1h1v1h3v-1h4v1h4v-1h1v1h2v-1h1v1h1v-1h1v1h4v-1h2v1h1v-1h1v1h1v-1h1v1h3v-1h1v1h1v-1h1v1h8v-1h1v1h1v-1h2v-1h1v2h6v-2h1v1h2v1h1v-1h3v-1h1v1h5v-1h1v2h1v-1h1v1h1v-2h1v2h1v-1h1v-1h1v1h1v-1h1v1h4v1h4v-1h1v1h4v-1h1v1h3v-1h2v1h1v-2h1v1h2v1h1v-1h1v1h6v-1h1v1h1v-1h1v-5h1v6h1v-1h6v1h2v-2h1v1h3v1h1v-1h2v1h1v-1h2v1h2v-1h1v1h1v-1h2v-1h1v2h3v-1h1v1h1v-1h2v1h3v-1h3v1h2v-1h2v-1h1v1h2v1h11v-2h1v1h2v1h1v-2h1v2h1v-2h1v1h1v1h2v-1h1v1h1v-1h1v-1h1v2h1v-2h1v1h2v-1h1v1h2v1h2v-1h3v1h1v-1h1v1h3v-1h2v-1h1v1h4v1h1v-1h1v-1h2v1h2v1h5v-1h2v-1h1v1h2v1h7v-1h1v1h1v-1h1v-1h2v1h1v1h3v-1h2v-1h1v1h1v1h1v-1h1v1h2v-2h2v2h1v-2h2v1h1v1h1v-1h2v1h1v-1h1v1h1v-1h2v1h1v-1h1v1h1v-1h1v1h1v-1h4v-1h1v1h1v1h2v-1h1v1h1v-1h3v1h1v-1h1v1h1v-1h3v1h2v-1h2v1h1v-1h1v1h3v-1h2v1h7v-2h1v2h2v-1h3v1h1v-1h1v1h1v-1h1v1h1v-1h2v1h1v-1h2v-1h1v1h2v1h3v-1h1v1h2v-1h1v-1h1v2h5v-1h1v1h4v-1h2v1h1v-1h2v1h10v-1h1v-4h1v5h1v-1h1v1h6v-2h1v1h2v1h1v-2h1v1h3v1h2v-2h1v1h2v1h1v-1h7v-1h1v1h1v-1h1v1h1v1h1v-1h2v1h1v-1h1v-1h2v1h1v1h1v-1h1v1h3v-2h1v1h1v1h2v-1h1v1h3v-1h2v1h1v-1h2v-1h1v1h2v-1h2v1h3v-1h1v2h1v-1h1v1h1v-1h1v-1h1v2h1v-1h2v1h1v-1h2v1h4v-1h3v1h1v-1h1v1h1v-1h1v1h1v-1h1v1h1v-2h1v1h1v-1h1v2h1v-1h2v-1h1v1h1v1h2v-2h1v2h1v-2h1v2h4v-1h1v1h2v-1h2v1h3v-1h3v1h1v-1h1v1h1v-1h2v1h1v-1h2v1h2v-1h1v1h1v-2h1v2h2v-1h5v1h4v-1h1v-1h1v2h3v-1h2v1h1v-1h2v-3h1v4h1v-1h1v1h3v-1h1v1h5v-2h1v2h5v-1h2v1h1v-1h2v1h2v-1h2v1h1v-1h2v-1h1v2h2v-1h1v1h2v-6h1v6h6v-1h2v1h10v-2h1v1h1v1h3v-1h1v1h1v-1h1v1h9v-1h1v1h3v-1h2v1h4v-1h1v1h3v-1h4v-1h1v1h1v1h1v-2h1v2h1v-1h1v1h4v-1h3v1h2v-1h2v1h1v-1h1v1h3v-1h2v1h2v-1h1v-1h1v2h4v-1h1v1h1v-1h1v1h1v-1h2v1h1v-2h1v2h8v-1h2v1h1v-1h1v-1h1v1h2v-1h1v1h1v1h4v-1h1v-1h1v1h1v1h3v-1h3v1h2v-1h1v1h1v-1h1v1h1v-1h1v1h4v-2h1v2h2v-1h5v-1h1v2h2v-1h1v1h4v-1h2v1h3v4h-1v1h-1v-1h-1v2h-1v-2h-6v1h-1v-1h-2v1h-2v-1h-1v1h-2v-1h-4v1h-3v-1h-6v1h-1v1h-1v-1h-1v1h-1v-1h-1v-1h-2v2h-1v-1h-1v-1h-5v1h-1v1h-1v-2h-1v2h-1v-1h-1v-1h-3v1h-3v-1h-2v1h-1v-1h-1v1h-2v-1h-1v1h-3v-1h-1v2h-1v-1h-1v1h-1v-2h-5v1h-1v-1h-2v1h-1v-1h-5v2h-2v-2h-1v1h-1v-1h-1v1h-3v-1h-6v1h-4v-1h-1v1h-2v-1h-6v1h-2v-1h-3v2h-1v-1h-1v-1h-2v1h-2v-1h-3v1h-1v-1h-6v1h-1v-1h-4v1h-1v-1h-6v1h-6v-1h-4v1h-1v4h-1v-4h-1v1h-1v-1h-1v-1h-2v1h-3v-1h-1v1h-2v-1h-4v1h-2v-1h-3v1h-1v-1h-1v1h-1v-1h-2v2h-1v-2h-1v1h-1v-1h-1v1h-1v-1h-4v1h-1v4h-1v-4h-2v1h-1v-2h-1v1h-2v-1h-2v1h-1v1h-1v-2h-1v2h-1v-2h-1v1h-2v-1h-1v1h-1v1h-2v-2h-3v1h-1v-1h-1v1h-3v-1h-1v1h-3v-1h-3v2h-1v-1h-2v-1h-1v1h-2v-1h-1v1h-1v-1h-1v1h-1v-1h-1v2h-1v-2h-3v1h-2v-1h-1v1h-1v-1h-1v2h-1v-1h-1v1h-1v-2h-2v1h-1v1h-1v-1h-1v1h-1v-1h-1v1h-1v-2h-4v1h-2v-1h-1v1h-2v-1h-2v1h-1v-1h-2v2h-1v-1h-1v-1h-2v1h-1v-1h-3v1h-1v-1h-2v1h-1v-1h-1v1h-1v-1h-1v1h-1v1h-1v-1h-1v-1h-1v1h-1v-1h-1v1h-1v-1h-6v1h-1v-1h-3v1h-3v-1h-1v1h-2v-1h-3v1h-1v-1h-2v1h-2v1h-1v-1h-1v-1h-1v1h-2v-1h-1v1h-1v-1h-1v1h-1v-1h-1v1h-2v-1h-2v1h-3v-1h-3v1h-2v1h-1v-2h-2v1h-1v-1h-1v2h-1v-2h-1v1h-1v4h-1v-4h-2v-1h-4v1h-1v1h-1v-2h-2v1h-1v1h-1v-2h-2v2h-1v-2h-4v1h-1v-1h-4v1h-2v1h-2v-1h-1v-1h-4v1h-1v-1h-2v1h-3v-1h-2v2h-1v-1h-1v-1h-2v1h-3v-1h-1v1h-1v-1h-1v2h-1v-2h-1v1h-2v-1h-4v2h-1v-1h-1v1h-1v-2h-6v1h-1v1h-1v-2h-2v1h-2v-1h-1v1h-2v-1h-1v1h-1v-1h-1v1h-1v1h-1v-2h-1v1h-1v-1h-2v1h-4v1h-1v-1h-3v-1h-1v1h-1v-1h-2v1h-2v1h-3v-2h-1v1h-1v1h-1v-1h-4v-1h-4v1h-2v-1h-6v2h-1v-2h-3v1h-1v-1h-2v1h-1v-1h-6v1h-2v-1h-1v1h-1v-1h-3v1h-4v1h-1v-1h-3v-1h-1v2h-1v-1h-5v-1h-3v1h-1v1h-1v-1h-1v-1h-1v2h-1v-1h-2v1h-1v-1h-3v-1h-1v1h-1v-1h-1v2h-2v-1h-2v-1h-1v1h-1v1h-2v-1h-1v-1h-2v1h-2v-1h-1v1h-1v-1h-6v1h-3v1h-1v-1h-3v-1h-1v1h-1v1h-1v-2h-1v1h-6v-1h-2v2h-1v-1h-1v-1h-1v1h-1v-1h-2v2h-2v-2h-1v1h-1v1h-1v-1h-1v-1h-1v1h-1v4h-1v-4h-1v-1h-3v1h-1v-1h-2v1h-1v-1h-1v1h-2v-1h-2v1h-1v6h-1v-6h-1v-1h-5v1h-2v-1h-1v1h-1v-1h-2v2h-1v-2h-4v1h-1v-1h-5v1h-1v-1h-4v1h-1v-1h-4v1h-1v1h-1v-1h-2v1h-1v-2h-1v1h-3v-1h-1v2h-1v-2h-1v1h-3v-1h-2v1h-5v-1h-1v1h-1v-1h-3v1h-1v-1h-2v1h-1v-1h-3v1h-1v-1h-7v1h-2v-1h-1v1h-2v1h-1v-2h-4v1h-1v-1h-1v1h-3v-1h-2v1h-1v-1h-1v1h-2v-1h-1v1h-1v-1h-1v2h-1v-2h-3v1h-2v-1h-3v1h-3v-1h-1v1h-2v-1h-2v1h-2v1h-1v-2h-2v1h-2v1h-2v-1h-2v-1h-3v1h-1v-1h-1v1h-1v-1h-7v1h-4v1h-1v-1h-1v-1h-1v1h-4v-1h-1v2h-1v-1h-2v1h-1v-2h-1v1h-6v1h-1v-1h-3v1h-1v-1h-1v-1h-2v1h-3v-1h-1v1h-1v-1h-3v1h-3v-1h-5v1h-2v1h-2v-1h-1v-1h-3v1h-1v-1h-1v1h-1v-1h-2v1h-1v1h-1v-1h-2v1h-2v-1h-1v-1h-1v1h-1v1h-1v-2h-1v1h-1v-1h-2v1h-3v-1h-3v2h-1v-1h-1v1h-1v-2h-2v1h-1v-1h-1v2h-2v-2h-1v1h-2v-1h-1v1h-1v1h-1v-2h-1v1h-1v-1h-2v1h-1v1h-1v-2h-1v1h-2v1h-1v-2h-1v1h-1v-1h-4v1h-1v-1h-2v1h-2v-1h-2v2h-1v-1h-1v-1h-3v1h-4v1h-1v-1h-1v-1h-1v1h-2v-1h-1v1h-3v1h-1v-2h-4v1h-1v-1h-1v1h-4v-1h-3v1h-2v-1h-1v1h-1v-1h-2v1h-1v-1h-3v1h-1v-1h-2v1h-3v-1h-2v1h-2v-1h-3v1h-2v-1h-2v2h-1v-1h-3v-1h-2v1h-1v-1h-6v1h-2v-1h-1v1h-1v-1h-2v1h-1v-1h-1v1h-6v-1h-1v1h-3v1h-3v-1h-1v1h-1v-2h-3v1h-1v-1h-3v1h-2v-1h-3v1h-1v-1h-2v1h-3v-1h-1v1h-2v-1h-9v1h-2v-1h-3v1h-1v1h-2v-1h-1v-1h-1v2h-3v-2h-1v1h-1v1h-3v-2h-1v1h-4v-1h-1v1h-4v1h-1v-1h-3v-1h-1v1h-4v1h-2v-2h-1v1h-2v-1h-3v1h-1v-1h-1v1h-1v-1h-1v1h-1v-1h-3v1h-2v-1h-7v1h-3v-1h-1v1h-1v-1h-3v2h-1v-2h-2v1h-1v-1h-1v1h-1v1h-2v-1h-1v-1h-1v1h-2v5h-1v-5h-2v1h-2v-1h-1v1h-3v-2h-3v1h-1z"/>
</g>
<g stroke="#000" stroke-width="1" fill="none" shape-rendering="crispEdges">
<path d="M277 184.5H1401M1401.5 185V943M277.5 184V943M277 944.5H1401"/>
<path d="M270 215.5H277M1402 215.5H1408M270 246.5H277M1402 246.5H1408M270 276.5H277M1402 276.5H1408M270 306.5H277M1402 306.5H1408M270 337.5H277M1402 337.5H1408M270 367.5H277M1402 367.5H1408M270 397.5H277M1402 397.5H1408M270 428.5H277M1402 428.5H1408M270 458.5H277M1402 458.5H1408M270 488.5H277M1402 488.5H1408M270 519.5H277M1402 519.5H1408M270 549.5H277M1402 549.5H1408M270 579.5H277M1402 579.5H1408M270 609.5H277M1402 609.5H1408M270 640.5H277M1402 640.5H1408M270 670.5H277M1402 670.5H1408M270 700.5H277M1402 700.5H1408M270 731.5H277M1402 731.5H1408M270 761.5H277M1402 761.5H1408M270 791.5H277M1402 791.5H1408M270 822.5H277M1402 822.5H1408M270 852.5H277M1402 852.5H1408M270 882.5H277M1402 882.5H1408M270 913.5H277M1402 913.5H1408M352.5 178V184M352.5 945V951M427.5 178V184M427.5 945V951M502.5 178V184M502.5 945V951M577.5 178V184M577.5 945V951M652.5 178V184M652.5 945V951M727.5 178V184M727.5 945V951M802.5 178V184M802.5 945V951M876.5 178V184M876.5 945V951M951.5 178V184M951.5 945V951M1026.5 178V184M1026.5 945V951M1101.5 178V184M1101.5 945V951M1176.5 178V184M1176.5 945V951M1251.5 178V184M1251.5 945V951M1326.5 178V184M1326.5 945V951"/>
</g>
<g fill="#000" font-size="13">
<text x="352.4" y="178" text-anchor="middle">02</text>
<text x="352.4" y="960" text-anchor="middle">02</text>
<text x="427.4" y="178" text-anchor="middle">04</text>
<text x="427.4" y="960" text-anchor="middle">04</text>
<text x="502.3" y="178" text-anchor="middle">06</text>
<text x="502.3" y="960" text-anchor="middle">06</text>
<text x="577.2" y="178" text-anchor="middle">08</text>
<text x="577.2" y="960" text-anchor="middle">08</text>
<text x="652.2" y="178" text-anchor="middle">10</text>
<text x="652.2" y="960" text-anchor="middle">10</text>
<text x="727.1" y="178" text-anchor="middle">12</text>
<text x="727.1" y="960" text-anchor="middle">12</text>
<text x="802.0" y="178" text-anchor="middle">14</text>
<text x="802.0" y="960" text-anchor="middle">14</text>
<text x="877.0" y="178" text-anchor="middle">16</text>
<text x="877.0" y="960" text-anchor="middle">16</text>
<text x="951.9" y="178" text-anchor="middle">18</text>
<text x="951.9" y="960" text-anchor="middle">18</text>
<text x="1026.8" y="178" text-anchor="middle">20</text>
<text x="1026.8" y="960" text-anchor="middle">20</text>
<text x="1101.8" y="178" text-anchor="middle">22</text>
<text x="1101.8" y="960" text-anchor="middle">22</text>
<text x="1176.7" y="178" text-anchor="middle">24</text>
<text x="1176.7" y="960" text-anchor="middle">24</text>
<text x="1251.6" y="178" text-anchor="middle">26</text>
<text x="1251.6" y="960" text-anchor="middle">26</text>
<text x="1326.6" y="178" text-anchor="middle">28</text>
<text x="1326.6" y="960" text-anchor="middle">28</text>
<text x="1407" y="220">12:30</text>
<text x="1407" y="251">13:00</text>
<text x="1407" y="281">13:30</text>
<text x="1407" y="311">14:00</text>
<text x="1407" y="342">14:30</text>
<text x="1407" y="372">15:00</text>
<text x="1407" y="402">15:30</text>
<text x="1407" y="433">16:00</text>
<text x="1407" y="463">16:30</text>
<text x="1407" y="493">17:00</text>
<text x="1407" y="524">17:30</text>
<text x="1407" y="554">18:00</text>
<text x="1407" y="584">18:30</text>
<text x="1407" y="614">19:00</text>
<text x="1407" y="645">19:30</text>
<text x="1407" y="675">20:00</text>
<text x="1407" y="705">20:30</text>
<text x="1407" y="736">21:00</text>
<text x="1407" y="766">21:30</text>
<text x="1407" y="796">22:00</text>
<text x="1407" y="827">22:30</text>
<text x="1407" y="857">23:00</text>
<text x="1407" y="887">23:30</text>
<text x="1407" y="918">24:00</text>
</g>
</svg>
</body></html>
